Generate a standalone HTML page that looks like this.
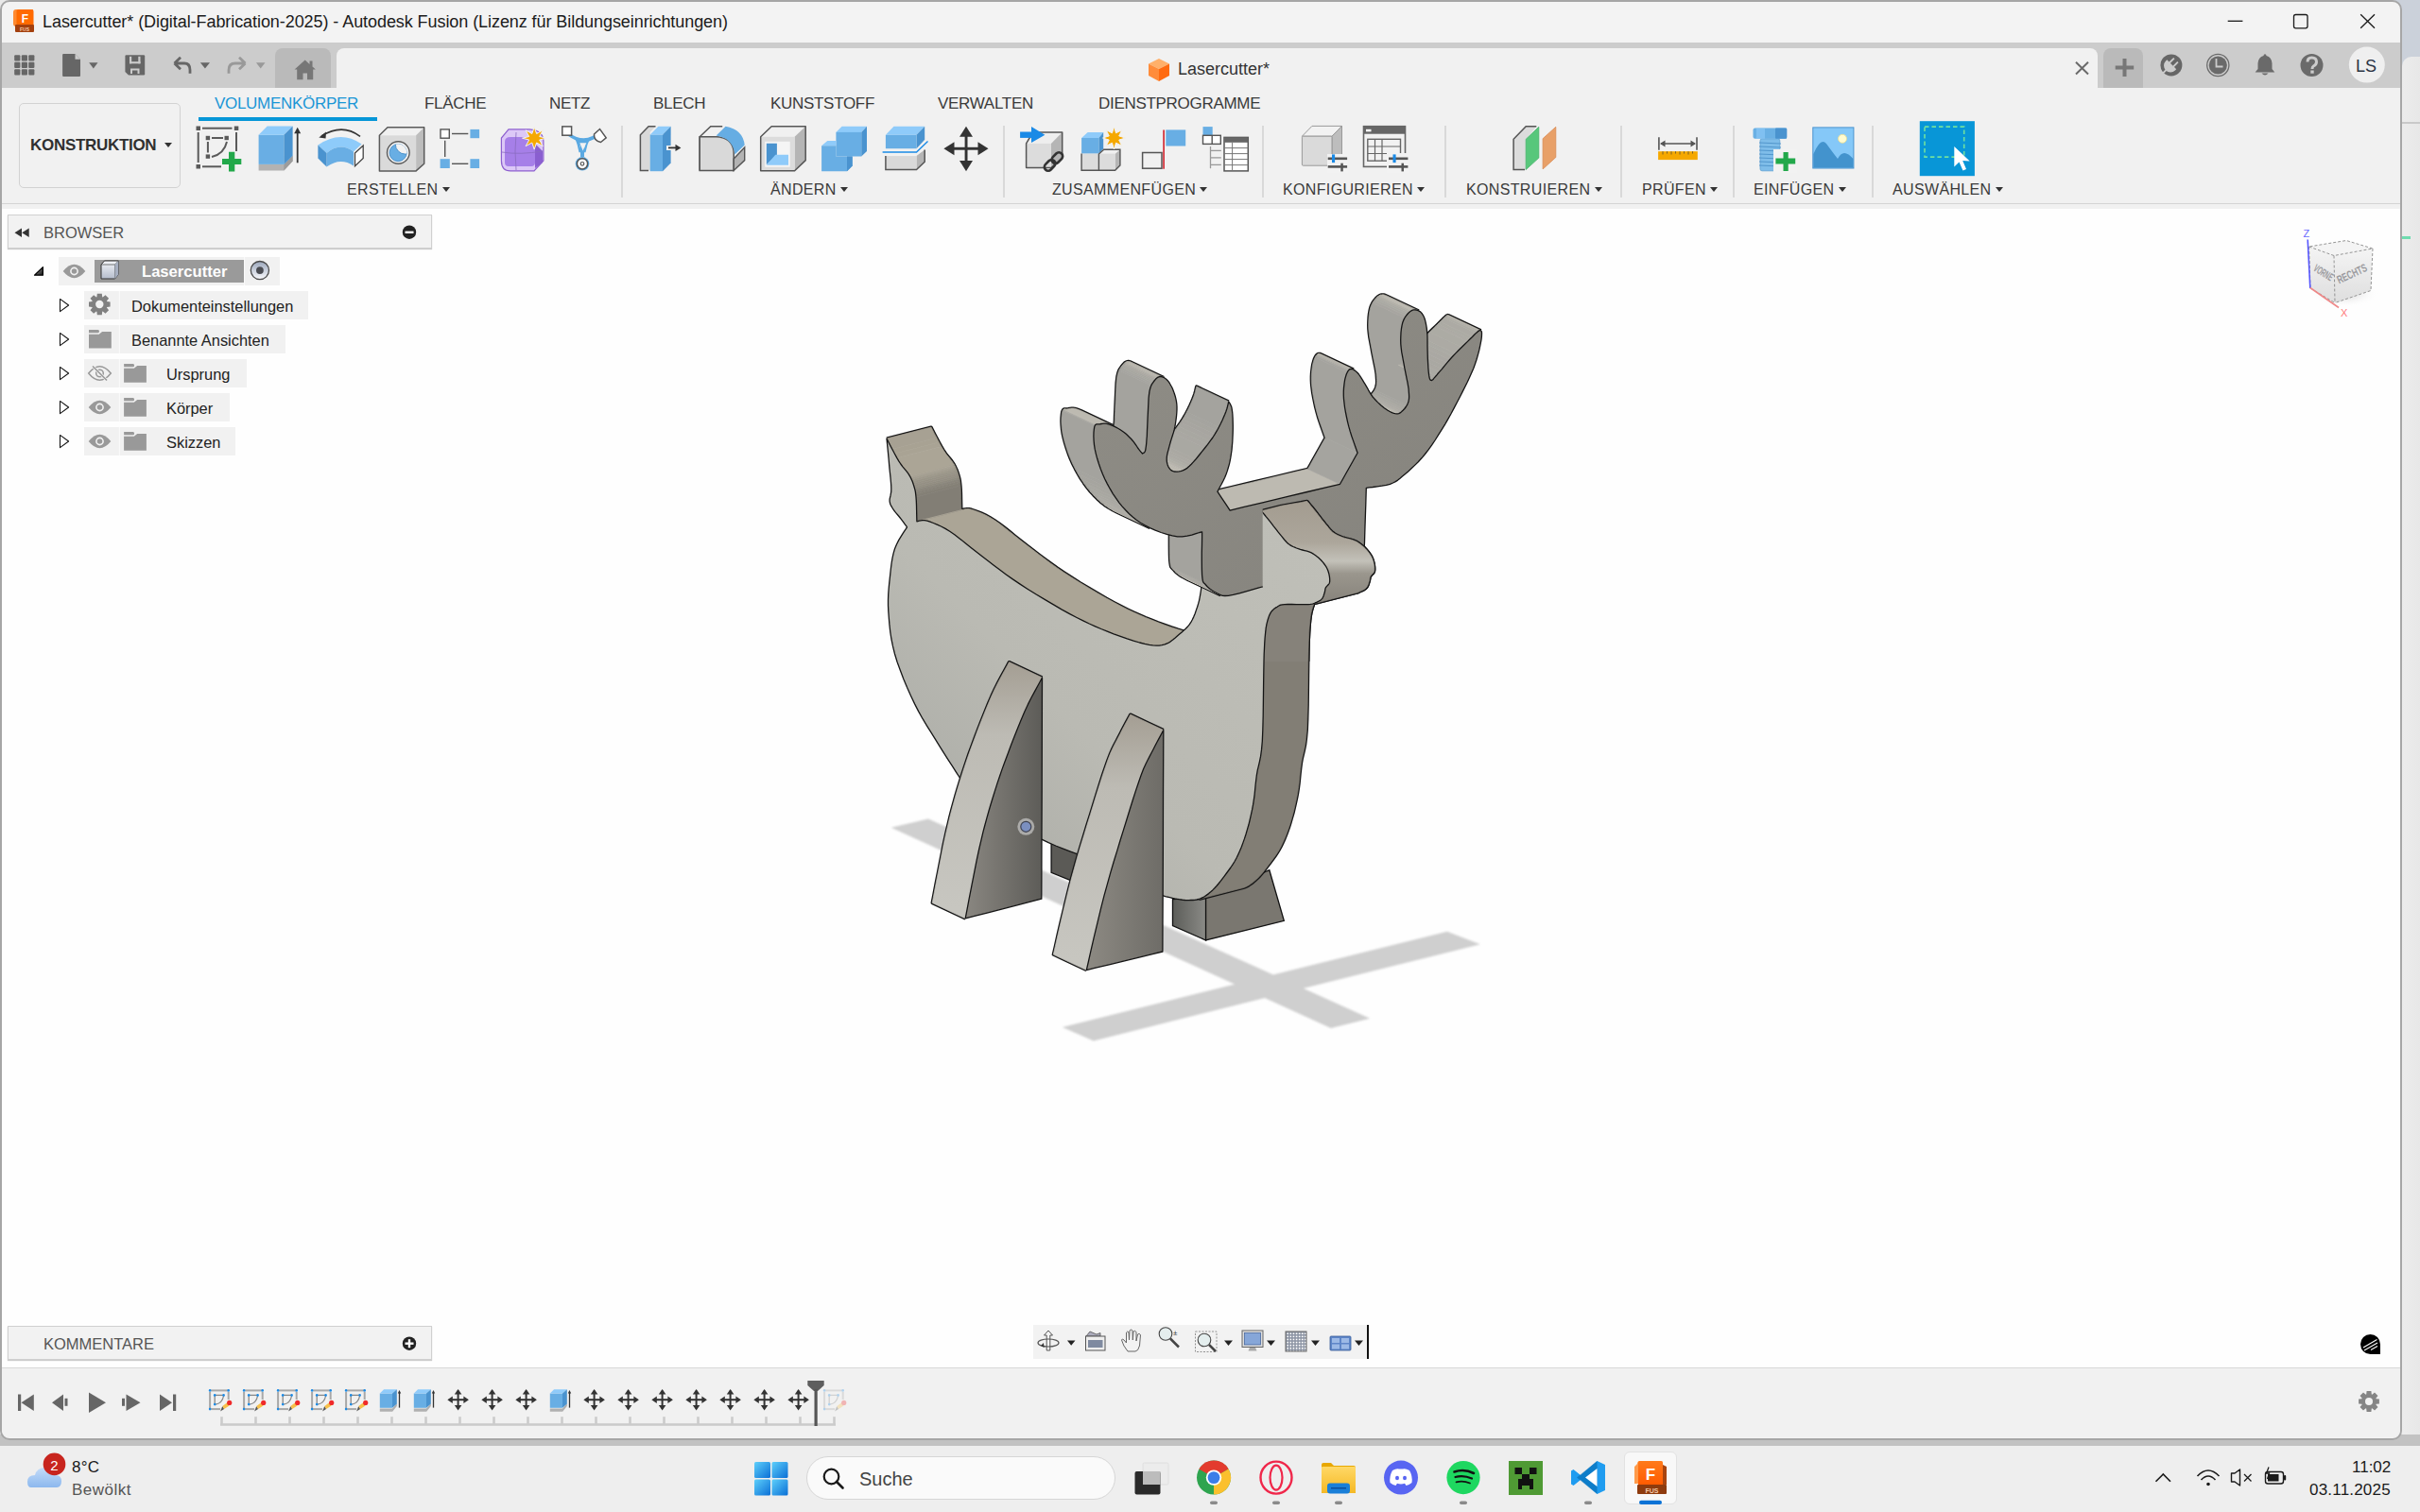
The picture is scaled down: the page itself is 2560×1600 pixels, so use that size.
<!DOCTYPE html>
<html><head><meta charset="utf-8">
<style>
*{margin:0;padding:0;box-sizing:border-box}
html,body{width:2560px;height:1600px;overflow:hidden;background:#e9e9e9;font-family:"Liberation Sans",sans-serif;position:relative}
.a{position:absolute}
svg{position:absolute;overflow:visible}
.t{position:absolute;white-space:nowrap;line-height:1}
.tab{font-size:17px;color:#3a3a3a;top:101px;letter-spacing:-0.3px}
.grp{font-size:16px;color:#3a3a3a;top:193px;letter-spacing:0.35px}
.tri{display:inline-block;width:0;height:0;border-left:4.5px solid transparent;border-right:4.5px solid transparent;border-top:5.7px solid #333;margin-left:4.3px;vertical-align:3.5px}
.sep{position:absolute;top:133px;width:2px;height:76px;background:#d9d9d9}
.row{position:absolute;height:30px;background:#f1f1f1}
.rt{position:absolute;font-size:16.4px;color:#222;line-height:1;white-space:nowrap}
</style></head><body>
<!-- desktop right strip -->
<div class="a" style="left:2530px;top:0;width:30px;height:70px;background:#cbd1da"></div>
<div class="a" style="left:2541px;top:60px;width:40px;height:1470px;background:linear-gradient(90deg,#ececec,#e2e2e2);border-top-left-radius:10px"></div>
<div class="a" style="left:2541px;top:129px;width:19px;height:2px;background:#c9c9c9"></div>
<div class="a" style="left:2541px;top:250px;width:9px;height:3px;background:#6fdcb0"></div>
<div class="a" style="left:0;top:1518px;width:2560px;height:12px;background:#c2c2c2"></div>

<!-- window frame -->
<div class="a" style="left:0;top:0;width:2541px;height:1524px;border:2px solid #a6a6a6;border-radius:10px;background:#f3f3f3"></div>
<!-- tab strip -->
<div class="a" style="left:2px;top:45px;width:2537px;height:48px;background:#cccccc"></div>
<div class="a" style="left:291px;top:51px;width:59px;height:42px;background:#bababa;border-radius:8px 8px 0 0"></div>
<div class="a" style="left:356px;top:51px;width:1863px;height:42px;background:#f1f1f1;border-radius:8px 8px 0 0"></div>
<div class="a" style="left:2px;top:93px;width:2537px;height:128px;background:#f1f1f1"></div>
<div class="a" style="left:2225px;top:51px;width:42px;height:42px;background:#bababa;border-radius:8px 8px 0 0"></div>
<!-- ribbon line -->
<div class="a" style="left:2px;top:215px;width:2537px;height:1px;background:#d4d4d4"></div>
<!-- viewport -->
<div class="a" style="left:2px;top:221px;width:2537px;height:1226px;background:#fefefe"></div>
<div class="a" style="left:2px;top:1448px;width:2537px;height:73px;background:#f1f1f1;border-radius:0 0 8px 8px"></div>
<div class="a" style="left:2px;top:1447px;width:2537px;height:1px;background:#d8d8d8"></div>

<!-- title -->
<div class="t" style="left:45px;top:14px;font-size:18px;color:#1b1b1b;letter-spacing:-0.07px">Lasercutter* (Digital-Fabrication-2025) - Autodesk Fusion (Lizenz für Bildungseinrichtungen)</div>
<div class="t" style="left:1246px;top:64px;font-size:18px;color:#333">Lasercutter*</div>

<!-- ribbon tabs -->
<div class="t tab" style="left:227px;color:#1a96d6">VOLUMENKÖRPER</div>
<div class="a" style="left:210px;top:124px;width:189px;height:4px;background:#0696d7"></div>
<div class="t tab" style="left:449px">FLÄCHE</div>
<div class="t tab" style="left:581px">NETZ</div>
<div class="t tab" style="left:691px">BLECH</div>
<div class="t tab" style="left:815px">KUNSTSTOFF</div>
<div class="t tab" style="left:992px">VERWALTEN</div>
<div class="t tab" style="left:1162px">DIENSTPROGRAMME</div>

<!-- konstruktion -->
<div class="a" style="left:20px;top:109px;width:171px;height:90px;border:1px solid #d2d2d2;border-radius:5px"></div>
<div class="t" style="left:32px;top:145px;font-size:17px;font-weight:bold;color:#303030;letter-spacing:-0.3px">KONSTRUKTION<span class="tri" style="margin-left:9px;border-top-color:#333;border-top-width:5.3px;vertical-align:3px"></span></div>

<!-- group labels -->
<div class="t grp" style="left:367px">ERSTELLEN<span class="tri"></span></div>
<div class="t grp" style="left:815px">ÄNDERN<span class="tri"></span></div>
<div class="t grp" style="left:1113px">ZUSAMMENFÜGEN<span class="tri"></span></div>
<div class="t grp" style="left:1357px">KONFIGURIEREN<span class="tri"></span></div>
<div class="t grp" style="left:1551px">KONSTRUIEREN<span class="tri"></span></div>
<div class="t grp" style="left:1737px">PRÜFEN<span class="tri"></span></div>
<div class="t grp" style="left:1855px">EINFÜGEN<span class="tri"></span></div>
<div class="t grp" style="left:2002px">AUSWÄHLEN<span class="tri"></span></div>
<div class="sep" style="left:657px"></div>
<div class="sep" style="left:1061px"></div>
<div class="sep" style="left:1335px"></div>
<div class="sep" style="left:1528px"></div>
<div class="sep" style="left:1714px"></div>
<div class="sep" style="left:1833px"></div>
<div class="sep" style="left:1980px"></div>

<!-- browser -->
<div class="a" style="left:8px;top:227px;width:449px;height:36px;border:1px solid #d0d0d0;background:#f2f2f2;box-shadow:0 1px 1px #ccc"></div>
<div class="t" style="left:46px;top:238px;font-size:16.5px;color:#555">BROWSER</div>

<!-- tree rows -->
<div class="row" style="left:62px;top:272px;width:234px"></div>
<div class="a" style="left:100px;top:275px;width:158px;height:24px;background:#9a9a9a"></div>
<div class="rt" style="left:150px;top:280px;font-weight:bold;color:#fff;font-size:16.6px">Lasercutter</div>
<div class="row" style="left:89px;top:308px;width:237px"></div>
<div class="rt" style="left:139px;top:316px">Dokumenteinstellungen</div>
<div class="row" style="left:89px;top:344px;width:213px"></div>
<div class="rt" style="left:139px;top:352px">Benannte Ansichten</div>
<div class="row" style="left:89px;top:380px;width:172px"></div>
<div class="rt" style="left:176px;top:388px">Ursprung</div>
<div class="row" style="left:89px;top:416px;width:154px"></div>
<div class="rt" style="left:176px;top:424px">Körper</div>
<div class="row" style="left:89px;top:452px;width:160px"></div>
<div class="rt" style="left:176px;top:460px">Skizzen</div>

<!-- kommentare -->
<div class="a" style="left:8px;top:1403px;width:449px;height:36px;border:1px solid #d0d0d0;background:#f2f2f2;box-shadow:0 1px 1px #ccc"></div>
<div class="t" style="left:46px;top:1414px;font-size:16.5px;color:#555">KOMMENTARE</div>

<svg class="a" style="left:0;top:0" width="2560" height="1600" viewBox="0 0 2560 1600"><path d="M942.7,875.8 L982,866.5 L1449.2,1077.7 L1407.9,1088 Z M1123.8,1087 L1530.8,985.7 L1565.9,999.2 L1156.8,1101.4 Z" fill="#cfcfcf" filter="url(#blur1)"/>
<defs><filter id="blur1"><feGaussianBlur stdDeviation="1.2"/></filter><linearGradient id="gbody" x1="1" y1="0" x2="0" y2="1"><stop offset="0" stop-color="#c0c0b9"/><stop offset="0.6" stop-color="#babab3"/><stop offset="1" stop-color="#a6a7a2"/></linearGradient><linearGradient id="gleg" x1="0" y1="0" x2="1" y2="0"><stop offset="0" stop-color="#8a8781"/><stop offset="1" stop-color="#5d5c58"/></linearGradient><linearGradient id="gleg2" x1="0" y1="0" x2="1" y2="0"><stop offset="0" stop-color="#8d8a83"/><stop offset="1" stop-color="#6e6c67"/></linearGradient><linearGradient id="gant" x1="0" y1="0" x2="1" y2="1"><stop offset="0" stop-color="#8f8d86"/><stop offset="1" stop-color="#85837d"/></linearGradient><linearGradient id="glegs1" gradientUnits="userSpaceOnUse" x1="0" y1="700" x2="0" y2="960"><stop offset="0" stop-color="#a49e93"/><stop offset="0.3" stop-color="#bdbbb4"/><stop offset="1" stop-color="#c7c6c0"/></linearGradient><linearGradient id="glegs2" gradientUnits="userSpaceOnUse" x1="0" y1="755" x2="0" y2="1015"><stop offset="0" stop-color="#a49e93"/><stop offset="0.3" stop-color="#bdbbb4"/><stop offset="1" stop-color="#c7c6c0"/></linearGradient></defs>
<path d="M1112.1,891.3 L1112.1,923.3 L1134.9,932.6 L1142,904.7 Z" fill="#5b5a56" stroke="#111" stroke-width="1.3"/>
<linearGradient id="grl" x1="0" y1="0" x2="1" y2="0"><stop offset="0" stop-color="#5c5d59"/><stop offset="1" stop-color="#8a8a86"/></linearGradient><path d="M1240.5,951.7 L1240.5,979.5 L1275.6,995 L1275.6,949.6 Z" fill="url(#grl)" stroke="#111" stroke-width="1.3"/>
<path d="M1275.6,949.6 L1275.6,995 L1358.3,974.4 L1342.8,920.7 Z" fill="#7a7770" stroke="#111" stroke-width="1.3"/>
<path d="M972.2,551.2 L1019.2,539.2 L1020.9,538.8 L1022.8,538.6 L1025.1,538.6 L1027.8,539.2 L1030.9,540.2 L1034.4,541.5 L1038.3,543.1 L1042.5,545.0 L1047.0,547.4 L1051.7,550.3 L1056.8,553.8 L1062.2,557.9 L1067.9,562.4 L1073.8,567.2 L1079.9,572.1 L1086.0,576.8 L1092.2,581.5 L1098.3,586.2 L1104.7,591.0 L1111.3,595.9 L1118.3,600.9 L1125.7,605.9 L1133.9,611.2 L1142.8,616.8 L1152.2,622.4 L1161.5,627.9 L1170.4,633.1 L1178.6,637.6 L1186.0,641.5 L1192.8,644.9 L1199.3,648.0 L1205.6,650.8 L1211.8,653.5 L1218.3,656.1 L1225.1,658.8 L1232.2,661.4 L1239.3,663.9 L1246.1,666.1 L1252.5,668.0 L1258.0,669.4 L1262.7,670.4 L1266.6,670.9 L1270.1,671.2 L1273.2,671.1 L1276.2,670.6 L1279.2,669.9 L1232.2,681.9" fill="none" stroke="#151515" stroke-width="3.3" stroke-linejoin="round"/>
<path d="M1308.4,547.3 L1355.4,535.3 L1366.5,533.3 L1376.1,531.7 L1382.7,530.3 L1383.6,531.4 L1384.9,533.0 L1386.4,534.9 L1388.1,536.9 L1389.7,538.9 L1391.3,540.9 L1392.8,542.8 L1394.3,544.8 L1395.9,546.8 L1397.5,548.9 L1399.0,550.9 L1400.6,552.8 L1402.1,554.7 L1403.7,556.6 L1405.2,558.5 L1406.7,560.3 L1408.3,562.0 L1409.9,563.4 L1411.5,564.6 L1413.2,565.6 L1414.9,566.5 L1416.6,567.2 L1418.5,568.0 L1420.4,568.7 L1422.5,569.4 L1424.8,570.0 L1427.1,570.6 L1429.5,571.2 L1431.7,571.9 L1433.7,572.7 L1435.5,573.6 L1437.2,574.7 L1438.7,575.8 L1440.2,576.9 L1441.6,578.1 L1442.9,579.3 L1444.2,580.5 L1445.4,581.8 L1446.6,583.2 L1447.6,584.5 L1448.6,585.9 L1449.5,587.2 L1450.3,588.5 L1450.9,589.8 L1451.5,591.1 L1452.0,592.4 L1452.4,593.7 L1452.8,595.1 L1453.1,596.6 L1453.4,598.2 L1453.6,599.9 L1453.7,601.5 L1453.7,603.1 L1453.5,604.4 L1453.1,605.5 L1452.4,606.5 L1451.6,607.3 L1450.8,608.1 L1450.1,608.9 L1449.5,609.7 L1449.1,610.6 L1448.9,611.4 L1448.8,612.3 L1448.6,613.1 L1448.5,614.0 L1448.2,615.0 L1447.9,616.1 L1447.5,617.2 L1447.2,618.4 L1446.7,619.5 L1446.2,620.6 L1445.5,621.6 L1444.7,622.4 L1443.7,623.2 L1442.6,623.9 L1441.4,624.5 L1440.2,625.1 L1439.0,625.6 L1438.0,626.1 L1437.1,626.5 L1436.2,626.9 L1435.0,627.2 L1388.0,639.2" fill="none" stroke="#151515" stroke-width="3.3" stroke-linejoin="round"/>
<path d="M1354.9,640.2 L1401.9,628.2 L1400.8,628.5 L1399.9,629.0 L1399.0,629.5 L1398.0,630.2 L1396.8,630.9 L1395.6,631.7 L1394.4,632.6 L1393.3,633.7 L1392.2,634.8 L1391.3,636.1 L1390.5,637.6 L1389.7,639.2 L1389.1,640.9 L1388.5,642.8 L1387.9,644.7 L1387.4,646.7 L1386.9,648.6 L1386.6,650.4 L1386.2,652.3 L1386.0,654.4 L1385.7,656.9 L1385.4,660.0 L1385.1,663.2 L1384.9,666.1 L1384.7,669.5 L1384.5,673.9 L1384.2,679.9 L1384.0,688.0 L1383.8,699.4 L1383.6,713.8 L1383.4,729.8 L1383.2,745.9 L1382.8,760.7 L1382.3,772.6 L1381.5,781.4 L1380.6,788.2 L1379.5,793.6 L1378.4,798.3 L1377.3,802.9 L1376.4,808.0 L1375.7,813.5 L1375.1,818.8 L1374.6,824.0 L1374.1,829.1 L1373.4,834.2 L1372.6,839.4 L1371.6,844.7 L1370.4,850.1 L1369.2,855.5 L1367.9,860.8 L1366.4,865.9 L1365.0,870.8 L1363.5,875.4 L1361.9,879.9 L1360.3,884.2 L1358.6,888.3 L1356.8,892.2 L1355.0,896.0 L1353.1,899.5 L1351.0,902.9 L1348.9,906.0 L1346.7,909.0 L1344.5,912.0 L1342.4,914.8 L1340.3,917.6 L1338.2,920.3 L1336.1,923.0 L1334.0,925.5 L1331.9,927.8 L1329.8,929.9 L1327.7,931.8 L1325.6,933.6 L1323.5,935.1 L1321.5,936.5 L1319.4,937.7 L1317.3,938.7 L1315.2,939.5 L1268.2,951.5" fill="none" stroke="#151515" stroke-width="3.3" stroke-linejoin="round"/>
<path d="M938.0,464.1 L985.0,452.1 L986.4,454.8 L988.4,458.7 L990.8,463.2 L993.3,468.0 L995.7,472.4 L997.9,476.1 L999.8,479.0 L1001.7,481.6 L1003.6,483.8 L1005.3,485.9 L1006.9,487.9 L1008.3,489.9 L1009.5,491.9 L1010.5,493.8 L1011.3,495.6 L1012.1,497.3 L1012.8,499.2 L1013.4,501.1 L1014.0,503.0 L1014.5,504.8 L1015.0,506.6 L1015.4,508.7 L1015.7,511.1 L1016.0,514.0 L1016.3,517.9 L1016.5,522.6 L1016.6,527.7 L1016.7,532.6 L1016.8,536.8 L1016.9,539.8 L1017.9,539.6 L970.9,551.6" fill="none" stroke="#151515" stroke-width="3.3" stroke-linejoin="round"/>
<path d="M972.2,551.2 L973.9,550.8 L975.8,550.6 L978.1,550.6 L980.8,551.2 L983.9,552.2 L987.4,553.5 L991.3,555.1 L995.5,557.0 L1000.0,559.4 L1004.7,562.3 L1009.8,565.8 L1015.2,569.9 L1020.9,574.4 L1026.8,579.2 L1032.9,584.1 L1039.0,588.8 L1045.2,593.5 L1051.3,598.2 L1057.7,603.0 L1064.3,607.9 L1071.3,612.9 L1078.7,617.9 L1086.9,623.2 L1095.8,628.8 L1105.2,634.4 L1114.5,639.9 L1123.4,645.1 L1131.6,649.6 L1139.0,653.5 L1145.8,656.9 L1152.3,660.0 L1158.6,662.8 L1164.8,665.5 L1171.3,668.1 L1178.1,670.8 L1185.2,673.4 L1192.3,675.9 L1199.1,678.1 L1205.5,680.0 L1211.0,681.4 L1215.7,682.4 L1219.6,682.9 L1223.1,683.2 L1226.2,683.1 L1229.2,682.6 L1232.2,681.9 L1279.2,669.9 L1276.2,670.6 L1273.2,671.1 L1270.1,671.2 L1266.6,670.9 L1262.7,670.4 L1258.0,669.4 L1252.5,668.0 L1246.1,666.1 L1239.3,663.9 L1232.2,661.4 L1225.1,658.8 L1218.3,656.1 L1211.8,653.5 L1205.6,650.8 L1199.3,648.0 L1192.8,644.9 L1186.0,641.5 L1178.6,637.6 L1170.4,633.1 L1161.5,627.9 L1152.2,622.4 L1142.8,616.8 L1133.9,611.2 L1125.7,605.9 L1118.3,600.9 L1111.3,595.9 L1104.7,591.0 L1098.3,586.2 L1092.2,581.5 L1086.0,576.8 L1079.9,572.1 L1073.8,567.2 L1067.9,562.4 L1062.2,557.9 L1056.8,553.8 L1051.7,550.3 L1047.0,547.4 L1042.5,545.0 L1038.3,543.1 L1034.4,541.5 L1030.9,540.2 L1027.8,539.2 L1025.1,538.6 L1022.8,538.6 L1020.9,538.8 L1019.2,539.2Z" fill="#aba596" stroke="#aba596" stroke-width="0.7"/>
<path d="M1308.4,547.3 L1319.5,545.3 L1329.1,543.7 L1335.7,542.3 L1336.6,543.4 L1337.9,545.0 L1339.4,546.9 L1341.1,548.9 L1342.7,550.9 L1344.3,552.9 L1345.8,554.8 L1347.3,556.8 L1348.9,558.8 L1350.5,560.9 L1352.0,562.9 L1353.6,564.8 L1355.1,566.7 L1356.7,568.6 L1358.2,570.5 L1359.7,572.3 L1361.3,574.0 L1362.9,575.4 L1364.5,576.6 L1366.2,577.6 L1367.9,578.5 L1369.6,579.2 L1371.5,580.0 L1373.4,580.7 L1375.5,581.4 L1377.8,582.0 L1380.1,582.6 L1382.5,583.2 L1384.7,583.9 L1386.7,584.7 L1388.5,585.6 L1390.2,586.7 L1391.7,587.8 L1393.2,588.9 L1394.6,590.1 L1395.9,591.3 L1397.2,592.5 L1398.4,593.8 L1399.6,595.2 L1400.6,596.5 L1401.6,597.9 L1402.5,599.2 L1403.3,600.5 L1450.3,588.5 L1449.5,587.2 L1448.6,585.9 L1447.6,584.5 L1446.6,583.2 L1445.4,581.8 L1444.2,580.5 L1442.9,579.3 L1441.6,578.1 L1440.2,576.9 L1438.7,575.8 L1437.2,574.7 L1435.5,573.6 L1433.7,572.7 L1431.7,571.9 L1429.5,571.2 L1427.1,570.6 L1424.8,570.0 L1422.5,569.4 L1420.4,568.7 L1418.5,568.0 L1416.6,567.2 L1414.9,566.5 L1413.2,565.6 L1411.5,564.6 L1409.9,563.4 L1408.3,562.0 L1406.7,560.3 L1405.2,558.5 L1403.7,556.6 L1402.1,554.7 L1400.6,552.8 L1399.0,550.9 L1397.5,548.9 L1395.9,546.8 L1394.3,544.8 L1392.8,542.8 L1391.3,540.9 L1389.7,538.9 L1388.1,536.9 L1386.4,534.9 L1384.9,533.0 L1383.6,531.4 L1382.7,530.3 L1376.1,531.7 L1366.5,533.3 L1355.4,535.3Z" fill="#aba596" stroke="#aba596" stroke-width="0.7"/>
<path d="M1403.3,600.5 L1403.9,601.8 L1450.9,589.8 L1450.3,588.5Z" fill="#a7a193" stroke="#a7a193" stroke-width="0.7"/>
<path d="M1403.9,601.8 L1404.5,603.1 L1451.5,591.1 L1450.9,589.8Z" fill="#a29c8e" stroke="#a29c8e" stroke-width="0.7"/>
<path d="M1404.5,603.1 L1405.0,604.4 L1452.0,592.4 L1451.5,591.1Z" fill="#9c978a" stroke="#9c978a" stroke-width="0.7"/>
<path d="M1405.0,604.4 L1405.4,605.7 L1452.4,593.7 L1452.0,592.4Z" fill="#979286" stroke="#979286" stroke-width="0.7"/>
<path d="M1405.4,605.7 L1405.8,607.1 L1452.8,595.1 L1452.4,593.7Z" fill="#928d82" stroke="#928d82" stroke-width="0.7"/>
<path d="M1405.8,607.1 L1406.1,608.6 L1453.1,596.6 L1452.8,595.1Z" fill="#8d897e" stroke="#8d897e" stroke-width="0.7"/>
<path d="M1406.1,608.6 L1406.4,610.2 L1453.4,598.2 L1453.1,596.6Z" fill="#8a857b" stroke="#8a857b" stroke-width="0.7"/>
<path d="M1406.4,610.2 L1406.6,611.9 L1453.6,599.9 L1453.4,598.2Z" fill="#858178" stroke="#858178" stroke-width="0.7"/>
<path d="M1406.6,611.9 L1406.7,613.5 L1406.7,615.1 L1406.5,616.4 L1406.1,617.5 L1405.4,618.5 L1404.6,619.3 L1403.8,620.1 L1403.1,620.9 L1402.5,621.7 L1402.1,622.6 L1401.9,623.4 L1401.8,624.3 L1401.6,625.1 L1401.5,626.0 L1401.2,627.0 L1400.9,628.1 L1400.5,629.2 L1400.2,630.4 L1399.7,631.5 L1399.2,632.6 L1398.5,633.6 L1397.7,634.4 L1396.7,635.2 L1395.6,635.9 L1394.4,636.5 L1393.2,637.1 L1392.0,637.6 L1391.0,638.1 L1390.1,638.5 L1389.2,638.9 L1388.0,639.2 L1435.0,627.2 L1436.2,626.9 L1437.1,626.5 L1438.0,626.1 L1439.0,625.6 L1440.2,625.1 L1441.4,624.5 L1442.6,623.9 L1443.7,623.2 L1444.7,622.4 L1445.5,621.6 L1446.2,620.6 L1446.7,619.5 L1447.2,618.4 L1447.5,617.2 L1447.9,616.1 L1448.2,615.0 L1448.5,614.0 L1448.6,613.1 L1448.8,612.3 L1448.9,611.4 L1449.1,610.6 L1449.5,609.7 L1450.1,608.9 L1450.8,608.1 L1451.6,607.3 L1452.4,606.5 L1453.1,605.5 L1453.5,604.4 L1453.7,603.1 L1453.7,601.5 L1453.6,599.9Z" fill="#827e75" stroke="#827e75" stroke-width="0.7"/>
<path d="M1354.9,640.2 L1353.8,640.5 L1352.9,641.0 L1352.0,641.5 L1351.0,642.2 L1349.8,642.9 L1348.6,643.7 L1347.4,644.6 L1346.3,645.7 L1345.2,646.8 L1344.3,648.1 L1343.5,649.6 L1342.7,651.2 L1342.1,652.9 L1341.5,654.8 L1340.9,656.7 L1340.4,658.7 L1339.9,660.6 L1339.6,662.4 L1339.2,664.3 L1339.0,666.4 L1338.7,668.9 L1338.4,672.0 L1338.1,675.2 L1337.9,678.1 L1337.7,681.5 L1337.5,685.9 L1337.2,691.9 L1337.0,700.0 L1336.8,711.4 L1336.6,725.8 L1336.4,741.8 L1336.2,757.9 L1335.8,772.7 L1335.3,784.6 L1334.5,793.4 L1333.6,800.2 L1332.5,805.6 L1331.4,810.3 L1330.3,814.9 L1329.4,820.0 L1328.7,825.5 L1328.1,830.8 L1327.6,836.0 L1327.1,841.1 L1326.4,846.2 L1325.6,851.4 L1324.6,856.7 L1323.4,862.1 L1322.2,867.5 L1320.9,872.8 L1319.4,877.9 L1318.0,882.8 L1316.5,887.4 L1314.9,891.9 L1313.3,896.2 L1311.6,900.3 L1309.8,904.2 L1308.0,908.0 L1306.1,911.5 L1304.0,914.9 L1301.9,918.0 L1299.7,921.0 L1297.5,924.0 L1295.4,926.8 L1293.3,929.6 L1291.2,932.3 L1289.1,935.0 L1287.0,937.5 L1284.9,939.8 L1282.8,941.9 L1280.7,943.8 L1278.6,945.6 L1276.5,947.1 L1274.5,948.5 L1272.4,949.7 L1270.3,950.7 L1268.2,951.5 L1315.2,939.5 L1317.3,938.7 L1319.4,937.7 L1321.5,936.5 L1323.5,935.1 L1325.6,933.6 L1327.7,931.8 L1329.8,929.9 L1331.9,927.8 L1334.0,925.5 L1336.1,923.0 L1338.2,920.3 L1340.3,917.6 L1342.4,914.8 L1344.5,912.0 L1346.7,909.0 L1348.9,906.0 L1351.0,902.9 L1353.1,899.5 L1355.0,896.0 L1356.8,892.2 L1358.6,888.3 L1360.3,884.2 L1361.9,879.9 L1363.5,875.4 L1365.0,870.8 L1366.4,865.9 L1367.9,860.8 L1369.2,855.5 L1370.4,850.1 L1371.6,844.7 L1372.6,839.4 L1373.4,834.2 L1374.1,829.1 L1374.6,824.0 L1375.1,818.8 L1375.7,813.5 L1376.4,808.0 L1377.3,802.9 L1378.4,798.3 L1379.5,793.6 L1380.6,788.2 L1381.5,781.4 L1382.3,772.6 L1382.8,760.7 L1383.2,745.9 L1383.4,729.8 L1383.6,713.8 L1383.8,699.4 L1384.0,688.0 L1384.2,679.9 L1384.5,673.9 L1384.7,669.5 L1384.9,666.1 L1385.1,663.2 L1385.4,660.0 L1385.7,656.9 L1386.0,654.4 L1386.2,652.3 L1386.6,650.4 L1386.9,648.6 L1387.4,646.7 L1387.9,644.7 L1388.5,642.8 L1389.1,640.9 L1389.7,639.2 L1390.5,637.6 L1391.3,636.1 L1392.2,634.8 L1393.3,633.7 L1394.4,632.6 L1395.6,631.7 L1396.8,630.9 L1398.0,630.2 L1399.0,629.5 L1399.9,629.0 L1400.8,628.5 L1401.9,628.2Z" fill="#827e75" stroke="#827e75" stroke-width="0.7"/>
<path d="M938.0,464.1 L939.4,466.8 L941.4,470.7 L943.8,475.2 L990.8,463.2 L988.4,458.7 L986.4,454.8 L985.0,452.1Z" fill="#a7a193" stroke="#a7a193" stroke-width="0.7"/>
<path d="M943.8,475.2 L946.3,480.0 L993.3,468.0 L990.8,463.2Z" fill="#a8a293" stroke="#a8a293" stroke-width="0.7"/>
<path d="M946.3,480.0 L948.7,484.4 L995.7,472.4 L993.3,468.0Z" fill="#a9a394" stroke="#a9a394" stroke-width="0.7"/>
<path d="M948.7,484.4 L950.9,488.1 L952.8,491.0 L954.7,493.6 L956.6,495.8 L958.3,497.9 L959.9,499.9 L961.3,501.9 L962.5,503.9 L1009.5,491.9 L1008.3,489.9 L1006.9,487.9 L1005.3,485.9 L1003.6,483.8 L1001.7,481.6 L999.8,479.0 L997.9,476.1 L995.7,472.4Z" fill="#aba596" stroke="#aba596" stroke-width="0.7"/>
<path d="M962.5,503.9 L963.5,505.8 L1010.5,493.8 L1009.5,491.9Z" fill="#a8a294" stroke="#a8a294" stroke-width="0.7"/>
<path d="M963.5,505.8 L964.3,507.6 L1011.3,495.6 L1010.5,493.8Z" fill="#a39e90" stroke="#a39e90" stroke-width="0.7"/>
<path d="M964.3,507.6 L965.1,509.3 L1012.1,497.3 L1011.3,495.6Z" fill="#9f9a8c" stroke="#9f9a8c" stroke-width="0.7"/>
<path d="M965.1,509.3 L965.8,511.2 L1012.8,499.2 L1012.1,497.3Z" fill="#9b9689" stroke="#9b9689" stroke-width="0.7"/>
<path d="M965.8,511.2 L966.4,513.1 L1013.4,501.1 L1012.8,499.2Z" fill="#989387" stroke="#989387" stroke-width="0.7"/>
<path d="M966.4,513.1 L967.0,515.0 L1014.0,503.0 L1013.4,501.1Z" fill="#969185" stroke="#969185" stroke-width="0.7"/>
<path d="M967.0,515.0 L967.5,516.8 L1014.5,504.8 L1014.0,503.0Z" fill="#948f84" stroke="#948f84" stroke-width="0.7"/>
<path d="M967.5,516.8 L968.0,518.6 L1015.0,506.6 L1014.5,504.8Z" fill="#908c80" stroke="#908c80" stroke-width="0.7"/>
<path d="M968.0,518.6 L968.4,520.7 L1015.4,508.7 L1015.0,506.6Z" fill="#8b877d" stroke="#8b877d" stroke-width="0.7"/>
<path d="M968.4,520.7 L968.7,523.1 L1015.7,511.1 L1015.4,508.7Z" fill="#878379" stroke="#878379" stroke-width="0.7"/>
<path d="M968.7,523.1 L969.0,526.0 L1016.0,514.0 L1015.7,511.1Z" fill="#848076" stroke="#848076" stroke-width="0.7"/>
<path d="M969.0,526.0 L969.3,529.9 L969.5,534.6 L969.6,539.7 L969.7,544.6 L969.8,548.8 L969.9,551.8 L1016.9,539.8 L1016.8,536.8 L1016.7,532.6 L1016.6,527.7 L1016.5,522.6 L1016.3,517.9 L1016.0,514.0Z" fill="#827e75" stroke="#827e75" stroke-width="0.7"/>
<path d="M969.9,551.8 L970.9,551.6 L1017.9,539.6 L1016.9,539.8Z" fill="#aba596" stroke="#aba596" stroke-width="0.7"/>
<path d="M938.0,464.1 L939.4,466.8 L941.4,470.7 L943.8,475.2 L946.3,480.0 L948.7,484.4 L950.9,488.1 L952.8,491.0 L954.7,493.6 L956.6,495.8 L958.3,497.9 L959.9,499.9 L961.3,501.9 L962.5,503.9 L963.5,505.8 L964.3,507.6 L965.1,509.3 L965.8,511.2 L966.4,513.1 L967.0,515.0 L967.5,516.8 L968.0,518.6 L968.4,520.7 L968.7,523.1 L969.0,526.0 L969.3,529.9 L969.5,534.6 L969.6,539.7 L969.7,544.6 L969.8,548.8 L969.9,551.8 L970.9,551.6 L972.2,551.2 L973.9,550.8 L975.8,550.6 L978.1,550.6 L980.8,551.2 L983.9,552.2 L987.4,553.5 L991.3,555.1 L995.5,557.0 L1000.0,559.4 L1004.7,562.3 L1009.8,565.8 L1015.2,569.9 L1020.9,574.4 L1026.8,579.2 L1032.9,584.1 L1039.0,588.8 L1045.2,593.5 L1051.3,598.2 L1057.7,603.0 L1064.3,607.9 L1071.3,612.9 L1078.7,617.9 L1086.9,623.2 L1095.8,628.8 L1105.2,634.4 L1114.5,639.9 L1123.4,645.1 L1131.6,649.6 L1139.0,653.5 L1145.8,656.9 L1152.3,660.0 L1158.6,662.8 L1164.8,665.5 L1171.3,668.1 L1178.1,670.8 L1185.2,673.4 L1192.3,675.9 L1199.1,678.1 L1205.5,680.0 L1211.0,681.4 L1215.7,682.4 L1219.6,682.9 L1223.1,683.2 L1226.2,683.1 L1229.2,682.6 L1232.2,681.9 L1235.2,680.7 L1238.0,679.1 L1240.7,677.1 L1243.2,675.0 L1245.7,672.8 L1248.0,670.8 L1250.2,668.9 L1252.3,667.1 L1254.3,665.3 L1256.2,663.3 L1258.0,661.2 L1259.7,658.7 L1261.3,655.8 L1262.8,652.6 L1264.2,649.2 L1265.4,645.6 L1266.6,642.2 L1267.6,638.9 L1268.5,635.6 L1269.2,632.1 L1269.8,628.7 L1270.3,625.6 L1270.7,622.9 L1271.0,621.0 L1271.4,613.9 L1271.6,603.6 L1272.0,591.6 L1273.2,579.4 L1275.7,568.4 L1280.0,560.0 L1287.2,554.3 L1297.2,550.2 L1308.4,547.3 L1319.5,545.3 L1329.1,543.7 L1335.7,542.3 L1336.6,543.4 L1337.9,545.0 L1339.4,546.9 L1341.1,548.9 L1342.7,550.9 L1344.3,552.9 L1345.8,554.8 L1347.3,556.8 L1348.9,558.8 L1350.5,560.9 L1352.0,562.9 L1353.6,564.8 L1355.1,566.7 L1356.7,568.6 L1358.2,570.5 L1359.7,572.3 L1361.3,574.0 L1362.9,575.4 L1364.5,576.6 L1366.2,577.6 L1367.9,578.5 L1369.6,579.2 L1371.5,580.0 L1373.4,580.7 L1375.5,581.4 L1377.8,582.0 L1380.1,582.6 L1382.5,583.2 L1384.7,583.9 L1386.7,584.7 L1388.5,585.6 L1390.2,586.7 L1391.7,587.8 L1393.2,588.9 L1394.6,590.1 L1395.9,591.3 L1397.2,592.5 L1398.4,593.8 L1399.6,595.2 L1400.6,596.5 L1401.6,597.9 L1402.5,599.2 L1403.3,600.5 L1403.9,601.8 L1404.5,603.1 L1405.0,604.4 L1405.4,605.7 L1405.8,607.1 L1406.1,608.6 L1406.4,610.2 L1406.6,611.9 L1406.7,613.5 L1406.7,615.1 L1406.5,616.4 L1406.1,617.5 L1405.4,618.5 L1404.6,619.3 L1403.8,620.1 L1403.1,620.9 L1402.5,621.7 L1402.1,622.6 L1401.9,623.4 L1401.8,624.3 L1401.6,625.1 L1401.5,626.0 L1401.2,627.0 L1400.9,628.1 L1400.5,629.2 L1400.2,630.4 L1399.7,631.5 L1399.2,632.6 L1398.5,633.6 L1397.7,634.4 L1396.7,635.2 L1395.6,635.9 L1394.4,636.5 L1393.2,637.1 L1392.0,637.6 L1391.0,638.1 L1390.1,638.5 L1389.2,638.9 L1388.0,639.2 L1386.3,639.4 L1384.0,639.6 L1380.6,639.7 L1376.3,639.7 L1371.4,639.6 L1366.6,639.5 L1362.3,639.5 L1358.9,639.6 L1356.6,639.8 L1354.9,640.2 L1353.8,640.5 L1352.9,641.0 L1352.0,641.5 L1351.0,642.2 L1349.8,642.9 L1348.6,643.7 L1347.4,644.6 L1346.3,645.7 L1345.2,646.8 L1344.3,648.1 L1343.5,649.6 L1342.7,651.2 L1342.1,652.9 L1341.5,654.8 L1340.9,656.7 L1340.4,658.7 L1339.9,660.6 L1339.6,662.4 L1339.2,664.3 L1339.0,666.4 L1338.7,668.9 L1338.4,672.0 L1338.1,675.2 L1337.9,678.1 L1337.7,681.5 L1337.5,685.9 L1337.2,691.9 L1337.0,700.0 L1336.8,711.4 L1336.6,725.8 L1336.4,741.8 L1336.2,757.9 L1335.8,772.7 L1335.3,784.6 L1334.5,793.4 L1333.6,800.2 L1332.5,805.6 L1331.4,810.3 L1330.3,814.9 L1329.4,820.0 L1328.7,825.5 L1328.1,830.8 L1327.6,836.0 L1327.1,841.1 L1326.4,846.2 L1325.6,851.4 L1324.6,856.7 L1323.4,862.1 L1322.2,867.5 L1320.9,872.8 L1319.4,877.9 L1318.0,882.8 L1316.5,887.4 L1314.9,891.9 L1313.3,896.2 L1311.6,900.3 L1309.8,904.2 L1308.0,908.0 L1306.1,911.5 L1304.0,914.9 L1301.9,918.0 L1299.7,921.0 L1297.5,924.0 L1295.4,926.8 L1293.3,929.6 L1291.2,932.3 L1289.1,935.0 L1287.0,937.5 L1284.9,939.8 L1282.8,941.9 L1280.7,943.8 L1278.6,945.6 L1276.5,947.1 L1274.5,948.5 L1272.4,949.7 L1270.3,950.7 L1268.2,951.5 L1266.1,952.0 L1264.0,952.3 L1261.9,952.5 L1259.8,952.5 L1257.7,952.6 L1255.6,952.6 L1253.5,952.5 L1251.5,952.3 L1249.4,952.0 L1247.3,951.7 L1245.1,951.3 L1242.7,950.9 L1240.1,950.3 L1237.4,949.7 L1234.9,949.1 L1232.8,948.6 L1231.3,948.2 L1220.6,943.0 L1204.9,935.3 L1186.7,926.5 L1168.5,917.6 L1152.8,909.9 L1142.1,904.7 L1137.7,903.0 L1131.7,900.8 L1124.6,898.1 L1116.8,895.0 L1109.1,891.7 L1101.8,888.2 L1094.9,884.5 L1088.0,880.5 L1081.0,876.3 L1074.0,871.8 L1067.0,867.0 L1060.0,862.0 L1052.5,856.3 L1044.4,849.7 L1036.3,842.8 L1028.8,836.3 L1022.5,830.8 L1017.9,826.9 L1015.3,823.0 L1011.8,817.6 L1007.7,811.2 L1003.1,804.1 L998.5,796.9 L994.1,789.8 L989.8,782.9 L985.3,775.7 L980.7,768.3 L976.1,760.7 L971.7,752.9 L967.6,744.9 L963.6,736.5 L959.6,727.6 L955.8,718.5 L952.3,709.3 L949.1,700.5 L946.5,692.0 L944.5,683.9 L942.9,676.0 L941.7,668.3 L940.9,660.9 L940.3,653.8 L939.8,647.0 L939.5,640.6 L939.5,634.7 L939.7,629.0 L940.1,623.5 L940.6,618.1 L941.2,612.6 L941.8,607.0 L942.4,601.5 L943.1,596.0 L944.0,590.7 L945.1,585.6 L946.5,580.8 L948.4,576.2 L950.7,571.6 L953.3,567.3 L955.8,563.4 L958.0,560.2 L959.5,557.8 L958.7,556.7 L957.5,555.1 L956.1,553.2 L954.6,551.2 L953.1,549.2 L951.8,547.5 L950.6,546.0 L949.3,544.5 L948.1,543.1 L946.9,541.7 L945.9,540.3 L944.9,538.9 L944.0,537.5 L943.2,536.2 L942.5,534.9 L941.8,533.5 L941.4,532.0 L941.1,530.3 L941.1,528.5 L941.4,526.8 L941.9,524.9 L942.3,522.8 L942.7,520.3 L942.8,517.4 L942.7,513.9 L942.4,509.8 L942.0,505.4 L941.5,500.8 L941.0,496.1 L940.6,491.6 L940.2,486.8 L939.7,481.5 L939.2,476.2 L938.7,471.3 L938.3,467.1Z" fill="url(#gbody)" stroke="#151515" stroke-width="1.3" stroke-linejoin="round"/>
<path d="M1208.5,480.0 L1174.5,464.0 L1174.9,463.8 L1175.4,463.5 L1176.0,463.2 L1176.6,462.7 L1177.2,461.8 L1177.7,460.6 L1178.0,458.6 L1178.4,456.0 L1178.7,453.1 L1178.9,450.2 L1179.1,447.7 L1179.3,446.0 L1179.4,443.4 L1179.5,439.8 L1179.7,435.6 L1179.9,431.0 L1180.1,426.4 L1180.3,422.2 L1180.5,418.1 L1180.7,413.8 L1180.9,409.5 L1181.1,405.3 L1181.5,401.6 L1181.9,398.4 L1182.5,395.8 L1183.1,393.7 L1183.8,391.9 L1184.6,390.4 L1185.5,389.1 L1186.4,387.8 L1187.4,386.5 L1188.4,385.3 L1189.5,384.2 L1190.6,383.4 L1191.8,382.8 L1193.0,382.5 L1194.3,382.5 L1195.6,382.8 L1197.0,383.4 L1231.0,399.4" fill="none" stroke="#151515" stroke-width="3.3" stroke-linejoin="round"/>
<path d="M1239.8,498.1 L1205.8,482.1 L1207.1,482.6 L1208.5,483.0 L1210.0,483.1 L1211.5,483.1 L1213.1,482.9 L1214.8,482.6 L1216.5,482.1 L1218.3,481.4 L1220.2,480.4 L1222.1,479.1 L1224.1,477.3 L1226.2,475.3 L1228.4,472.9 L1230.7,470.3 L1233.0,467.5 L1235.4,464.5 L1237.9,461.4 L1240.6,458.0 L1243.5,454.4 L1246.2,450.7 L1248.9,447.0 L1251.2,443.4 L1253.4,439.7 L1255.4,436.0 L1257.3,432.3 L1259.0,428.7 L1260.5,425.3 L1261.8,422.2 L1262.9,419.4 L1263.8,416.7 L1264.5,414.2 L1265.0,412.1 L1265.4,410.3 L1265.8,409.0 L1299.8,425.0" fill="none" stroke="#151515" stroke-width="3.3" stroke-linejoin="round"/>
<path d="M1301.1,540.1 L1267.1,524.1 L1281.1,520.7 L1301.6,515.8 L1325.3,510.2 L1349.0,504.5 L1369.5,499.6 L1383.5,496.3 L1385.8,492.3 L1389.0,486.5 L1392.8,479.7 L1396.6,473.0 L1399.8,467.2 L1402.1,463.2 L1401.0,460.2 L1399.5,456.0 L1397.8,451.1 L1395.9,445.8 L1394.2,440.4 L1392.8,435.4 L1391.6,430.6 L1390.5,425.5 L1389.5,420.5 L1388.6,415.5 L1388.0,410.7 L1387.5,406.3 L1387.3,402.2 L1387.3,398.3 L1387.5,394.6 L1387.9,391.1 L1388.3,388.0 L1388.8,385.1 L1389.5,382.6 L1390.2,380.3 L1391.1,378.3 L1392.0,376.6 L1393.0,375.4 L1394.1,374.6 L1395.3,374.3 L1396.6,374.5 L1397.9,375.1 L1431.9,391.1" fill="none" stroke="#151515" stroke-width="3.3" stroke-linejoin="round"/>
<path d="M1471.5,436.2 L1437.5,420.2 L1439.1,420.9 L1440.6,421.4 L1441.9,421.7 L1443.2,421.9 L1444.5,421.9 L1445.7,421.6 L1447.1,420.9 L1448.5,419.8 L1450.1,418.3 L1451.8,416.5 L1453.3,414.5 L1454.6,412.4 L1455.5,410.3 L1456.1,408.2 L1456.5,406.0 L1456.6,403.7 L1456.5,401.3 L1456.3,398.7 L1456.1,395.7 L1455.6,392.5 L1455.0,388.9 L1454.2,385.1 L1453.4,381.2 L1452.6,377.2 L1451.8,373.2 L1451.1,369.2 L1450.3,365.0 L1449.5,360.7 L1448.7,356.4 L1448.2,352.2 L1447.8,348.1 L1447.7,344.1 L1447.8,340.0 L1448.0,336.0 L1448.4,332.2 L1449.0,328.7 L1449.7,325.6 L1450.7,322.9 L1451.9,320.5 L1453.3,318.3 L1454.8,316.5 L1456.2,314.9 L1457.6,313.7 L1459.0,312.8 L1460.3,312.2 L1461.7,311.9 L1463.0,311.8 L1464.3,312.0 L1465.6,312.4 L1466.8,312.9 L1500.8,328.9" fill="none" stroke="#151515" stroke-width="3.3" stroke-linejoin="round"/>
<path d="M1513.4,402.3 L1479.4,386.3 L1480.1,386.5 L1480.9,386.3 L1481.7,385.7 L1482.6,384.7 L1483.7,383.4 L1485.1,381.8 L1486.7,379.8 L1488.8,377.4 L1491.3,374.6 L1493.9,371.3 L1496.8,367.9 L1499.7,364.5 L1502.6,361.3 L1505.6,358.1 L1508.9,354.8 L1512.2,351.5 L1515.5,348.3 L1518.5,345.4 L1521.1,342.8 L1523.5,340.5 L1525.6,338.3 L1527.5,336.4 L1529.2,334.9 L1530.6,333.9 L1531.7,333.5 L1532.6,333.8 L1566.6,349.8" fill="none" stroke="#151515" stroke-width="3.3" stroke-linejoin="round"/>
<path d="M1291.2,629.7 L1257.2,613.7 L1255.5,612.9 L1253.9,612.0 L1252.1,611.0 L1250.1,610.0 L1248.2,608.8 L1246.3,607.5 L1244.5,606.0 L1242.9,604.5 L1241.6,603.0 L1240.5,601.8 L1239.6,601.0 L1238.9,600.1 L1238.4,598.7 L1238.0,596.3 L1237.6,592.5 L1237.4,586.4 L1237.3,578.2 L1237.3,569.0 L1237.5,560.0 L1237.6,552.2 L1237.6,546.8 L1271.6,562.8" fill="none" stroke="#151515" stroke-width="3.3" stroke-linejoin="round"/>
<path d="M1216.4,558.6 L1182.4,542.6 L1177.1,539.9 L1172.5,537.2 L1168.2,534.3 L1164.2,531.1 L1160.5,527.7 L1156.9,524.0 L1153.3,520.1 L1149.8,515.8 L1146.5,511.2 L1143.2,506.3 L1140.2,501.2 L1137.4,496.1 L1134.8,491.0 L1132.5,485.8 L1130.3,480.3 L1128.4,474.7 L1126.7,469.3 L1125.3,464.1 L1124.2,459.2 L1123.5,454.6 L1123.1,450.1 L1122.9,445.8 L1123.0,441.9 L1123.3,438.6 L1123.7,435.9 L1124.3,434.2 L1125.0,433.3 L1126.0,432.9 L1127.1,432.9 L1128.3,432.9 L1129.5,432.8 L1130.8,432.5 L1132.1,432.3 L1133.6,432.1 L1135.2,432.1 L1136.9,432.3 L1138.8,432.8 L1140.9,433.6 L1143.4,434.6 L1177.4,450.6" fill="none" stroke="#151515" stroke-width="3.3" stroke-linejoin="round"/>
<path d="M1208.5,480.0 L1208.9,479.8 L1174.9,463.8 L1174.5,464.0Z" fill="#b2b0a9" stroke="#b2b0a9" stroke-width="0.7"/>
<path d="M1208.9,479.8 L1209.4,479.5 L1175.4,463.5 L1174.9,463.8Z" fill="#b8b6ad" stroke="#b8b6ad" stroke-width="0.7"/>
<path d="M1209.4,479.5 L1210.0,479.2 L1176.0,463.2 L1175.4,463.5Z" fill="#b6b3ab" stroke="#b6b3ab" stroke-width="0.7"/>
<path d="M1210.0,479.2 L1210.6,478.7 L1176.6,462.7 L1176.0,463.2Z" fill="#afada6" stroke="#afada6" stroke-width="0.7"/>
<path d="M1210.6,478.7 L1211.2,477.8 L1177.2,461.8 L1176.6,462.7Z" fill="#a7a6a0" stroke="#a7a6a0" stroke-width="0.7"/>
<path d="M1211.2,477.8 L1211.7,476.6 L1212.0,474.6 L1212.4,472.0 L1212.7,469.1 L1212.9,466.2 L1213.1,463.7 L1213.3,462.0 L1213.4,459.4 L1213.5,455.8 L1213.7,451.6 L1213.9,447.0 L1214.1,442.4 L1214.3,438.2 L1214.5,434.1 L1214.7,429.8 L1214.9,425.5 L1215.1,421.3 L1215.5,417.6 L1215.9,414.4 L1216.5,411.8 L1217.1,409.7 L1217.8,407.9 L1183.8,391.9 L1183.1,393.7 L1182.5,395.8 L1181.9,398.4 L1181.5,401.6 L1181.1,405.3 L1180.9,409.5 L1180.7,413.8 L1180.5,418.1 L1180.3,422.2 L1180.1,426.4 L1179.9,431.0 L1179.7,435.6 L1179.5,439.8 L1179.4,443.4 L1179.3,446.0 L1179.1,447.7 L1178.9,450.2 L1178.7,453.1 L1178.4,456.0 L1178.0,458.6 L1177.7,460.6 L1177.2,461.8Z" fill="#a4a39e" stroke="#a4a39e" stroke-width="0.7"/>
<path d="M1217.8,407.9 L1218.6,406.4 L1184.6,390.4 L1183.8,391.9Z" fill="#a5a49f" stroke="#a5a49f" stroke-width="0.7"/>
<path d="M1218.6,406.4 L1219.5,405.1 L1185.5,389.1 L1184.6,390.4Z" fill="#a6a5a0" stroke="#a6a5a0" stroke-width="0.7"/>
<path d="M1219.5,405.1 L1220.4,403.8 L1186.4,387.8 L1185.5,389.1Z" fill="#a7a6a0" stroke="#a7a6a0" stroke-width="0.7"/>
<path d="M1220.4,403.8 L1221.4,402.5 L1187.4,386.5 L1186.4,387.8Z" fill="#a8a7a1" stroke="#a8a7a1" stroke-width="0.7"/>
<path d="M1221.4,402.5 L1222.4,401.3 L1188.4,385.3 L1187.4,386.5Z" fill="#aaa8a2" stroke="#aaa8a2" stroke-width="0.7"/>
<path d="M1222.4,401.3 L1223.5,400.2 L1189.5,384.2 L1188.4,385.3Z" fill="#adaba4" stroke="#adaba4" stroke-width="0.7"/>
<path d="M1223.5,400.2 L1224.6,399.4 L1190.6,383.4 L1189.5,384.2Z" fill="#b1afa8" stroke="#b1afa8" stroke-width="0.7"/>
<path d="M1224.6,399.4 L1225.8,398.8 L1191.8,382.8 L1190.6,383.4Z" fill="#b7b4ac" stroke="#b7b4ac" stroke-width="0.7"/>
<path d="M1225.8,398.8 L1227.0,398.5 L1228.3,398.5 L1229.6,398.8 L1231.0,399.4 L1197.0,383.4 L1195.6,382.8 L1194.3,382.5 L1193.0,382.5 L1191.8,382.8Z" fill="#bdbab1" stroke="#bdbab1" stroke-width="0.7"/>
<path d="M1239.8,498.1 L1241.1,498.6 L1242.5,499.0 L1244.0,499.1 L1245.5,499.1 L1247.1,498.9 L1248.8,498.6 L1250.5,498.1 L1216.5,482.1 L1214.8,482.6 L1213.1,482.9 L1211.5,483.1 L1210.0,483.1 L1208.5,483.0 L1207.1,482.6 L1205.8,482.1Z" fill="#bdbab1" stroke="#bdbab1" stroke-width="0.7"/>
<path d="M1250.5,498.1 L1252.3,497.4 L1218.3,481.4 L1216.5,482.1Z" fill="#bab7af" stroke="#bab7af" stroke-width="0.7"/>
<path d="M1252.3,497.4 L1254.2,496.4 L1220.2,480.4 L1218.3,481.4Z" fill="#b6b3ac" stroke="#b6b3ac" stroke-width="0.7"/>
<path d="M1254.2,496.4 L1256.1,495.1 L1222.1,479.1 L1220.2,480.4Z" fill="#b2b0a8" stroke="#b2b0a8" stroke-width="0.7"/>
<path d="M1256.1,495.1 L1258.1,493.3 L1224.1,477.3 L1222.1,479.1Z" fill="#aeada6" stroke="#aeada6" stroke-width="0.7"/>
<path d="M1258.1,493.3 L1260.2,491.3 L1226.2,475.3 L1224.1,477.3Z" fill="#acaaa4" stroke="#acaaa4" stroke-width="0.7"/>
<path d="M1260.2,491.3 L1262.4,488.9 L1228.4,472.9 L1226.2,475.3Z" fill="#aba9a3" stroke="#aba9a3" stroke-width="0.7"/>
<path d="M1262.4,488.9 L1264.7,486.3 L1230.7,470.3 L1228.4,472.9Z" fill="#aaa8a2" stroke="#aaa8a2" stroke-width="0.7"/>
<path d="M1264.7,486.3 L1267.0,483.5 L1269.4,480.5 L1271.9,477.4 L1274.6,474.0 L1240.6,458.0 L1237.9,461.4 L1235.4,464.5 L1233.0,467.5 L1230.7,470.3Z" fill="#a9a8a2" stroke="#a9a8a2" stroke-width="0.7"/>
<path d="M1274.6,474.0 L1277.5,470.4 L1243.5,454.4 L1240.6,458.0Z" fill="#a9a7a2" stroke="#a9a7a2" stroke-width="0.7"/>
<path d="M1277.5,470.4 L1280.2,466.7 L1246.2,450.7 L1243.5,454.4Z" fill="#a8a7a1" stroke="#a8a7a1" stroke-width="0.7"/>
<path d="M1280.2,466.7 L1282.9,463.0 L1248.9,447.0 L1246.2,450.7Z" fill="#a8a6a1" stroke="#a8a6a1" stroke-width="0.7"/>
<path d="M1282.9,463.0 L1285.2,459.4 L1251.2,443.4 L1248.9,447.0Z" fill="#a7a5a0" stroke="#a7a5a0" stroke-width="0.7"/>
<path d="M1285.2,459.4 L1287.4,455.7 L1253.4,439.7 L1251.2,443.4Z" fill="#a6a59f" stroke="#a6a59f" stroke-width="0.7"/>
<path d="M1287.4,455.7 L1289.4,452.0 L1255.4,436.0 L1253.4,439.7Z" fill="#a5a49f" stroke="#a5a49f" stroke-width="0.7"/>
<path d="M1289.4,452.0 L1291.3,448.3 L1293.0,444.7 L1294.5,441.3 L1295.8,438.2 L1296.9,435.4 L1297.8,432.7 L1298.5,430.2 L1299.0,428.1 L1299.4,426.3 L1299.8,425.0 L1265.8,409.0 L1265.4,410.3 L1265.0,412.1 L1264.5,414.2 L1263.8,416.7 L1262.9,419.4 L1261.8,422.2 L1260.5,425.3 L1259.0,428.7 L1257.3,432.3 L1255.4,436.0Z" fill="#a4a39e" stroke="#a4a39e" stroke-width="0.7"/>
<path d="M1301.1,540.1 L1315.1,536.7 L1335.6,531.8 L1359.3,526.2 L1383.0,520.5 L1403.5,515.6 L1417.5,512.3 L1383.5,496.3 L1369.5,499.6 L1349.0,504.5 L1325.3,510.2 L1301.6,515.8 L1281.1,520.7 L1267.1,524.1Z" fill="#bdbab1" stroke="#bdbab1" stroke-width="0.7"/>
<path d="M1417.5,512.3 L1419.8,508.3 L1423.0,502.5 L1426.8,495.7 L1430.6,489.0 L1433.8,483.2 L1436.1,479.2 L1402.1,463.2 L1399.8,467.2 L1396.6,473.0 L1392.8,479.7 L1389.0,486.5 L1385.8,492.3 L1383.5,496.3Z" fill="#a5a49f" stroke="#a5a49f" stroke-width="0.7"/>
<path d="M1436.1,479.2 L1435.0,476.2 L1433.5,472.0 L1431.8,467.1 L1429.9,461.8 L1428.2,456.4 L1426.8,451.4 L1425.6,446.6 L1424.5,441.5 L1423.5,436.5 L1422.6,431.5 L1422.0,426.7 L1421.5,422.3 L1421.3,418.2 L1421.3,414.3 L1421.5,410.6 L1421.9,407.1 L1422.3,404.0 L1422.8,401.1 L1423.5,398.6 L1424.2,396.3 L1425.1,394.3 L1391.1,378.3 L1390.2,380.3 L1389.5,382.6 L1388.8,385.1 L1388.3,388.0 L1387.9,391.1 L1387.5,394.6 L1387.3,398.3 L1387.3,402.2 L1387.5,406.3 L1388.0,410.7 L1388.6,415.5 L1389.5,420.5 L1390.5,425.5 L1391.6,430.6 L1392.8,435.4 L1394.2,440.4 L1395.9,445.8 L1397.8,451.1 L1399.5,456.0 L1401.0,460.2 L1402.1,463.2Z" fill="#a4a39e" stroke="#a4a39e" stroke-width="0.7"/>
<path d="M1425.1,394.3 L1426.0,392.6 L1392.0,376.6 L1391.1,378.3Z" fill="#a5a49f" stroke="#a5a49f" stroke-width="0.7"/>
<path d="M1426.0,392.6 L1427.0,391.4 L1393.0,375.4 L1392.0,376.6Z" fill="#a9a8a2" stroke="#a9a8a2" stroke-width="0.7"/>
<path d="M1427.0,391.4 L1428.1,390.6 L1394.1,374.6 L1393.0,375.4Z" fill="#b1afa8" stroke="#b1afa8" stroke-width="0.7"/>
<path d="M1428.1,390.6 L1429.3,390.3 L1430.6,390.5 L1431.9,391.1 L1397.9,375.1 L1396.6,374.5 L1395.3,374.3 L1394.1,374.6Z" fill="#bdbab1" stroke="#bdbab1" stroke-width="0.7"/>
<path d="M1471.5,436.2 L1473.1,436.9 L1474.6,437.4 L1475.9,437.7 L1477.2,437.9 L1478.5,437.9 L1479.7,437.6 L1445.7,421.6 L1444.5,421.9 L1443.2,421.9 L1441.9,421.7 L1440.6,421.4 L1439.1,420.9 L1437.5,420.2Z" fill="#bdbab1" stroke="#bdbab1" stroke-width="0.7"/>
<path d="M1479.7,437.6 L1481.1,436.9 L1447.1,420.9 L1445.7,421.6Z" fill="#b6b4ac" stroke="#b6b4ac" stroke-width="0.7"/>
<path d="M1481.1,436.9 L1482.5,435.8 L1448.5,419.8 L1447.1,420.9Z" fill="#b0aea7" stroke="#b0aea7" stroke-width="0.7"/>
<path d="M1482.5,435.8 L1484.1,434.3 L1450.1,418.3 L1448.5,419.8Z" fill="#adaba5" stroke="#adaba5" stroke-width="0.7"/>
<path d="M1484.1,434.3 L1485.8,432.5 L1451.8,416.5 L1450.1,418.3Z" fill="#aba9a3" stroke="#aba9a3" stroke-width="0.7"/>
<path d="M1485.8,432.5 L1487.3,430.5 L1453.3,414.5 L1451.8,416.5Z" fill="#a8a7a1" stroke="#a8a7a1" stroke-width="0.7"/>
<path d="M1487.3,430.5 L1488.6,428.4 L1454.6,412.4 L1453.3,414.5Z" fill="#a6a5a0" stroke="#a6a5a0" stroke-width="0.7"/>
<path d="M1488.6,428.4 L1489.5,426.3 L1490.1,424.2 L1490.5,422.0 L1490.6,419.7 L1490.5,417.3 L1490.3,414.7 L1490.1,411.7 L1489.6,408.5 L1489.0,404.9 L1488.2,401.1 L1487.4,397.2 L1486.6,393.2 L1485.8,389.2 L1485.1,385.2 L1484.3,381.0 L1483.5,376.7 L1482.7,372.4 L1482.2,368.2 L1481.8,364.1 L1481.7,360.1 L1481.8,356.0 L1482.0,352.0 L1482.4,348.2 L1483.0,344.7 L1483.7,341.6 L1484.7,338.9 L1485.9,336.5 L1451.9,320.5 L1450.7,322.9 L1449.7,325.6 L1449.0,328.7 L1448.4,332.2 L1448.0,336.0 L1447.8,340.0 L1447.7,344.1 L1447.8,348.1 L1448.2,352.2 L1448.7,356.4 L1449.5,360.7 L1450.3,365.0 L1451.1,369.2 L1451.8,373.2 L1452.6,377.2 L1453.4,381.2 L1454.2,385.1 L1455.0,388.9 L1455.6,392.5 L1456.1,395.7 L1456.3,398.7 L1456.5,401.3 L1456.6,403.7 L1456.5,406.0 L1456.1,408.2 L1455.5,410.3 L1454.6,412.4Z" fill="#a4a39e" stroke="#a4a39e" stroke-width="0.7"/>
<path d="M1485.9,336.5 L1487.3,334.3 L1453.3,318.3 L1451.9,320.5Z" fill="#a7a5a0" stroke="#a7a5a0" stroke-width="0.7"/>
<path d="M1487.3,334.3 L1488.8,332.5 L1454.8,316.5 L1453.3,318.3Z" fill="#a9a8a2" stroke="#a9a8a2" stroke-width="0.7"/>
<path d="M1488.8,332.5 L1490.2,330.9 L1456.2,314.9 L1454.8,316.5Z" fill="#abaaa4" stroke="#abaaa4" stroke-width="0.7"/>
<path d="M1490.2,330.9 L1491.6,329.7 L1457.6,313.7 L1456.2,314.9Z" fill="#aeaca5" stroke="#aeaca5" stroke-width="0.7"/>
<path d="M1491.6,329.7 L1493.0,328.8 L1459.0,312.8 L1457.6,313.7Z" fill="#b2b0a8" stroke="#b2b0a8" stroke-width="0.7"/>
<path d="M1493.0,328.8 L1494.3,328.2 L1460.3,312.2 L1459.0,312.8Z" fill="#b9b6ae" stroke="#b9b6ae" stroke-width="0.7"/>
<path d="M1494.3,328.2 L1495.7,327.9 L1497.0,327.8 L1498.3,328.0 L1499.6,328.4 L1500.8,328.9 L1466.8,312.9 L1465.6,312.4 L1464.3,312.0 L1463.0,311.8 L1461.7,311.9 L1460.3,312.2Z" fill="#bdbab1" stroke="#bdbab1" stroke-width="0.7"/>
<path d="M1513.4,402.3 L1514.1,402.5 L1514.9,402.3 L1480.9,386.3 L1480.1,386.5 L1479.4,386.3Z" fill="#bdbab1" stroke="#bdbab1" stroke-width="0.7"/>
<path d="M1514.9,402.3 L1515.7,401.7 L1481.7,385.7 L1480.9,386.3Z" fill="#b1afa8" stroke="#b1afa8" stroke-width="0.7"/>
<path d="M1515.7,401.7 L1516.6,400.7 L1482.6,384.7 L1481.7,385.7Z" fill="#abaaa4" stroke="#abaaa4" stroke-width="0.7"/>
<path d="M1516.6,400.7 L1517.7,399.4 L1483.7,383.4 L1482.6,384.7Z" fill="#aaa8a2" stroke="#aaa8a2" stroke-width="0.7"/>
<path d="M1517.7,399.4 L1519.1,397.8 L1485.1,381.8 L1483.7,383.4Z" fill="#a9a8a2" stroke="#a9a8a2" stroke-width="0.7"/>
<path d="M1519.1,397.8 L1520.7,395.8 L1522.8,393.4 L1488.8,377.4 L1486.7,379.8 L1485.1,381.8Z" fill="#aaa9a3" stroke="#aaa9a3" stroke-width="0.7"/>
<path d="M1522.8,393.4 L1525.3,390.6 L1491.3,374.6 L1488.8,377.4Z" fill="#aaa8a2" stroke="#aaa8a2" stroke-width="0.7"/>
<path d="M1525.3,390.6 L1527.9,387.3 L1493.9,371.3 L1491.3,374.6Z" fill="#a9a8a2" stroke="#a9a8a2" stroke-width="0.7"/>
<path d="M1527.9,387.3 L1530.8,383.9 L1496.8,367.9 L1493.9,371.3Z" fill="#aaa8a2" stroke="#aaa8a2" stroke-width="0.7"/>
<path d="M1530.8,383.9 L1533.7,380.5 L1499.7,364.5 L1496.8,367.9Z" fill="#aaa8a3" stroke="#aaa8a3" stroke-width="0.7"/>
<path d="M1533.7,380.5 L1536.6,377.3 L1502.6,361.3 L1499.7,364.5Z" fill="#aba9a3" stroke="#aba9a3" stroke-width="0.7"/>
<path d="M1536.6,377.3 L1539.6,374.1 L1505.6,358.1 L1502.6,361.3Z" fill="#abaaa4" stroke="#abaaa4" stroke-width="0.7"/>
<path d="M1539.6,374.1 L1542.9,370.8 L1546.2,367.5 L1512.2,351.5 L1508.9,354.8 L1505.6,358.1Z" fill="#acaaa4" stroke="#acaaa4" stroke-width="0.7"/>
<path d="M1546.2,367.5 L1549.5,364.3 L1552.5,361.4 L1518.5,345.4 L1515.5,348.3 L1512.2,351.5Z" fill="#acaba4" stroke="#acaba4" stroke-width="0.7"/>
<path d="M1552.5,361.4 L1555.1,358.8 L1521.1,342.8 L1518.5,345.4Z" fill="#adaba5" stroke="#adaba5" stroke-width="0.7"/>
<path d="M1555.1,358.8 L1557.5,356.5 L1523.5,340.5 L1521.1,342.8Z" fill="#acaba4" stroke="#acaba4" stroke-width="0.7"/>
<path d="M1557.5,356.5 L1559.6,354.3 L1561.5,352.4 L1527.5,336.4 L1525.6,338.3 L1523.5,340.5Z" fill="#acaaa4" stroke="#acaaa4" stroke-width="0.7"/>
<path d="M1561.5,352.4 L1563.2,350.9 L1529.2,334.9 L1527.5,336.4Z" fill="#adaca5" stroke="#adaca5" stroke-width="0.7"/>
<path d="M1563.2,350.9 L1564.6,349.9 L1530.6,333.9 L1529.2,334.9Z" fill="#b1afa8" stroke="#b1afa8" stroke-width="0.7"/>
<path d="M1564.6,349.9 L1565.7,349.5 L1566.6,349.8 L1532.6,333.8 L1531.7,333.5 L1530.6,333.9Z" fill="#bdbab1" stroke="#bdbab1" stroke-width="0.7"/>
<path d="M1291.2,629.7 L1289.5,628.9 L1255.5,612.9 L1257.2,613.7Z" fill="#b7b5ad" stroke="#b7b5ad" stroke-width="0.7"/>
<path d="M1289.5,628.9 L1287.9,628.0 L1253.9,612.0 L1255.5,612.9Z" fill="#b4b2aa" stroke="#b4b2aa" stroke-width="0.7"/>
<path d="M1287.9,628.0 L1286.1,627.0 L1252.1,611.0 L1253.9,612.0Z" fill="#b6b3ab" stroke="#b6b3ab" stroke-width="0.7"/>
<path d="M1286.1,627.0 L1284.1,626.0 L1250.1,610.0 L1252.1,611.0Z" fill="#b6b4ac" stroke="#b6b4ac" stroke-width="0.7"/>
<path d="M1284.1,626.0 L1282.2,624.8 L1248.2,608.8 L1250.1,610.0Z" fill="#b4b2aa" stroke="#b4b2aa" stroke-width="0.7"/>
<path d="M1282.2,624.8 L1280.3,623.5 L1246.3,607.5 L1248.2,608.8Z" fill="#b2afa8" stroke="#b2afa8" stroke-width="0.7"/>
<path d="M1280.3,623.5 L1278.5,622.0 L1244.5,606.0 L1246.3,607.5Z" fill="#afada7" stroke="#afada7" stroke-width="0.7"/>
<path d="M1278.5,622.0 L1276.9,620.5 L1242.9,604.5 L1244.5,606.0Z" fill="#adaba5" stroke="#adaba5" stroke-width="0.7"/>
<path d="M1276.9,620.5 L1275.6,619.0 L1241.6,603.0 L1242.9,604.5Z" fill="#aaa9a3" stroke="#aaa9a3" stroke-width="0.7"/>
<path d="M1275.6,619.0 L1274.5,617.8 L1240.5,601.8 L1241.6,603.0Z" fill="#aba9a3" stroke="#aba9a3" stroke-width="0.7"/>
<path d="M1274.5,617.8 L1273.6,617.0 L1239.6,601.0 L1240.5,601.8Z" fill="#adaba5" stroke="#adaba5" stroke-width="0.7"/>
<path d="M1273.6,617.0 L1272.9,616.1 L1238.9,600.1 L1239.6,601.0Z" fill="#a9a7a2" stroke="#a9a7a2" stroke-width="0.7"/>
<path d="M1272.9,616.1 L1272.4,614.7 L1272.0,612.3 L1271.6,608.5 L1271.4,602.4 L1271.3,594.2 L1271.3,585.0 L1271.5,576.0 L1271.6,568.2 L1271.6,562.8 L1237.6,546.8 L1237.6,552.2 L1237.5,560.0 L1237.3,569.0 L1237.3,578.2 L1237.4,586.4 L1237.6,592.5 L1238.0,596.3 L1238.4,598.7 L1238.9,600.1Z" fill="#a4a39e" stroke="#a4a39e" stroke-width="0.7"/>
<path d="M1216.4,558.6 L1211.1,555.9 L1177.1,539.9 L1182.4,542.6Z" fill="#b7b4ac" stroke="#b7b4ac" stroke-width="0.7"/>
<path d="M1211.1,555.9 L1206.5,553.2 L1172.5,537.2 L1177.1,539.9Z" fill="#b4b2aa" stroke="#b4b2aa" stroke-width="0.7"/>
<path d="M1206.5,553.2 L1202.2,550.3 L1168.2,534.3 L1172.5,537.2Z" fill="#b2b0a9" stroke="#b2b0a9" stroke-width="0.7"/>
<path d="M1202.2,550.3 L1198.2,547.1 L1164.2,531.1 L1168.2,534.3Z" fill="#b0aea7" stroke="#b0aea7" stroke-width="0.7"/>
<path d="M1198.2,547.1 L1194.5,543.7 L1160.5,527.7 L1164.2,531.1Z" fill="#aeaca5" stroke="#aeaca5" stroke-width="0.7"/>
<path d="M1194.5,543.7 L1190.9,540.0 L1156.9,524.0 L1160.5,527.7Z" fill="#acaaa4" stroke="#acaaa4" stroke-width="0.7"/>
<path d="M1190.9,540.0 L1187.3,536.1 L1153.3,520.1 L1156.9,524.0Z" fill="#aba9a3" stroke="#aba9a3" stroke-width="0.7"/>
<path d="M1187.3,536.1 L1183.8,531.8 L1149.8,515.8 L1153.3,520.1Z" fill="#a9a8a2" stroke="#a9a8a2" stroke-width="0.7"/>
<path d="M1183.8,531.8 L1180.5,527.2 L1146.5,511.2 L1149.8,515.8Z" fill="#a8a7a1" stroke="#a8a7a1" stroke-width="0.7"/>
<path d="M1180.5,527.2 L1177.2,522.3 L1143.2,506.3 L1146.5,511.2Z" fill="#a7a6a0" stroke="#a7a6a0" stroke-width="0.7"/>
<path d="M1177.2,522.3 L1174.2,517.2 L1140.2,501.2 L1143.2,506.3Z" fill="#a6a59f" stroke="#a6a59f" stroke-width="0.7"/>
<path d="M1174.2,517.2 L1171.4,512.1 L1137.4,496.1 L1140.2,501.2Z" fill="#a5a49f" stroke="#a5a49f" stroke-width="0.7"/>
<path d="M1171.4,512.1 L1168.8,507.0 L1166.5,501.8 L1164.3,496.3 L1162.4,490.7 L1160.7,485.3 L1159.3,480.1 L1158.2,475.2 L1157.5,470.6 L1157.1,466.1 L1156.9,461.8 L1157.0,457.9 L1157.3,454.6 L1157.7,451.9 L1158.3,450.2 L1124.3,434.2 L1123.7,435.9 L1123.3,438.6 L1123.0,441.9 L1122.9,445.8 L1123.1,450.1 L1123.5,454.6 L1124.2,459.2 L1125.3,464.1 L1126.7,469.3 L1128.4,474.7 L1130.3,480.3 L1132.5,485.8 L1134.8,491.0 L1137.4,496.1Z" fill="#a4a39e" stroke="#a4a39e" stroke-width="0.7"/>
<path d="M1158.3,450.2 L1159.0,449.3 L1125.0,433.3 L1124.3,434.2Z" fill="#a9a8a2" stroke="#a9a8a2" stroke-width="0.7"/>
<path d="M1159.0,449.3 L1160.0,448.9 L1126.0,432.9 L1125.0,433.3Z" fill="#bab7af" stroke="#bab7af" stroke-width="0.7"/>
<path d="M1160.0,448.9 L1161.1,448.9 L1162.3,448.9 L1163.5,448.8 L1164.8,448.5 L1166.1,448.3 L1167.6,448.1 L1169.2,448.1 L1170.9,448.3 L1172.8,448.8 L1174.9,449.6 L1177.4,450.6 L1143.4,434.6 L1140.9,433.6 L1138.8,432.8 L1136.9,432.3 L1135.2,432.1 L1133.6,432.1 L1132.1,432.3 L1130.8,432.5 L1129.5,432.8 L1128.3,432.9 L1127.1,432.9 L1126.0,432.9Z" fill="#bdbab1" stroke="#bdbab1" stroke-width="0.7"/>
<path d="M1157.7,451.9 L1158.3,450.2 L1159.0,449.3 L1160.0,448.9 L1161.1,448.9 L1162.3,448.9 L1163.5,448.8 L1164.8,448.5 L1166.1,448.3 L1167.6,448.1 L1169.2,448.1 L1170.9,448.3 L1172.8,448.8 L1174.9,449.6 L1177.4,450.6 L1180.0,451.9 L1182.6,453.3 L1185.1,454.7 L1187.3,456.2 L1189.4,457.7 L1191.3,459.3 L1193.1,461.0 L1194.8,462.7 L1196.4,464.3 L1197.9,466.0 L1199.3,467.6 L1200.5,469.3 L1201.6,470.9 L1202.7,472.5 L1203.6,474.0 L1204.5,475.2 L1205.4,476.3 L1206.2,477.3 L1206.9,478.2 L1207.6,478.9 L1208.1,479.5 L1208.5,480.0 L1208.9,479.8 L1209.4,479.5 L1210.0,479.2 L1210.6,478.7 L1211.2,477.8 L1211.7,476.6 L1212.0,474.6 L1212.4,472.0 L1212.7,469.1 L1212.9,466.2 L1213.1,463.7 L1213.3,462.0 L1213.4,459.4 L1213.5,455.8 L1213.7,451.6 L1213.9,447.0 L1214.1,442.4 L1214.3,438.2 L1214.5,434.1 L1214.7,429.8 L1214.9,425.5 L1215.1,421.3 L1215.5,417.6 L1215.9,414.4 L1216.5,411.8 L1217.1,409.7 L1217.8,407.9 L1218.6,406.4 L1219.5,405.1 L1220.4,403.8 L1221.4,402.5 L1222.4,401.3 L1223.5,400.2 L1224.6,399.4 L1225.8,398.8 L1227.0,398.5 L1228.3,398.5 L1229.6,398.8 L1231.0,399.4 L1232.4,400.2 L1233.7,401.2 L1235.0,402.5 L1236.2,403.9 L1237.4,405.7 L1238.5,407.7 L1239.7,409.8 L1240.7,412.1 L1241.6,414.4 L1242.4,416.7 L1243.2,419.2 L1243.8,421.7 L1244.4,424.4 L1244.8,427.3 L1245.0,430.2 L1245.0,433.5 L1244.8,437.0 L1244.5,440.7 L1244.0,444.4 L1243.5,448.0 L1242.9,451.4 L1242.2,454.7 L1241.3,457.9 L1240.3,461.0 L1239.3,464.1 L1238.4,467.0 L1237.6,469.9 L1236.8,472.8 L1236.1,475.6 L1235.3,478.4 L1234.7,481.0 L1234.3,483.5 L1234.2,485.8 L1234.3,488.0 L1234.6,490.0 L1235.2,491.9 L1235.9,493.7 L1236.7,495.2 L1237.6,496.4 L1238.6,497.4 L1239.8,498.1 L1241.1,498.6 L1242.5,499.0 L1244.0,499.1 L1245.5,499.1 L1247.1,498.9 L1248.8,498.6 L1250.5,498.1 L1252.3,497.4 L1254.2,496.4 L1256.1,495.1 L1258.1,493.3 L1260.2,491.3 L1262.4,488.9 L1264.7,486.3 L1267.0,483.5 L1269.4,480.5 L1271.9,477.4 L1274.6,474.0 L1277.5,470.4 L1280.2,466.7 L1282.9,463.0 L1285.2,459.4 L1287.4,455.7 L1289.4,452.0 L1291.3,448.3 L1293.0,444.7 L1294.5,441.3 L1295.8,438.2 L1296.9,435.4 L1297.8,432.7 L1298.5,430.2 L1299.0,428.1 L1299.4,426.3 L1299.8,425.0 L1300.2,425.7 L1300.8,426.5 L1301.4,427.6 L1302.1,429.0 L1302.8,430.7 L1303.2,432.9 L1303.6,435.6 L1303.9,438.8 L1304.1,442.3 L1304.2,446.1 L1304.3,450.1 L1304.3,454.1 L1304.2,458.2 L1304.0,462.7 L1303.8,467.3 L1303.4,471.9 L1303.0,476.4 L1302.4,480.5 L1301.8,484.4 L1301.1,488.1 L1300.3,491.6 L1299.3,495.0 L1298.3,498.4 L1297.1,501.7 L1295.7,505.2 L1294.0,508.8 L1292.2,512.3 L1290.4,515.5 L1288.9,518.2 L1287.9,520.2 L1289.5,522.6 L1291.8,526.1 L1294.5,530.1 L1297.2,534.2 L1299.5,537.7 L1301.1,540.1 L1315.1,536.7 L1335.6,531.8 L1359.3,526.2 L1383.0,520.5 L1403.5,515.6 L1417.5,512.3 L1419.8,508.3 L1423.0,502.5 L1426.8,495.7 L1430.6,489.0 L1433.8,483.2 L1436.1,479.2 L1435.0,476.2 L1433.5,472.0 L1431.8,467.1 L1429.9,461.8 L1428.2,456.4 L1426.8,451.4 L1425.6,446.6 L1424.5,441.5 L1423.5,436.5 L1422.6,431.5 L1422.0,426.7 L1421.5,422.3 L1421.3,418.2 L1421.3,414.3 L1421.5,410.6 L1421.9,407.1 L1422.3,404.0 L1422.8,401.1 L1423.5,398.6 L1424.2,396.3 L1425.1,394.3 L1426.0,392.6 L1427.0,391.4 L1428.1,390.6 L1429.3,390.3 L1430.6,390.5 L1431.9,391.1 L1433.3,392.1 L1434.7,393.2 L1436.1,394.5 L1437.4,396.0 L1438.7,397.9 L1440.0,399.9 L1441.4,402.1 L1442.7,404.3 L1444.0,406.4 L1445.3,408.6 L1446.6,410.8 L1447.8,413.1 L1449.1,415.4 L1450.5,417.6 L1451.9,419.7 L1453.6,421.6 L1455.3,423.5 L1457.1,425.4 L1458.9,427.1 L1460.7,428.7 L1462.5,430.2 L1464.3,431.7 L1466.2,433.0 L1468.0,434.2 L1469.8,435.3 L1471.5,436.2 L1473.1,436.9 L1474.6,437.4 L1475.9,437.7 L1477.2,437.9 L1478.5,437.9 L1479.7,437.6 L1481.1,436.9 L1482.5,435.8 L1484.1,434.3 L1485.8,432.5 L1487.3,430.5 L1488.6,428.4 L1489.5,426.3 L1490.1,424.2 L1490.5,422.0 L1490.6,419.7 L1490.5,417.3 L1490.3,414.7 L1490.1,411.7 L1489.6,408.5 L1489.0,404.9 L1488.2,401.1 L1487.4,397.2 L1486.6,393.2 L1485.8,389.2 L1485.1,385.2 L1484.3,381.0 L1483.5,376.7 L1482.7,372.4 L1482.2,368.2 L1481.8,364.1 L1481.7,360.1 L1481.8,356.0 L1482.0,352.0 L1482.4,348.2 L1483.0,344.7 L1483.7,341.6 L1484.7,338.9 L1485.9,336.5 L1487.3,334.3 L1488.8,332.5 L1490.2,330.9 L1491.6,329.7 L1493.0,328.8 L1494.3,328.2 L1495.7,327.9 L1497.0,327.8 L1498.3,328.0 L1499.6,328.4 L1500.8,328.9 L1502.0,329.6 L1503.2,330.6 L1504.3,331.8 L1505.3,333.3 L1506.2,335.0 L1507.0,337.0 L1507.7,339.3 L1508.3,341.8 L1508.8,344.6 L1509.3,347.6 L1509.6,350.9 L1509.9,354.4 L1510.0,358.3 L1510.0,362.4 L1510.0,366.6 L1510.1,370.8 L1510.2,374.7 L1510.3,378.5 L1510.5,382.5 L1510.7,386.3 L1510.9,390.0 L1511.2,393.2 L1511.5,395.8 L1511.8,397.9 L1512.1,399.6 L1512.5,400.9 L1512.9,401.8 L1513.4,402.3 L1514.1,402.5 L1514.9,402.3 L1515.7,401.7 L1516.6,400.7 L1517.7,399.4 L1519.1,397.8 L1520.7,395.8 L1522.8,393.4 L1525.3,390.6 L1527.9,387.3 L1530.8,383.9 L1533.7,380.5 L1536.6,377.3 L1539.6,374.1 L1542.9,370.8 L1546.2,367.5 L1549.5,364.3 L1552.5,361.4 L1555.1,358.8 L1557.5,356.5 L1559.6,354.3 L1561.5,352.4 L1563.2,350.9 L1564.6,349.9 L1565.7,349.5 L1566.6,349.8 L1567.2,350.6 L1567.5,351.9 L1567.5,353.8 L1567.4,356.0 L1567.1,358.8 L1566.5,362.2 L1565.7,366.2 L1564.7,370.8 L1563.4,375.6 L1562.0,380.5 L1560.4,385.3 L1558.7,389.9 L1556.7,394.6 L1554.6,399.3 L1552.3,404.2 L1549.8,409.2 L1547.2,414.4 L1544.5,419.8 L1541.5,425.5 L1538.4,431.4 L1535.3,437.3 L1532.0,443.1 L1528.7,448.8 L1525.3,454.3 L1521.8,459.9 L1518.3,465.5 L1514.7,470.8 L1511.1,475.9 L1507.5,480.5 L1503.9,484.8 L1500.3,488.8 L1496.6,492.4 L1493.0,495.8 L1489.6,498.9 L1486.3,501.7 L1483.5,504.1 L1481.0,506.3 L1478.7,508.1 L1476.3,509.6 L1473.6,511.0 L1470.5,512.3 L1466.5,513.4 L1461.8,514.2 L1456.9,514.9 L1452.2,515.5 L1448.2,515.9 L1445.3,516.3 L1445.1,523.2 L1444.8,533.4 L1444.4,545.1 L1444.0,556.9 L1443.7,567.0 L1443.5,574.0 L1443.1,580.1 L1442.5,589.1 L1441.8,599.5 L1441.0,609.9 L1440.4,618.9 L1440.0,625.0 L1427.4,624.5 L1408.9,623.8 L1387.5,623.0 L1366.2,622.2 L1347.7,621.5 L1335.1,621.0 L1331.0,622.2 L1325.0,623.9 L1318.1,625.9 L1311.0,627.8 L1304.5,629.4 L1299.4,630.3 L1295.9,630.5 L1293.2,630.3 L1291.2,629.7 L1289.5,628.9 L1287.9,628.0 L1286.1,627.0 L1284.1,626.0 L1282.2,624.8 L1280.3,623.5 L1278.5,622.0 L1276.9,620.5 L1275.6,619.0 L1274.5,617.8 L1273.6,617.0 L1272.9,616.1 L1272.4,614.7 L1272.0,612.3 L1271.6,608.5 L1271.4,602.4 L1271.3,594.2 L1271.3,585.0 L1271.5,576.0 L1271.6,568.2 L1271.6,562.8 L1268.9,563.5 L1265.2,564.7 L1260.7,566.1 L1255.8,567.2 L1250.7,567.9 L1245.5,567.9 L1240.2,566.9 L1234.3,565.4 L1228.2,563.5 L1222.1,561.1 L1216.4,558.6 L1211.1,555.9 L1206.5,553.2 L1202.2,550.3 L1198.2,547.1 L1194.5,543.7 L1190.9,540.0 L1187.3,536.1 L1183.8,531.8 L1180.5,527.2 L1177.2,522.3 L1174.2,517.2 L1171.4,512.1 L1168.8,507.0 L1166.5,501.8 L1164.3,496.3 L1162.4,490.7 L1160.7,485.3 L1159.3,480.1 L1158.2,475.2 L1157.5,470.6 L1157.1,466.1 L1156.9,461.8 L1157.0,457.9 L1157.3,454.6Z" fill="url(#gant)" stroke="#151515" stroke-width="1.3" stroke-linejoin="round"/>
<clipPath id="headclip"><path d="M1335.7,400 L1600,400 L1600,700 L1335.7,700 Z"/></clipPath>
<linearGradient id="ghead" gradientUnits="userSpaceOnUse" x1="0" y1="530" x2="0" y2="640"><stop offset="0" stop-color="#a39c90"/><stop offset="0.4" stop-color="#aca69b"/><stop offset="0.58" stop-color="#c3c1b9"/><stop offset="0.7" stop-color="#9a968d"/><stop offset="1" stop-color="#86827a"/></linearGradient>
<g clip-path="url(#headclip)"><path d="M972.2,551.2 L1019.2,539.2 L1020.9,538.8 L1022.8,538.6 L1025.1,538.6 L1027.8,539.2 L1030.9,540.2 L1034.4,541.5 L1038.3,543.1 L1042.5,545.0 L1047.0,547.4 L1051.7,550.3 L1056.8,553.8 L1062.2,557.9 L1067.9,562.4 L1073.8,567.2 L1079.9,572.1 L1086.0,576.8 L1092.2,581.5 L1098.3,586.2 L1104.7,591.0 L1111.3,595.9 L1118.3,600.9 L1125.7,605.9 L1133.9,611.2 L1142.8,616.8 L1152.2,622.4 L1161.5,627.9 L1170.4,633.1 L1178.6,637.6 L1186.0,641.5 L1192.8,644.9 L1199.3,648.0 L1205.6,650.8 L1211.8,653.5 L1218.3,656.1 L1225.1,658.8 L1232.2,661.4 L1239.3,663.9 L1246.1,666.1 L1252.5,668.0 L1258.0,669.4 L1262.7,670.4 L1266.6,670.9 L1270.1,671.2 L1273.2,671.1 L1276.2,670.6 L1279.2,669.9 L1232.2,681.9" fill="none" stroke="#151515" stroke-width="3.3" stroke-linejoin="round"/>
<path d="M1308.4,547.3 L1355.4,535.3 L1366.5,533.3 L1376.1,531.7 L1382.7,530.3 L1383.6,531.4 L1384.9,533.0 L1386.4,534.9 L1388.1,536.9 L1389.7,538.9 L1391.3,540.9 L1392.8,542.8 L1394.3,544.8 L1395.9,546.8 L1397.5,548.9 L1399.0,550.9 L1400.6,552.8 L1402.1,554.7 L1403.7,556.6 L1405.2,558.5 L1406.7,560.3 L1408.3,562.0 L1409.9,563.4 L1411.5,564.6 L1413.2,565.6 L1414.9,566.5 L1416.6,567.2 L1418.5,568.0 L1420.4,568.7 L1422.5,569.4 L1424.8,570.0 L1427.1,570.6 L1429.5,571.2 L1431.7,571.9 L1433.7,572.7 L1435.5,573.6 L1437.2,574.7 L1438.7,575.8 L1440.2,576.9 L1441.6,578.1 L1442.9,579.3 L1444.2,580.5 L1445.4,581.8 L1446.6,583.2 L1447.6,584.5 L1448.6,585.9 L1449.5,587.2 L1450.3,588.5 L1450.9,589.8 L1451.5,591.1 L1452.0,592.4 L1452.4,593.7 L1452.8,595.1 L1453.1,596.6 L1453.4,598.2 L1453.6,599.9 L1453.7,601.5 L1453.7,603.1 L1453.5,604.4 L1453.1,605.5 L1452.4,606.5 L1451.6,607.3 L1450.8,608.1 L1450.1,608.9 L1449.5,609.7 L1449.1,610.6 L1448.9,611.4 L1448.8,612.3 L1448.6,613.1 L1448.5,614.0 L1448.2,615.0 L1447.9,616.1 L1447.5,617.2 L1447.2,618.4 L1446.7,619.5 L1446.2,620.6 L1445.5,621.6 L1444.7,622.4 L1443.7,623.2 L1442.6,623.9 L1441.4,624.5 L1440.2,625.1 L1439.0,625.6 L1438.0,626.1 L1437.1,626.5 L1436.2,626.9 L1435.0,627.2 L1388.0,639.2" fill="none" stroke="#151515" stroke-width="3.3" stroke-linejoin="round"/>
<path d="M1354.9,640.2 L1401.9,628.2 L1400.8,628.5 L1399.9,629.0 L1399.0,629.5 L1398.0,630.2 L1396.8,630.9 L1395.6,631.7 L1394.4,632.6 L1393.3,633.7 L1392.2,634.8 L1391.3,636.1 L1390.5,637.6 L1389.7,639.2 L1389.1,640.9 L1388.5,642.8 L1387.9,644.7 L1387.4,646.7 L1386.9,648.6 L1386.6,650.4 L1386.2,652.3 L1386.0,654.4 L1385.7,656.9 L1385.4,660.0 L1385.1,663.2 L1384.9,666.1 L1384.7,669.5 L1384.5,673.9 L1384.2,679.9 L1384.0,688.0 L1383.8,699.4 L1383.6,713.8 L1383.4,729.8 L1383.2,745.9 L1382.8,760.7 L1382.3,772.6 L1381.5,781.4 L1380.6,788.2 L1379.5,793.6 L1378.4,798.3 L1377.3,802.9 L1376.4,808.0 L1375.7,813.5 L1375.1,818.8 L1374.6,824.0 L1374.1,829.1 L1373.4,834.2 L1372.6,839.4 L1371.6,844.7 L1370.4,850.1 L1369.2,855.5 L1367.9,860.8 L1366.4,865.9 L1365.0,870.8 L1363.5,875.4 L1361.9,879.9 L1360.3,884.2 L1358.6,888.3 L1356.8,892.2 L1355.0,896.0 L1353.1,899.5 L1351.0,902.9 L1348.9,906.0 L1346.7,909.0 L1344.5,912.0 L1342.4,914.8 L1340.3,917.6 L1338.2,920.3 L1336.1,923.0 L1334.0,925.5 L1331.9,927.8 L1329.8,929.9 L1327.7,931.8 L1325.6,933.6 L1323.5,935.1 L1321.5,936.5 L1319.4,937.7 L1317.3,938.7 L1315.2,939.5 L1268.2,951.5" fill="none" stroke="#151515" stroke-width="3.3" stroke-linejoin="round"/>
<path d="M938.0,464.1 L985.0,452.1 L986.4,454.8 L988.4,458.7 L990.8,463.2 L993.3,468.0 L995.7,472.4 L997.9,476.1 L999.8,479.0 L1001.7,481.6 L1003.6,483.8 L1005.3,485.9 L1006.9,487.9 L1008.3,489.9 L1009.5,491.9 L1010.5,493.8 L1011.3,495.6 L1012.1,497.3 L1012.8,499.2 L1013.4,501.1 L1014.0,503.0 L1014.5,504.8 L1015.0,506.6 L1015.4,508.7 L1015.7,511.1 L1016.0,514.0 L1016.3,517.9 L1016.5,522.6 L1016.6,527.7 L1016.7,532.6 L1016.8,536.8 L1016.9,539.8 L1017.9,539.6 L970.9,551.6" fill="none" stroke="#151515" stroke-width="3.3" stroke-linejoin="round"/>
<path d="M972.2,551.2 L973.9,550.8 L975.8,550.6 L978.1,550.6 L980.8,551.2 L983.9,552.2 L987.4,553.5 L991.3,555.1 L995.5,557.0 L1000.0,559.4 L1004.7,562.3 L1009.8,565.8 L1015.2,569.9 L1020.9,574.4 L1026.8,579.2 L1032.9,584.1 L1039.0,588.8 L1045.2,593.5 L1051.3,598.2 L1057.7,603.0 L1064.3,607.9 L1071.3,612.9 L1078.7,617.9 L1086.9,623.2 L1095.8,628.8 L1105.2,634.4 L1114.5,639.9 L1123.4,645.1 L1131.6,649.6 L1139.0,653.5 L1145.8,656.9 L1152.3,660.0 L1158.6,662.8 L1164.8,665.5 L1171.3,668.1 L1178.1,670.8 L1185.2,673.4 L1192.3,675.9 L1199.1,678.1 L1205.5,680.0 L1211.0,681.4 L1215.7,682.4 L1219.6,682.9 L1223.1,683.2 L1226.2,683.1 L1229.2,682.6 L1232.2,681.9 L1279.2,669.9 L1276.2,670.6 L1273.2,671.1 L1270.1,671.2 L1266.6,670.9 L1262.7,670.4 L1258.0,669.4 L1252.5,668.0 L1246.1,666.1 L1239.3,663.9 L1232.2,661.4 L1225.1,658.8 L1218.3,656.1 L1211.8,653.5 L1205.6,650.8 L1199.3,648.0 L1192.8,644.9 L1186.0,641.5 L1178.6,637.6 L1170.4,633.1 L1161.5,627.9 L1152.2,622.4 L1142.8,616.8 L1133.9,611.2 L1125.7,605.9 L1118.3,600.9 L1111.3,595.9 L1104.7,591.0 L1098.3,586.2 L1092.2,581.5 L1086.0,576.8 L1079.9,572.1 L1073.8,567.2 L1067.9,562.4 L1062.2,557.9 L1056.8,553.8 L1051.7,550.3 L1047.0,547.4 L1042.5,545.0 L1038.3,543.1 L1034.4,541.5 L1030.9,540.2 L1027.8,539.2 L1025.1,538.6 L1022.8,538.6 L1020.9,538.8 L1019.2,539.2Z" fill="url(#ghead)" stroke="url(#ghead)" stroke-width="0.7"/>
<path d="M1308.4,547.3 L1319.5,545.3 L1329.1,543.7 L1335.7,542.3 L1336.6,543.4 L1337.9,545.0 L1339.4,546.9 L1341.1,548.9 L1342.7,550.9 L1344.3,552.9 L1345.8,554.8 L1347.3,556.8 L1348.9,558.8 L1350.5,560.9 L1352.0,562.9 L1353.6,564.8 L1355.1,566.7 L1356.7,568.6 L1358.2,570.5 L1359.7,572.3 L1361.3,574.0 L1362.9,575.4 L1364.5,576.6 L1366.2,577.6 L1367.9,578.5 L1369.6,579.2 L1371.5,580.0 L1373.4,580.7 L1375.5,581.4 L1377.8,582.0 L1380.1,582.6 L1382.5,583.2 L1384.7,583.9 L1386.7,584.7 L1388.5,585.6 L1390.2,586.7 L1391.7,587.8 L1393.2,588.9 L1394.6,590.1 L1395.9,591.3 L1397.2,592.5 L1398.4,593.8 L1399.6,595.2 L1400.6,596.5 L1401.6,597.9 L1402.5,599.2 L1403.3,600.5 L1403.9,601.8 L1404.5,603.1 L1405.0,604.4 L1405.4,605.7 L1405.8,607.1 L1406.1,608.6 L1406.4,610.2 L1406.6,611.9 L1406.7,613.5 L1406.7,615.1 L1406.5,616.4 L1406.1,617.5 L1405.4,618.5 L1404.6,619.3 L1403.8,620.1 L1403.1,620.9 L1402.5,621.7 L1402.1,622.6 L1401.9,623.4 L1401.8,624.3 L1401.6,625.1 L1401.5,626.0 L1401.2,627.0 L1400.9,628.1 L1400.5,629.2 L1400.2,630.4 L1399.7,631.5 L1399.2,632.6 L1398.5,633.6 L1397.7,634.4 L1396.7,635.2 L1395.6,635.9 L1394.4,636.5 L1393.2,637.1 L1392.0,637.6 L1391.0,638.1 L1390.1,638.5 L1389.2,638.9 L1388.0,639.2 L1435.0,627.2 L1436.2,626.9 L1437.1,626.5 L1438.0,626.1 L1439.0,625.6 L1440.2,625.1 L1441.4,624.5 L1442.6,623.9 L1443.7,623.2 L1444.7,622.4 L1445.5,621.6 L1446.2,620.6 L1446.7,619.5 L1447.2,618.4 L1447.5,617.2 L1447.9,616.1 L1448.2,615.0 L1448.5,614.0 L1448.6,613.1 L1448.8,612.3 L1448.9,611.4 L1449.1,610.6 L1449.5,609.7 L1450.1,608.9 L1450.8,608.1 L1451.6,607.3 L1452.4,606.5 L1453.1,605.5 L1453.5,604.4 L1453.7,603.1 L1453.7,601.5 L1453.6,599.9 L1453.4,598.2 L1453.1,596.6 L1452.8,595.1 L1452.4,593.7 L1452.0,592.4 L1451.5,591.1 L1450.9,589.8 L1450.3,588.5 L1449.5,587.2 L1448.6,585.9 L1447.6,584.5 L1446.6,583.2 L1445.4,581.8 L1444.2,580.5 L1442.9,579.3 L1441.6,578.1 L1440.2,576.9 L1438.7,575.8 L1437.2,574.7 L1435.5,573.6 L1433.7,572.7 L1431.7,571.9 L1429.5,571.2 L1427.1,570.6 L1424.8,570.0 L1422.5,569.4 L1420.4,568.7 L1418.5,568.0 L1416.6,567.2 L1414.9,566.5 L1413.2,565.6 L1411.5,564.6 L1409.9,563.4 L1408.3,562.0 L1406.7,560.3 L1405.2,558.5 L1403.7,556.6 L1402.1,554.7 L1400.6,552.8 L1399.0,550.9 L1397.5,548.9 L1395.9,546.8 L1394.3,544.8 L1392.8,542.8 L1391.3,540.9 L1389.7,538.9 L1388.1,536.9 L1386.4,534.9 L1384.9,533.0 L1383.6,531.4 L1382.7,530.3 L1376.1,531.7 L1366.5,533.3 L1355.4,535.3Z" fill="url(#ghead)" stroke="url(#ghead)" stroke-width="0.7"/>
<path d="M1354.9,640.2 L1353.8,640.5 L1352.9,641.0 L1352.0,641.5 L1351.0,642.2 L1349.8,642.9 L1348.6,643.7 L1347.4,644.6 L1346.3,645.7 L1345.2,646.8 L1344.3,648.1 L1343.5,649.6 L1342.7,651.2 L1342.1,652.9 L1341.5,654.8 L1340.9,656.7 L1340.4,658.7 L1339.9,660.6 L1339.6,662.4 L1339.2,664.3 L1339.0,666.4 L1338.7,668.9 L1338.4,672.0 L1338.1,675.2 L1337.9,678.1 L1337.7,681.5 L1337.5,685.9 L1337.2,691.9 L1337.0,700.0 L1336.8,711.4 L1336.6,725.8 L1336.4,741.8 L1336.2,757.9 L1335.8,772.7 L1335.3,784.6 L1334.5,793.4 L1333.6,800.2 L1332.5,805.6 L1331.4,810.3 L1330.3,814.9 L1329.4,820.0 L1328.7,825.5 L1328.1,830.8 L1327.6,836.0 L1327.1,841.1 L1326.4,846.2 L1325.6,851.4 L1324.6,856.7 L1323.4,862.1 L1322.2,867.5 L1320.9,872.8 L1319.4,877.9 L1318.0,882.8 L1316.5,887.4 L1314.9,891.9 L1313.3,896.2 L1311.6,900.3 L1309.8,904.2 L1308.0,908.0 L1306.1,911.5 L1304.0,914.9 L1301.9,918.0 L1299.7,921.0 L1297.5,924.0 L1295.4,926.8 L1293.3,929.6 L1291.2,932.3 L1289.1,935.0 L1287.0,937.5 L1284.9,939.8 L1282.8,941.9 L1280.7,943.8 L1278.6,945.6 L1276.5,947.1 L1274.5,948.5 L1272.4,949.7 L1270.3,950.7 L1268.2,951.5 L1315.2,939.5 L1317.3,938.7 L1319.4,937.7 L1321.5,936.5 L1323.5,935.1 L1325.6,933.6 L1327.7,931.8 L1329.8,929.9 L1331.9,927.8 L1334.0,925.5 L1336.1,923.0 L1338.2,920.3 L1340.3,917.6 L1342.4,914.8 L1344.5,912.0 L1346.7,909.0 L1348.9,906.0 L1351.0,902.9 L1353.1,899.5 L1355.0,896.0 L1356.8,892.2 L1358.6,888.3 L1360.3,884.2 L1361.9,879.9 L1363.5,875.4 L1365.0,870.8 L1366.4,865.9 L1367.9,860.8 L1369.2,855.5 L1370.4,850.1 L1371.6,844.7 L1372.6,839.4 L1373.4,834.2 L1374.1,829.1 L1374.6,824.0 L1375.1,818.8 L1375.7,813.5 L1376.4,808.0 L1377.3,802.9 L1378.4,798.3 L1379.5,793.6 L1380.6,788.2 L1381.5,781.4 L1382.3,772.6 L1382.8,760.7 L1383.2,745.9 L1383.4,729.8 L1383.6,713.8 L1383.8,699.4 L1384.0,688.0 L1384.2,679.9 L1384.5,673.9 L1384.7,669.5 L1384.9,666.1 L1385.1,663.2 L1385.4,660.0 L1385.7,656.9 L1386.0,654.4 L1386.2,652.3 L1386.6,650.4 L1386.9,648.6 L1387.4,646.7 L1387.9,644.7 L1388.5,642.8 L1389.1,640.9 L1389.7,639.2 L1390.5,637.6 L1391.3,636.1 L1392.2,634.8 L1393.3,633.7 L1394.4,632.6 L1395.6,631.7 L1396.8,630.9 L1398.0,630.2 L1399.0,629.5 L1399.9,629.0 L1400.8,628.5 L1401.9,628.2Z" fill="url(#ghead)" stroke="url(#ghead)" stroke-width="0.7"/>
<path d="M938.0,464.1 L939.4,466.8 L941.4,470.7 L943.8,475.2 L946.3,480.0 L948.7,484.4 L950.9,488.1 L952.8,491.0 L954.7,493.6 L956.6,495.8 L958.3,497.9 L959.9,499.9 L961.3,501.9 L962.5,503.9 L963.5,505.8 L964.3,507.6 L965.1,509.3 L965.8,511.2 L966.4,513.1 L967.0,515.0 L967.5,516.8 L968.0,518.6 L968.4,520.7 L968.7,523.1 L969.0,526.0 L969.3,529.9 L969.5,534.6 L969.6,539.7 L969.7,544.6 L969.8,548.8 L969.9,551.8 L970.9,551.6 L1017.9,539.6 L1016.9,539.8 L1016.8,536.8 L1016.7,532.6 L1016.6,527.7 L1016.5,522.6 L1016.3,517.9 L1016.0,514.0 L1015.7,511.1 L1015.4,508.7 L1015.0,506.6 L1014.5,504.8 L1014.0,503.0 L1013.4,501.1 L1012.8,499.2 L1012.1,497.3 L1011.3,495.6 L1010.5,493.8 L1009.5,491.9 L1008.3,489.9 L1006.9,487.9 L1005.3,485.9 L1003.6,483.8 L1001.7,481.6 L999.8,479.0 L997.9,476.1 L995.7,472.4 L993.3,468.0 L990.8,463.2 L988.4,458.7 L986.4,454.8 L985.0,452.1Z" fill="url(#ghead)" stroke="url(#ghead)" stroke-width="0.7"/>
<path d="M938.0,464.1 L939.4,466.8 L941.4,470.7 L943.8,475.2 L946.3,480.0 L948.7,484.4 L950.9,488.1 L952.8,491.0 L954.7,493.6 L956.6,495.8 L958.3,497.9 L959.9,499.9 L961.3,501.9 L962.5,503.9 L963.5,505.8 L964.3,507.6 L965.1,509.3 L965.8,511.2 L966.4,513.1 L967.0,515.0 L967.5,516.8 L968.0,518.6 L968.4,520.7 L968.7,523.1 L969.0,526.0 L969.3,529.9 L969.5,534.6 L969.6,539.7 L969.7,544.6 L969.8,548.8 L969.9,551.8 L970.9,551.6 L972.2,551.2 L973.9,550.8 L975.8,550.6 L978.1,550.6 L980.8,551.2 L983.9,552.2 L987.4,553.5 L991.3,555.1 L995.5,557.0 L1000.0,559.4 L1004.7,562.3 L1009.8,565.8 L1015.2,569.9 L1020.9,574.4 L1026.8,579.2 L1032.9,584.1 L1039.0,588.8 L1045.2,593.5 L1051.3,598.2 L1057.7,603.0 L1064.3,607.9 L1071.3,612.9 L1078.7,617.9 L1086.9,623.2 L1095.8,628.8 L1105.2,634.4 L1114.5,639.9 L1123.4,645.1 L1131.6,649.6 L1139.0,653.5 L1145.8,656.9 L1152.3,660.0 L1158.6,662.8 L1164.8,665.5 L1171.3,668.1 L1178.1,670.8 L1185.2,673.4 L1192.3,675.9 L1199.1,678.1 L1205.5,680.0 L1211.0,681.4 L1215.7,682.4 L1219.6,682.9 L1223.1,683.2 L1226.2,683.1 L1229.2,682.6 L1232.2,681.9 L1235.2,680.7 L1238.0,679.1 L1240.7,677.1 L1243.2,675.0 L1245.7,672.8 L1248.0,670.8 L1250.2,668.9 L1252.3,667.1 L1254.3,665.3 L1256.2,663.3 L1258.0,661.2 L1259.7,658.7 L1261.3,655.8 L1262.8,652.6 L1264.2,649.2 L1265.4,645.6 L1266.6,642.2 L1267.6,638.9 L1268.5,635.6 L1269.2,632.1 L1269.8,628.7 L1270.3,625.6 L1270.7,622.9 L1271.0,621.0 L1271.4,613.9 L1271.6,603.6 L1272.0,591.6 L1273.2,579.4 L1275.7,568.4 L1280.0,560.0 L1287.2,554.3 L1297.2,550.2 L1308.4,547.3 L1319.5,545.3 L1329.1,543.7 L1335.7,542.3 L1336.6,543.4 L1337.9,545.0 L1339.4,546.9 L1341.1,548.9 L1342.7,550.9 L1344.3,552.9 L1345.8,554.8 L1347.3,556.8 L1348.9,558.8 L1350.5,560.9 L1352.0,562.9 L1353.6,564.8 L1355.1,566.7 L1356.7,568.6 L1358.2,570.5 L1359.7,572.3 L1361.3,574.0 L1362.9,575.4 L1364.5,576.6 L1366.2,577.6 L1367.9,578.5 L1369.6,579.2 L1371.5,580.0 L1373.4,580.7 L1375.5,581.4 L1377.8,582.0 L1380.1,582.6 L1382.5,583.2 L1384.7,583.9 L1386.7,584.7 L1388.5,585.6 L1390.2,586.7 L1391.7,587.8 L1393.2,588.9 L1394.6,590.1 L1395.9,591.3 L1397.2,592.5 L1398.4,593.8 L1399.6,595.2 L1400.6,596.5 L1401.6,597.9 L1402.5,599.2 L1403.3,600.5 L1403.9,601.8 L1404.5,603.1 L1405.0,604.4 L1405.4,605.7 L1405.8,607.1 L1406.1,608.6 L1406.4,610.2 L1406.6,611.9 L1406.7,613.5 L1406.7,615.1 L1406.5,616.4 L1406.1,617.5 L1405.4,618.5 L1404.6,619.3 L1403.8,620.1 L1403.1,620.9 L1402.5,621.7 L1402.1,622.6 L1401.9,623.4 L1401.8,624.3 L1401.6,625.1 L1401.5,626.0 L1401.2,627.0 L1400.9,628.1 L1400.5,629.2 L1400.2,630.4 L1399.7,631.5 L1399.2,632.6 L1398.5,633.6 L1397.7,634.4 L1396.7,635.2 L1395.6,635.9 L1394.4,636.5 L1393.2,637.1 L1392.0,637.6 L1391.0,638.1 L1390.1,638.5 L1389.2,638.9 L1388.0,639.2 L1386.3,639.4 L1384.0,639.6 L1380.6,639.7 L1376.3,639.7 L1371.4,639.6 L1366.6,639.5 L1362.3,639.5 L1358.9,639.6 L1356.6,639.8 L1354.9,640.2 L1353.8,640.5 L1352.9,641.0 L1352.0,641.5 L1351.0,642.2 L1349.8,642.9 L1348.6,643.7 L1347.4,644.6 L1346.3,645.7 L1345.2,646.8 L1344.3,648.1 L1343.5,649.6 L1342.7,651.2 L1342.1,652.9 L1341.5,654.8 L1340.9,656.7 L1340.4,658.7 L1339.9,660.6 L1339.6,662.4 L1339.2,664.3 L1339.0,666.4 L1338.7,668.9 L1338.4,672.0 L1338.1,675.2 L1337.9,678.1 L1337.7,681.5 L1337.5,685.9 L1337.2,691.9 L1337.0,700.0 L1336.8,711.4 L1336.6,725.8 L1336.4,741.8 L1336.2,757.9 L1335.8,772.7 L1335.3,784.6 L1334.5,793.4 L1333.6,800.2 L1332.5,805.6 L1331.4,810.3 L1330.3,814.9 L1329.4,820.0 L1328.7,825.5 L1328.1,830.8 L1327.6,836.0 L1327.1,841.1 L1326.4,846.2 L1325.6,851.4 L1324.6,856.7 L1323.4,862.1 L1322.2,867.5 L1320.9,872.8 L1319.4,877.9 L1318.0,882.8 L1316.5,887.4 L1314.9,891.9 L1313.3,896.2 L1311.6,900.3 L1309.8,904.2 L1308.0,908.0 L1306.1,911.5 L1304.0,914.9 L1301.9,918.0 L1299.7,921.0 L1297.5,924.0 L1295.4,926.8 L1293.3,929.6 L1291.2,932.3 L1289.1,935.0 L1287.0,937.5 L1284.9,939.8 L1282.8,941.9 L1280.7,943.8 L1278.6,945.6 L1276.5,947.1 L1274.5,948.5 L1272.4,949.7 L1270.3,950.7 L1268.2,951.5 L1266.1,952.0 L1264.0,952.3 L1261.9,952.5 L1259.8,952.5 L1257.7,952.6 L1255.6,952.6 L1253.5,952.5 L1251.5,952.3 L1249.4,952.0 L1247.3,951.7 L1245.1,951.3 L1242.7,950.9 L1240.1,950.3 L1237.4,949.7 L1234.9,949.1 L1232.8,948.6 L1231.3,948.2 L1220.6,943.0 L1204.9,935.3 L1186.7,926.5 L1168.5,917.6 L1152.8,909.9 L1142.1,904.7 L1137.7,903.0 L1131.7,900.8 L1124.6,898.1 L1116.8,895.0 L1109.1,891.7 L1101.8,888.2 L1094.9,884.5 L1088.0,880.5 L1081.0,876.3 L1074.0,871.8 L1067.0,867.0 L1060.0,862.0 L1052.5,856.3 L1044.4,849.7 L1036.3,842.8 L1028.8,836.3 L1022.5,830.8 L1017.9,826.9 L1015.3,823.0 L1011.8,817.6 L1007.7,811.2 L1003.1,804.1 L998.5,796.9 L994.1,789.8 L989.8,782.9 L985.3,775.7 L980.7,768.3 L976.1,760.7 L971.7,752.9 L967.6,744.9 L963.6,736.5 L959.6,727.6 L955.8,718.5 L952.3,709.3 L949.1,700.5 L946.5,692.0 L944.5,683.9 L942.9,676.0 L941.7,668.3 L940.9,660.9 L940.3,653.8 L939.8,647.0 L939.5,640.6 L939.5,634.7 L939.7,629.0 L940.1,623.5 L940.6,618.1 L941.2,612.6 L941.8,607.0 L942.4,601.5 L943.1,596.0 L944.0,590.7 L945.1,585.6 L946.5,580.8 L948.4,576.2 L950.7,571.6 L953.3,567.3 L955.8,563.4 L958.0,560.2 L959.5,557.8 L958.7,556.7 L957.5,555.1 L956.1,553.2 L954.6,551.2 L953.1,549.2 L951.8,547.5 L950.6,546.0 L949.3,544.5 L948.1,543.1 L946.9,541.7 L945.9,540.3 L944.9,538.9 L944.0,537.5 L943.2,536.2 L942.5,534.9 L941.8,533.5 L941.4,532.0 L941.1,530.3 L941.1,528.5 L941.4,526.8 L941.9,524.9 L942.3,522.8 L942.7,520.3 L942.8,517.4 L942.7,513.9 L942.4,509.8 L942.0,505.4 L941.5,500.8 L941.0,496.1 L940.6,491.6 L940.2,486.8 L939.7,481.5 L939.2,476.2 L938.7,471.3 L938.3,467.1Z" fill="url(#gbody)" stroke="#151515" stroke-width="1.3" stroke-linejoin="round"/></g>
<path d="M1021.2,971.9 L986.2,955.4 L987.8,947.1 L990.0,935.4 L992.7,921.7 L995.5,907.3 L998.2,893.6 L1000.7,882.0 L1002.9,872.6 L1004.9,864.2 L1006.9,856.5 L1008.9,849.2 L1010.9,842.0 L1013.1,834.5 L1015.4,827.0 L1017.7,819.6 L1020.0,812.4 L1022.5,805.0 L1025.1,797.4 L1028.0,789.5 L1031.2,780.9 L1034.6,771.7 L1038.3,762.3 L1042.0,753.0 L1045.6,744.2 L1049.0,736.3 L1052.4,728.9 L1056.0,721.8 L1059.6,715.1 L1062.8,709.2 L1065.5,704.3 L1067.5,700.6 L1102.5,717.1" fill="none" stroke="#151515" stroke-width="3.3" stroke-linejoin="round"/>
<path d="M1021.2,971.9 L1022.8,963.6 L1025.0,951.9 L1027.7,938.2 L1030.5,923.8 L1033.2,910.1 L1035.7,898.5 L1037.9,889.1 L1039.9,880.7 L1041.9,873.0 L1043.9,865.7 L1045.9,858.5 L1048.1,851.0 L1050.4,843.5 L1052.7,836.1 L1055.0,828.9 L1057.5,821.5 L1060.1,813.9 L1063.0,806.0 L1066.2,797.4 L1069.6,788.2 L1073.3,778.8 L1077.0,769.5 L1080.6,760.7 L1084.0,752.8 L1087.4,745.4 L1091.0,738.3 L1094.6,731.6 L1097.8,725.7 L1100.5,720.8 L1102.5,717.1 L1067.5,700.6 L1065.5,704.3 L1062.8,709.2 L1059.6,715.1 L1056.0,721.8 L1052.4,728.9 L1049.0,736.3 L1045.6,744.2 L1042.0,753.0 L1038.3,762.3 L1034.6,771.7 L1031.2,780.9 L1028.0,789.5 L1025.1,797.4 L1022.5,805.0 L1020.0,812.4 L1017.7,819.6 L1015.4,827.0 L1013.1,834.5 L1010.9,842.0 L1008.9,849.2 L1006.9,856.5 L1004.9,864.2 L1002.9,872.6 L1000.7,882.0 L998.2,893.6 L995.5,907.3 L992.7,921.7 L990.0,935.4 L987.8,947.1 L986.2,955.4Z" fill="url(#glegs1)" stroke="url(#glegs1)" stroke-width="0.7"/>
<path d="M1102.5,717.1 L1102.4,745.3 L1102.3,786.5 L1102.2,834.1 L1102.0,881.8 L1101.9,923.0 L1101.8,951.2 L1092.1,953.7 L1077.9,957.3 L1061.5,961.6 L1045.1,965.8 L1030.9,969.4 L1021.2,971.9 L1022.8,963.6 L1025.0,951.9 L1027.7,938.2 L1030.5,923.8 L1033.2,910.1 L1035.7,898.5 L1037.9,889.1 L1039.9,880.7 L1041.9,873.0 L1043.9,865.7 L1045.9,858.5 L1048.1,851.0 L1050.4,843.5 L1052.7,836.1 L1055.0,828.9 L1057.5,821.5 L1060.1,813.9 L1063.0,806.0 L1066.2,797.4 L1069.6,788.2 L1073.3,778.8 L1077.0,769.5 L1080.6,760.7 L1084.0,752.8 L1087.4,745.4 L1091.0,738.3 L1094.6,731.6 L1097.8,725.7 L1100.5,720.8Z" fill="url(#gleg)" stroke="#151515" stroke-width="1.3" stroke-linejoin="round"/>
<path d="M1149.3,1026.6 L1114.3,1010.1 L1116.3,1001.5 L1119.0,989.4 L1122.3,975.2 L1125.9,960.1 L1129.5,945.1 L1132.9,931.6 L1136.3,919.3 L1139.7,907.1 L1143.2,895.2 L1146.8,883.6 L1150.2,872.3 L1153.6,861.4 L1156.9,850.7 L1160.2,840.0 L1163.4,829.8 L1166.5,820.1 L1169.5,811.2 L1172.2,803.5 L1174.7,797.1 L1177.0,792.0 L1179.1,787.7 L1181.1,783.9 L1183.0,780.3 L1185.0,776.5 L1187.0,772.5 L1189.1,768.5 L1191.2,764.6 L1193.1,761.1 L1194.6,758.2 L1195.8,756.1 L1230.8,772.6" fill="none" stroke="#151515" stroke-width="3.3" stroke-linejoin="round"/>
<path d="M1149.3,1026.6 L1151.3,1018.0 L1154.0,1005.9 L1157.3,991.7 L1160.9,976.6 L1164.5,961.6 L1167.9,948.1 L1171.3,935.8 L1174.7,923.6 L1178.2,911.7 L1181.8,900.1 L1185.2,888.8 L1188.6,877.9 L1191.9,867.2 L1195.2,856.5 L1198.4,846.2 L1201.5,836.6 L1204.5,827.7 L1207.2,820.0 L1209.7,813.6 L1212.0,808.5 L1214.1,804.2 L1216.1,800.4 L1218.0,796.8 L1220.0,793.0 L1222.0,789.0 L1224.1,785.0 L1226.2,781.1 L1228.1,777.6 L1229.6,774.7 L1230.8,772.6 L1195.8,756.1 L1194.6,758.2 L1193.1,761.1 L1191.2,764.6 L1189.1,768.5 L1187.0,772.5 L1185.0,776.5 L1183.0,780.3 L1181.1,783.9 L1179.1,787.7 L1177.0,792.0 L1174.7,797.1 L1172.2,803.5 L1169.5,811.2 L1166.5,820.1 L1163.4,829.8 L1160.2,840.0 L1156.9,850.7 L1153.6,861.4 L1150.2,872.3 L1146.8,883.6 L1143.2,895.2 L1139.7,907.1 L1136.3,919.3 L1132.9,931.6 L1129.5,945.1 L1125.9,960.1 L1122.3,975.2 L1119.0,989.4 L1116.3,1001.5 L1114.3,1010.1Z" fill="url(#glegs2)" stroke="url(#glegs2)" stroke-width="0.7"/>
<path d="M1230.8,772.6 L1230.7,800.8 L1230.5,842.1 L1230.4,889.8 L1230.2,937.5 L1230.0,978.8 L1229.9,1007.0 L1220.2,1009.4 L1206.0,1012.8 L1189.6,1016.8 L1173.2,1020.8 L1159.0,1024.2 L1149.3,1026.6 L1151.3,1018.0 L1154.0,1005.9 L1157.3,991.7 L1160.9,976.6 L1164.5,961.6 L1167.9,948.1 L1171.3,935.8 L1174.7,923.6 L1178.2,911.7 L1181.8,900.1 L1185.2,888.8 L1188.6,877.9 L1191.9,867.2 L1195.2,856.5 L1198.4,846.2 L1201.5,836.6 L1204.5,827.7 L1207.2,820.0 L1209.7,813.6 L1212.0,808.5 L1214.1,804.2 L1216.1,800.4 L1218.0,796.8 L1220.0,793.0 L1222.0,789.0 L1224.1,785.0 L1226.2,781.1 L1228.1,777.6 L1229.6,774.7Z" fill="url(#gleg2)" stroke="#151515" stroke-width="1.3" stroke-linejoin="round"/>
<circle cx="1085.3" cy="874.8" r="9" fill="#d8d8d8" opacity="0.6"/><circle cx="1085.3" cy="874.8" r="5.5" fill="#7b8fbf" stroke="#3d4150" stroke-width="1.2"/></svg>
<!-- nav toolbar -->
<div class="a" style="left:1093px;top:1402px;width:355px;height:36px;background:#f2f2f2;border-right:2px solid #111"></div>

<!-- taskbar -->
<div class="a" style="left:0;top:1530px;width:2560px;height:70px;background:#eeeeee"></div>
<div class="t" style="left:76px;top:1544px;font-size:17px;color:#1a1a1a;letter-spacing:0.2px">8°C</div>
<div class="t" style="left:76px;top:1568px;font-size:17px;color:#555;letter-spacing:0.5px">Bewölkt</div>
<div class="a" style="left:853px;top:1541px;width:327px;height:46px;border:1px solid #d6d6d6;border-radius:23px;background:#fafafa"></div>
<div class="t" style="left:909px;top:1555px;font-size:20px;color:#444">Suche</div>
<div class="a" style="left:1718px;top:1536px;width:56px;height:56px;border-radius:6px;background:#f8f8f8;border:1px solid #e2e2e2"></div>
<div class="t" style="left:2488px;top:1544px;font-size:17px;color:#1a1a1a">11:02</div>
<div class="t" style="left:2443px;top:1568px;font-size:17px;color:#1a1a1a;letter-spacing:0.2px">03.11.2025</div>
<svg class="a" style="left:0;top:0" width="2560" height="1600" viewBox="0 0 2560 1600"><g id="ribbon-create">
<!-- sketch -->
<g stroke="#5a5a5a" stroke-width="2" fill="none">
<line x1="214" y1="135.7" x2="245.5" y2="135.7"/><line x1="209.7" y1="140" x2="209.7" y2="172"/><line x1="250" y1="140" x2="250" y2="160"/><line x1="214" y1="176.3" x2="234" y2="176.3"/>
<line x1="224" y1="146" x2="236" y2="146"/><line x1="219.9" y1="150" x2="219.9" y2="161.5"/>
<path d="M240,150 Q237,163 224,166"/>
</g>
<g fill="#5a5a5a"><rect x="207.5" y="133.5" width="4.5" height="4.5"/><rect x="247.8" y="133.5" width="4.5" height="4.5"/><rect x="207.5" y="174" width="4.5" height="4.5"/>
<rect x="217.7" y="143.8" width="4.4" height="4.4"/><rect x="237.5" y="143.8" width="4.4" height="4.4"/><rect x="217.7" y="163.4" width="4.4" height="4.4"/></g>
<path d="M242,160.7 h6.3 v7.3 h7 v6 h-7 v7.4 h-6.3 v-7.4 h-7 v-6 h7z" fill="#22a84a"/>
<!-- extrude -->
<path d="M273.6,173.9 L300.4,173.9 L309.6,164.7 L309.6,170.5 L300.4,180.6 L273.6,180.6Z" fill="#b2b2b2"/>
<path d="M300.4,173.9 L309.6,164.7 L309.6,170.5 L300.4,180.6Z" fill="#9c9c9c"/>
<rect x="273.6" y="142.7" width="26.8" height="31.2" fill="#69aee4"/>
<path d="M273.6,142.7 L282.7,133.6 L309.6,133.6 L300.4,142.7Z" fill="#8fcbfa"/>
<path d="M300.4,142.7 L309.6,133.6 L309.6,164.7 L300.4,173.9Z" fill="#4a93cf"/>
<line x1="314.7" y1="172.3" x2="314.7" y2="140" stroke="#333" stroke-width="1.8"/>
<path d="M311.2,141.3 L318.2,141.3 L314.7,134.7Z" fill="#333"/>
<!-- revolve -->
<path d="M381,144.3 Q362,130 340,144" stroke="#333" stroke-width="1.6" fill="none"/>
<path d="M337.3,145.6 L345,139.5 L344.5,146.5Z" fill="#333"/>
<path d="M336.4,153.5 Q360,137 382.6,152.4 L374,160.5 Q360,150 345.5,162Z" fill="#8ecbfa"/>
<path d="M345.5,162 Q360,150 374,160.5 L374,175.5 Q360,166 345.5,176.6Z" fill="#69aee4"/>
<path d="M336.4,153.5 L345.5,162 L345.5,176.6 L336.4,167.5Z" fill="#4a93cf"/>
<path d="M375.5,162 L384.2,154 L384.2,167.5 L375.5,175.7Z" fill="#fff" stroke="#444" stroke-width="1.3"/>
<!-- hole -->
<path d="M401.4,143.3 L410,134.7 L448.7,134.7 L440.1,143.3Z" fill="#f0f0f0"/>
<path d="M440.1,143.3 L448.7,134.7 L448.7,173.3 L440.1,180.9Z" fill="#bdbdbd"/>
<rect x="401.4" y="143.3" width="38.7" height="37.6" fill="#dadada"/>
<path d="M401.4,180.9 L401.4,143.3 L410,134.7 L448.7,134.7 L448.7,173.3 L440.1,180.9Z" fill="none" stroke="#5a5a5a" stroke-width="1.5" stroke-linejoin="round"/>
<circle cx="421.3" cy="161.5" r="11.8" fill="#f2f2f2" stroke="#5a5a5a" stroke-width="1.4"/>
<clipPath id="holeclip"><circle cx="421.1" cy="161.6" r="9.3"/></clipPath><circle cx="421.1" cy="161.6" r="9.1" fill="#68aee4" stroke="#4a8fc8" stroke-width="0.9"/><circle cx="428.8" cy="152.6" r="10.5" fill="#f2f2f2" stroke="#4a8fc8" stroke-width="0.9" clip-path="url(#holeclip)"/>
<!-- pattern -->
<rect x="466" y="136.9" width="9.3" height="9.3" fill="#fff" stroke="#555" stroke-width="1.4"/>
<rect x="497.4" y="136.9" width="9.7" height="9.3" fill="#68aee4"/>
<rect x="465.6" y="168.2" width="10.2" height="9.8" fill="#68aee4"/>
<rect x="497.4" y="168.2" width="9.7" height="9.8" fill="#68aee4"/>
<g stroke="#555" stroke-width="1.4"><line x1="478" y1="141.5" x2="495.3" y2="141.5"/><line x1="478" y1="173.3" x2="495.3" y2="173.3"/><line x1="470.7" y1="148.7" x2="470.7" y2="166.1"/></g>
<!-- form -->
<path d="M538,136.9 L560,136.9 Q575,138 574.9,150 L574.9,170 L565,180.9 L540,180.9 Q530.4,180.9 530.4,170 L530.4,146 Z" fill="#dcc8f7" stroke="#8d5fcf" stroke-width="1.2"/>
<path d="M534,150 Q534,145 540,145 L562,145 Q566,145 566,150 L566,172 Q566,176 562,176 L538,176 Q534,176 534,172Z" fill="#a67fe8"/>
<path d="M566,152 L574,160 L574,172 L566,178Z" fill="#8a5fd0"/>
<g stroke="#8a6cc0" stroke-width="0.8" fill="none"><path d="M546,140 Q544,160 546,180"/><path d="M531,161 Q550,164 574,160"/></g>
<path d="M565.2,134.3 L567.6,141.5 L574.3,137.8 L570.7,144.5 L577.9,146.2 L570.7,148 L574.3,154.7 L567.6,151 L565.2,158.1 L562.8,151 L556.1,154.7 L559.7,148 L552.5,146.2 L559.7,144.5 L556.1,137.8 L562.8,141.5Z" fill="#f5a800" stroke="#f2f2f2" stroke-width="1"/>
<!-- pipe / y-shape -->
<path d="M597,141.5 Q604,146 609,148.5 Q613,151 614,156 L614,166 L618,166 L618,156 Q619,151 623,149.5 Q628,147.5 633,145.5 L630.5,141.5 Q626,145 622,145.8 Q616,147 610,145 Q605,143 601,139Z" fill="#5aa9e2"/>
<path d="M609.5,146 Q612,152 613.5,160 L618.5,160 Q620,152 623,146.5" fill="none" stroke="#5aa9e2" stroke-width="2.5"/>
<path d="M613.3,151.3 L620.3,151.3 L616.6,159.6Z" fill="#f2f2f2"/>
<circle cx="616" cy="173.3" r="7.3" fill="#5aa9e2"/>
<circle cx="616" cy="173.3" r="5.6" fill="#fff" stroke="#555" stroke-width="1.5"/>
<circle cx="616" cy="173.3" r="1.8" fill="none" stroke="#555" stroke-width="1.2"/>
<rect x="594.8" y="133.9" width="9.8" height="9.3" fill="#fff" stroke="#555" stroke-width="1.5"/>
<path d="M628.5,142 L634.5,136.5 L641.2,145.8 L635.5,150.5 Q628,149 628.5,142Z" fill="#fff" stroke="#555" stroke-width="1.5"/>
</g>

<g id="ribbon-modify">
<!-- press pull -->
<path d="M677.4,180.4 L677.4,142.8 L686.1,133.7 L693.5,133.7 L687.7,140 L687.7,180.4Z" fill="#d9d9d9"/>
<path d="M686,180.4 L677.4,180.4 L677.4,142.8 L686.1,133.7 L693.5,133.7" fill="none" stroke="#555" stroke-width="1.5"/>
<rect x="687.7" y="142.4" width="13.3" height="38.8" fill="#68aee4"/>
<path d="M687.7,142.4 L696.4,133.7 L709.6,133.7 L701,142.4Z" fill="#8fcbfa"/>
<path d="M701,142.4 L709.6,133.7 L709.6,172.5 L701,181.2Z" fill="#4a93cf"/>
<rect x="705" y="154" width="5" height="5" fill="#f2f2f2"/>
<line x1="707" y1="156.4" x2="716" y2="156.4" stroke="#333" stroke-width="1.8"/>
<path d="M714.5,152.8 L720.4,156.4 L714.5,160Z" fill="#333"/>
<!-- fillet -->
<path d="M740.2,180.4 L740.2,144.8 L751.8,133.7 L764.2,133.7" fill="none" stroke="#555" stroke-width="1.5"/>
<path d="M740.2,144.8 L758,144.8 Q776.2,146 776.2,163 L776.2,180.4 L740.2,180.4Z" fill="#d9d9d9" stroke="#555" stroke-width="1.5"/>
<path d="M776.2,168 L787.7,156 L787.7,169.6 L776.2,180.4Z" fill="#b3b3b3" stroke="#555" stroke-width="1.4"/>
<path d="M757.6,143.6 L767.5,133.7 Q786,137 787.7,153.5 L777.4,163.4 Q775,146 757.6,143.6Z" fill="#66ade3"/>
<!-- shell -->
<path d="M804.7,144.8 L816.2,133.7 L852.2,133.7 L840.6,144.8Z" fill="#f0f0f0"/>
<path d="M840.6,144.8 L852.2,133.7 L852.2,169.6 L840.6,180.8Z" fill="#b5b5b5"/>
<rect x="804.7" y="144.8" width="35.9" height="36" fill="#dcdcdc"/>
<path d="M804.7,180.8 L804.7,144.8 L816.2,133.7 L852.2,133.7 L852.2,169.6 L840.6,180.8Z" fill="none" stroke="#555" stroke-width="1.5" stroke-linejoin="round"/>
<rect x="809.2" y="149.8" width="26.5" height="26.9" fill="#f5f5f5"/>
<path d="M810.8,151.8 L821.9,151.8 L821.9,163.8 L810.8,174.2Z" fill="#4a93cf"/>
<path d="M810.8,174.7 L820.3,163.8 L834,163.8 L834,174.7Z" fill="#8fcbfa"/>
<!-- combine -->
<path d="M884.4,139.9 L890.6,133.7 L917,133.7 L911.2,139.9Z" fill="#8fcbfa"/>
<path d="M911.2,139.9 L917,133.7 L917,160.1 L911.2,165.5Z" fill="#4a93cf"/>
<rect x="884.4" y="139.9" width="26.8" height="25.6" fill="#68aee4"/>
<path d="M869.1,154.3 L875.3,149 L884.4,149 L884.4,154.3Z" fill="#8fcbfa"/>
<path d="M869.1,154.3 L884.4,154.3 L884.4,165.5 L901.7,165.5 L901.7,175.4 L896,181.2 L869.1,181.2Z" fill="#68aee4"/>
<path d="M896,165.5 L901.7,165.5 L901.7,175.4 L896,181.2Z" fill="#4a93cf"/>
<!-- split -->
<path d="M936.9,142.8 L945.5,133.7 L978.2,133.7 L969.5,142.8Z" fill="#8fcbfa"/>
<path d="M969.5,142.8 L978.2,133.7 L978.2,147.7 L969.5,157.2Z" fill="#4a93cf"/>
<rect x="936.9" y="142.8" width="32.6" height="14.4" fill="#68aee4"/>
<path d="M933.6,161 L969.5,161 L981.5,149.4" fill="none" stroke="#f2f2f2" stroke-width="4"/>
<path d="M933.6,161 L969.5,161 L981.5,149.4" fill="none" stroke="#1a8ae6" stroke-width="1.4"/>
<path d="M969.5,165.1 L978.2,158.5 L978.2,171.3 L969.5,179.5Z" fill="#b5b5b5"/>
<rect x="936.9" y="165.1" width="32.6" height="14.4" fill="#d9d9d9"/>
<path d="M936.9,165 L936.9,179.5 L969.5,179.5 L978.2,171.3 L978.2,158.5" fill="none" stroke="#555" stroke-width="1.5"/>
<!-- move -->
<g fill="#333"><rect x="1020.6" y="142" width="2.9" height="30"/><rect x="1006" y="155.8" width="32" height="2.9"/>
<path d="M1022,133.7 L1029,144.8 L1015,144.8Z"/><path d="M1022,181.2 L1029,170 L1015,170Z"/><path d="M998.4,157.2 L1009.5,150.2 L1009.5,164.2Z"/><path d="M1045.5,157.2 L1034.5,150.2 L1034.5,164.2Z"/></g>
</g>

<g id="ribbon-assemble">
<!-- derive -->
<path d="M1085.6,151.9 L1092.6,140 L1123.7,140 L1111.9,151.9Z" fill="#eeeeee"/>
<path d="M1111.9,151.9 L1123.7,140 L1123.7,168 L1111.9,177.6Z" fill="#b5b5b5"/>
<rect x="1085.6" y="151.9" width="26.3" height="25.7" fill="#dcdcdc"/>
<path d="M1085.6,177.6 L1085.6,151.9 L1092.6,140 L1123.7,140 L1123.7,168 L1111.9,177.6Z" fill="none" stroke="#555" stroke-width="1.5" stroke-linejoin="round"/>
<rect x="1079.1" y="139.5" width="13" height="6.4" fill="#1a8ae6"/><path d="M1091,134.1 L1105.4,142.7 L1091,151Z" fill="#1a8ae6"/>
<g transform="translate(1114.5,171) rotate(-45)" fill="none" stroke="#333" stroke-width="2.6"><rect x="-12" y="-4" width="13" height="8" rx="4"/><rect x="-1" y="-4" width="13" height="8" rx="4"/></g>
<!-- new component -->
<path d="M1144.1,146 L1150.6,140 L1167.2,140 L1162.4,146Z" fill="#8fcbfa"/>
<path d="M1162.4,146 L1167.2,140 L1167.2,157.2 L1162.4,162.6Z" fill="#4a93cf"/>
<rect x="1144.1" y="146" width="18.3" height="16.6" fill="#68aee4"/>
<path d="M1162.4,162.6 L1167.7,158.3 L1184.9,158.3 L1179.6,163Z" fill="#f0f0f0"/>
<path d="M1179.6,163 L1184.9,158.3 L1184.9,175 L1179.6,180.3Z" fill="#b5b5b5"/>
<rect x="1144.1" y="162.6" width="35.5" height="17.7" fill="#dcdcdc"/>
<path d="M1144.1,162.6 L1144.1,180.3 L1179.6,180.3 L1184.9,175 L1184.9,158.3 L1167.7,158.3 L1162.4,163 L1162.4,180.3" fill="none" stroke="#555" stroke-width="1.4"/>
<path d="M1178.5,134 L1180.5,140.8 L1186.7,137.8 L1183.7,143.9 L1190.5,146 L1183.7,148.1 L1186.7,154.2 L1180.5,151.2 L1178.5,158 L1176.5,151.2 L1170.3,154.2 L1173.3,148.1 L1166.5,146 L1173.3,143.9 L1170.3,137.8 L1176.5,140.8Z" fill="#f5a800" stroke="#f2f2f2" stroke-width="1"/>
<!-- joint -->
<rect x="1208.6" y="161.5" width="20.4" height="16.7" fill="none" stroke="#555" stroke-width="1.5"/>
<line x1="1231.1" y1="137.4" x2="1231.1" y2="178.7" stroke="#d0202a" stroke-width="1.6"/>
<rect x="1233.3" y="137.4" width="20.9" height="17.1" fill="#68aee4"/>
<!-- tables -->
<rect x="1272.5" y="134.1" width="10.2" height="9.2" fill="#68aee4"/>
<rect x="1272.5" y="143.3" width="18.8" height="9.1" fill="#fff" stroke="#555" stroke-width="1.4"/>
<line x1="1282.2" y1="143.3" x2="1282.2" y2="152.4" stroke="#555" stroke-width="1.4"/>
<g stroke="#999" stroke-width="1.3"><line x1="1280.5" y1="155" x2="1280.5" y2="178.2"/><line x1="1280.5" y1="159.4" x2="1291.8" y2="159.4"/><line x1="1280.5" y1="166.9" x2="1291.8" y2="166.9"/><line x1="1280.5" y1="174.4" x2="1291.8" y2="174.4"/></g>
<rect x="1295" y="145.4" width="25.3" height="35.5" fill="#fff" stroke="#555" stroke-width="1.5"/>
<rect x="1295" y="145.4" width="25.3" height="5.4" fill="#666"/>
<g stroke="#777" stroke-width="1"><line x1="1303.6" y1="150.8" x2="1303.6" y2="180.9"/><line x1="1295" y1="156.6" x2="1320.3" y2="156.6"/><line x1="1295" y1="162.6" x2="1320.3" y2="162.6"/><line x1="1295" y1="168.6" x2="1320.3" y2="168.6"/><line x1="1295" y1="174.6" x2="1320.3" y2="174.6"/></g>
</g>

<g id="ribbon-config">
<path d="M1377.4,144.2 L1387.9,133.4 L1419.5,133.4 L1409,144.2Z" fill="#f2f2f2" stroke="#9a9a9a" stroke-width="1"/>
<path d="M1409,144.2 L1419.5,133.4 L1419.5,164.7 L1409,175.2Z" fill="#bdbdbd" stroke="#9a9a9a" stroke-width="1"/>
<rect x="1377.4" y="144.2" width="31.6" height="31" fill="#dadada" stroke="#9a9a9a" stroke-width="1" rx="1"/>
<rect x="1404" y="163" width="22" height="20" fill="#f2f2f2"/>
<g fill="#555"><rect x="1404.7" y="166.5" width="20.4" height="2.6"/><rect x="1404.7" y="175.1" width="20.4" height="2.6"/><rect x="1418.3" y="172.7" width="2.5" height="8.7"/></g>
<rect x="1409" y="163.4" width="3.1" height="8.7" fill="#1a8ae6"/>
<rect x="1442.5" y="133.7" width="44" height="42.7" fill="#f2f2f2" stroke="#666" stroke-width="1.6"/>
<rect x="1442.5" y="133.7" width="44" height="8" fill="#666"/>
<rect x="1445" y="136.8" width="5.5" height="2.5" fill="#fff"/>
<rect x="1446.8" y="147.3" width="34.7" height="22.9" fill="none" stroke="#666" stroke-width="1.4"/>
<g stroke="#666" stroke-width="1.2"><line x1="1454.5" y1="147.3" x2="1454.5" y2="170.2"/><line x1="1462" y1="147.3" x2="1462" y2="170.2"/><line x1="1446.8" y1="155" x2="1481.5" y2="155"/><line x1="1446.8" y1="162.5" x2="1481.5" y2="162.5"/></g>
<rect x="1467" y="162" width="24" height="21" fill="#f2f2f2"/>
<g fill="#555"><rect x="1469" y="166.5" width="20.4" height="2.6"/><rect x="1469" y="175.1" width="20.4" height="2.6"/><rect x="1482.5" y="172.7" width="2.5" height="8.7"/></g>
<rect x="1473.5" y="163.4" width="3.1" height="8.7" fill="#1a8ae6"/>
</g>

<g id="ribbon-construct">
<path d="M1601.1,179.5 L1601.1,147.3 L1614.2,133.7 L1625.3,133.7 L1614.2,147.3 L1614.2,179.5Z" fill="#dcdcdc"/>
<path d="M1613,179.5 L1601.1,179.5 L1601.1,147.3 L1614.2,133.7 L1625.3,133.7" fill="none" stroke="#555" stroke-width="1.5"/>
<path d="M1614.2,147.3 L1627.8,134.3 L1627.8,167.1 L1614.2,179.5Z" fill="#57c77b" stroke="#46b46a" stroke-width="0.8"/>
<path d="M1632.1,146.7 L1645.8,134.3 L1645.8,166.5 L1632.1,178.9Z" fill="#e8a068" stroke="#d98c55" stroke-width="0.8"/>
</g>

<g id="ribbon-inspect">
<g stroke="#555" stroke-width="1.6"><line x1="1754.9" y1="145.3" x2="1754.9" y2="158.7"/><line x1="1795" y1="145.3" x2="1795" y2="158.7"/><line x1="1757" y1="152" x2="1793" y2="152"/></g>
<path d="M1756,152 L1761.5,148.5 L1761.5,155.5Z M1794,152 L1788.5,148.5 L1788.5,155.5Z" fill="#555"/>
<rect x="1754.1" y="160.2" width="41.7" height="8.9" fill="#f5a800"/>
<g stroke="#6b5a30" stroke-width="0.9"><line x1="1759" y1="160.2" x2="1759" y2="163.5"/><line x1="1763.5" y1="160.2" x2="1763.5" y2="162.5"/><line x1="1768" y1="160.2" x2="1768" y2="163.5"/><line x1="1772.5" y1="160.2" x2="1772.5" y2="162.5"/><line x1="1777" y1="160.2" x2="1777" y2="163.5"/><line x1="1781.5" y1="160.2" x2="1781.5" y2="162.5"/><line x1="1786" y1="160.2" x2="1786" y2="163.5"/><line x1="1790.5" y1="160.2" x2="1790.5" y2="162.5"/></g>
</g>

<g id="ribbon-insert">
<rect x="1862" y="146.8" width="20.8" height="34" rx="2" fill="#7fbde9" stroke="#5a9fd3" stroke-width="0.8"/>
<g stroke="#4d92c8" stroke-width="0.9"><line x1="1861" y1="151" x2="1884" y2="152"/><line x1="1861" y1="155" x2="1884" y2="156"/><line x1="1861" y1="159" x2="1884" y2="160"/><line x1="1861" y1="163" x2="1884" y2="164"/><line x1="1861" y1="167" x2="1884" y2="168"/><line x1="1861" y1="171" x2="1884" y2="172"/><line x1="1861" y1="175" x2="1884" y2="176"/></g>
<rect x="1854.5" y="135.6" width="35.7" height="11.2" rx="2" fill="#6ab0e4"/>
<rect x="1878" y="135.6" width="12.2" height="11.2" rx="1" fill="#4a93cf"/>
<rect x="1858" y="135.6" width="9" height="11.2" fill="#8fcbfa" opacity="0.6"/>
<rect x="1876" y="158" width="25" height="25" fill="#f2f2f2"/>
<path d="M1886.5,160.9 h5.2 v6.7 h7.5 v6 h-7.5 v7.4 h-5.2 v-7.4 h-8.1 v-6 h8.1z" fill="#22a84a"/>
<rect x="1917.8" y="134.9" width="43.1" height="43.1" fill="#85c8f8" stroke="#4a93cf" stroke-width="1"/>
<path d="M1918.3,163 Q1926,145 1932,152 Q1940,163 1944,168 Q1950,156 1960.4,168 L1960.4,177.5 L1918.3,177.5Z" fill="#4393cd"/>
<circle cx="1949" cy="146.8" r="4.5" fill="#fffbd0" stroke="#e8dc90" stroke-width="0.8"/>
</g>

<g id="ribbon-select">
<rect x="2030.8" y="128.2" width="58.1" height="58" fill="#0896d7"/>
<rect x="2036" y="134.1" width="41.7" height="32" fill="none" stroke="#6fe0a0" stroke-width="1.6" stroke-dasharray="4.5,3"/>
<path d="M2067.3,155 L2067.3,176.5 L2072.5,171.5 L2076.5,180.5 L2080,179 L2076.2,170 L2083.7,170.6Z" fill="#fff"/>
</g>
<g id="tabstrip">
<g fill="#666"><rect x="15.2" y="58.3" width="6.2" height="6.2" rx="1"/><rect x="22.8" y="58.3" width="6.2" height="6.2" rx="1"/><rect x="30.2" y="58.3" width="6.2" height="6.2" rx="1"/>
<rect x="15.2" y="65.8" width="6.2" height="6.2" rx="1"/><rect x="22.8" y="65.8" width="6.2" height="6.2" rx="1"/><rect x="30.2" y="65.8" width="6.2" height="6.2" rx="1"/>
<rect x="15.2" y="73.3" width="6.2" height="6.2" rx="1"/><rect x="22.8" y="73.3" width="6.2" height="6.2" rx="1"/><rect x="30.2" y="73.3" width="6.2" height="6.2" rx="1"/></g>
<path d="M66.1,58 Q66.1,56.9 67.2,56.9 L79.5,56.9 L85,62.8 L85,80 Q85,81 84,81 L67.2,81 Q66.1,81 66.1,80Z" fill="#666"/>
<path d="M79.5,56.9 L79.5,62.8 L85,62.8Z" fill="#cccccc"/>
<path d="M94.2,66.2 L103.5,66.2 L98.85,72.6Z" fill="#666"/>
<path d="M132.4,59.5 Q132.4,58.3 133.6,58.3 L152,58.3 Q153.2,58.3 153.2,59.5 L153.2,78.3 Q153.2,79.5 152,79.5 L136,79.5 L132.4,76Z" fill="#666"/>
<rect x="137" y="59.8" width="2.2" height="7.5" fill="#ccc"/><rect x="146.3" y="59.8" width="2.2" height="7.5" fill="#ccc"/><rect x="137" y="65.2" width="11.5" height="2.1" fill="#ccc"/>
<path d="M138,78 L138,72.5 L147.5,72.5 L147.5,78 L145.5,78 L145.5,74.5 L140,74.5 L140,78Z" fill="#ccc"/>
<path d="M184.5,67 L191,60.8 M184.5,67 L191,73.2 M185.5,67 L195,67 Q201,67 201,74 L201,77.8" fill="none" stroke="#666" stroke-width="2.8" stroke-linecap="butt"/>
<path d="M211.9,66.2 L222,66.2 L216.95,72.6Z" fill="#666"/>
<path d="M259.5,67 L253,60.8 M259.5,67 L253,73.2 M258.5,67 L249,67 Q242,67 242,74 L242,77.8" fill="none" stroke="#999" stroke-width="2.8"/>
<path d="M270.9,66.2 L280.5,66.2 L275.7,72.6Z" fill="#999"/>
<path d="M311.6,73.5 L322.7,63.6 L327.5,67.9 L327.5,64.5 L330.5,64.5 L330.5,70.6 L333.9,73.5 L331.2,73.5 L331.2,84.3 L325,84.3 L325,77.5 L320.5,77.5 L320.5,84.3 L314.2,84.3 L314.2,73.5Z" fill="#777"/>
<!-- right side -->
<path d="M2196,65.8 L2209,78.5 M2209,65.8 L2196,78.5" stroke="#6a6a6a" stroke-width="2"/>
<rect x="2245.5" y="62" width="4" height="19" fill="#777"/><rect x="2237.7" y="69.5" width="19.5" height="4" fill="#777"/>
<circle cx="2296.9" cy="68.9" r="11.5" fill="#666"/>
<g transform="translate(2297.3,68.2) rotate(45)" fill="#ccc"><path d="M-7,0 L7,0 L7,1.8 A7,7 0 0 1 -7,1.8Z"/><rect x="-3.8" y="-6.5" width="1.9" height="7"/><rect x="1.9" y="-6.5" width="1.9" height="7"/><rect x="-1" y="7" width="2" height="7"/></g>
<circle cx="2346.3" cy="69" r="11.6" fill="none" stroke="#6a6a6a" stroke-width="1.3"/>
<circle cx="2346.3" cy="69" r="9.6" fill="#6a6a6a"/>
<path d="M2344.5,62 L2344.5,70.5 L2351.5,70.5" fill="none" stroke="#ccc" stroke-width="1.8"/>
<path d="M2396,57.2 Q2397.5,57.2 2397.5,59 Q2403,60.5 2403.5,67 L2403.5,73 L2406.3,76.5 L2385.6,76.5 L2388.5,73 L2388.5,67 Q2389,60.5 2394.5,59 Q2394.5,57.2 2396,57.2Z" fill="#6a6a6a"/>
<path d="M2392.5,77.5 Q2396,81.5 2399.5,77.5Z" fill="#6a6a6a"/>
<circle cx="2445.5" cy="69" r="12" fill="#6a6a6a"/>
<path d="M2441,65.5 Q2441,61 2445.5,61 Q2450.5,61 2450.5,65.5 Q2450.5,68.5 2447.3,70 Q2446,70.8 2446,73" fill="none" stroke="#ccc" stroke-width="3"/>
<rect x="2444.3" y="74.5" width="3.4" height="3.2" fill="#ccc"/>
<circle cx="2503.8" cy="68.6" r="19" fill="#efefef"/><text x="2503" y="75.5" font-family="Liberation Sans" font-size="18" fill="#2b3444" text-anchor="middle">LS</text>
</g>
<g id="wincontrols" stroke="#1a1a1a" stroke-width="1.3" fill="none">
<line x1="2356.7" y1="22.3" x2="2372.4" y2="22.3"/>
<rect x="2426.5" y="15.5" width="14.5" height="14.3" rx="2"/>
<path d="M2497.2,15.2 L2512,29.8 M2512,15.2 L2497.2,29.8"/>
</g>
<!-- F logo title -->
<g id="flogo">
<path d="M14,13 Q14,10 17,10 L35,10 L35,28 L17,28 Q14,28 14,25Z" fill="#ff8a30"/>
<rect x="17.5" y="10" width="18" height="19" rx="2" fill="#ff6a00"/>
<rect x="16" y="26" width="20" height="8" rx="1" fill="#a3400e"/>
<text x="26.5" y="24" font-family="Liberation Sans" font-weight="bold" font-size="12" fill="#fff" text-anchor="middle">F</text>
<text x="26" y="32.8" font-family="Liberation Sans" font-weight="bold" font-size="5" fill="#f6c7a6" text-anchor="middle">FUS</text>
</g>
<!-- doc cube icon -->
<g id="doccube">
<path d="M1226,62 L1237,67.5 L1226,73 L1215,67.5Z" fill="#ffb06a"/>
<path d="M1215,67.5 L1226,73 L1226,86 L1215,80Z" fill="#ff8c3a"/>
<path d="M1226,73 L1237,67.5 L1237,80 L1226,86Z" fill="#ff6a10"/>
</g>
<path d="M15.5,246.3 L23,241.6 L23,251.1Z M23.2,246.3 L30.7,241.6 L30.7,251.1Z" fill="#333"/>
<circle cx="433" cy="245.7" r="7.2" fill="#222"/><rect x="428.5" y="244.6" width="9" height="2.4" fill="#fff"/>
<defs><linearGradient id="gtri" x1="0" y1="0" x2="1" y2="1"><stop offset="0" stop-color="#aaa"/><stop offset="1" stop-color="#111"/></linearGradient><linearGradient id="gcube" x1="0" y1="0" x2="0" y2="1"><stop offset="0" stop-color="#f4f6fa"/><stop offset="1" stop-color="#b4bccb"/></linearGradient><linearGradient id="gradio" x1="0" y1="0" x2="0" y2="1"><stop offset="0" stop-color="#9aa6bb"/><stop offset="1" stop-color="#fbfbfd"/></linearGradient></defs>
<path d="M36.5,291.2 L45.4,282.6 L45.4,291.2Z" fill="url(#gtri)" stroke="#000" stroke-width="1.2" stroke-linejoin="round"/>
<path d="M66.7,287.0 Q78.5,272.5 90.3,287.0 Q78.5,301.5 66.7,287.0Z" fill="#999"/><circle cx="78.5" cy="287.0" r="3.6" fill="none" stroke="#f1f1f1" stroke-width="1.6"/>
<path d="M107,280 L110.5,276 L125.3,276 L125.3,290.5 L121.5,295 L107,295Z" fill="url(#gcube)" stroke="#333" stroke-width="1"/>
<path d="M107,280 L121.5,280 L125.3,276 M121.5,280 L121.5,295" fill="none" stroke="#555" stroke-width="0.8"/>
<path d="M121.5,280 L125.3,276 L125.3,290.5 L121.5,295Z" fill="#a6afc0"/>
<circle cx="274.9" cy="286.1" r="9.6" fill="url(#gradio)" stroke="#4a4a4a" stroke-width="1.3"/><circle cx="274.9" cy="286.1" r="3.9" fill="#4a4c52"/>
<path d="M63.5,316.4 L72.6,323.0 L63.5,329.6Z" fill="#fff" stroke="#111" stroke-width="1.05" stroke-linejoin="round"/>
<path d="M63.5,352.4 L72.6,359.0 L63.5,365.6Z" fill="#fff" stroke="#111" stroke-width="1.05" stroke-linejoin="round"/>
<path d="M63.5,388.4 L72.6,395.0 L63.5,401.6Z" fill="#fff" stroke="#111" stroke-width="1.05" stroke-linejoin="round"/>
<path d="M63.5,424.4 L72.6,431.0 L63.5,437.6Z" fill="#fff" stroke="#111" stroke-width="1.05" stroke-linejoin="round"/>
<path d="M63.5,460.4 L72.6,467.0 L63.5,473.6Z" fill="#fff" stroke="#111" stroke-width="1.05" stroke-linejoin="round"/>
<path d="M116.6,319.5 L116.6,324.5 L113.1,324.9 L112.9,325.4 L115.1,328.2 L111.5,331.8 L108.7,329.6 L108.2,329.8 L107.8,333.3 L102.8,333.3 L102.4,329.8 L101.9,329.6 L99.1,331.8 L95.5,328.2 L97.7,325.4 L97.5,324.9 L94.0,324.5 L94.0,319.5 L97.5,319.1 L97.7,318.6 L95.5,315.8 L99.1,312.2 L101.9,314.4 L102.4,314.2 L102.8,310.7 L107.8,310.7 L108.2,314.2 L108.7,314.4 L111.5,312.2 L115.1,315.8 L112.9,318.6 L113.1,319.1Z" fill="#808080"/><circle cx="105.3" cy="322.0" r="4.2" fill="#f1f1f1"/>
<path d="M94.0,349.0 h9.7 q1.3,0 1.3,1.6 q0,1.6 -1.3,1.6 h-9.7z" fill="#999"/><path d="M94.0,353.7 L104.7,353.7 L108.1,351.0 L117.8,351.0 L117.8,368.6 L94.0,368.6Z" fill="#999"/>
<g transform="translate(105.5,395)"><path d="M-11.8,0 Q0,-14.5 11.8,0 Q0,14.5 -11.8,0Z" fill="none" stroke="#999" stroke-width="1.5"/><circle r="3.8" fill="none" stroke="#999" stroke-width="1.5"/><line x1="-7.5" y1="-7.5" x2="7.5" y2="7.5" stroke="#f1f1f1" stroke-width="3"/><line x1="-7.5" y1="-7.5" x2="7.5" y2="7.5" stroke="#999" stroke-width="1.6"/></g>
<path d="M131.1,385.1 h9.7 q1.3,0 1.3,1.6 q0,1.6 -1.3,1.6 h-9.7z" fill="#999"/><path d="M131.1,389.8 L141.8,389.8 L145.2,387.1 L154.9,387.1 L154.9,404.7 L131.1,404.7Z" fill="#999"/>
<path d="M93.7,431.0 Q105.5,416.5 117.3,431.0 Q105.5,445.5 93.7,431.0Z" fill="#999"/><circle cx="105.5" cy="431.0" r="3.6" fill="none" stroke="#f1f1f1" stroke-width="1.6"/>
<path d="M131.1,421.1 h9.7 q1.3,0 1.3,1.6 q0,1.6 -1.3,1.6 h-9.7z" fill="#999"/><path d="M131.1,425.8 L141.8,425.8 L145.2,423.1 L154.9,423.1 L154.9,440.7 L131.1,440.7Z" fill="#999"/>
<path d="M93.7,467.0 Q105.5,452.5 117.3,467.0 Q105.5,481.5 93.7,467.0Z" fill="#999"/><circle cx="105.5" cy="467.0" r="3.6" fill="none" stroke="#f1f1f1" stroke-width="1.6"/>
<path d="M131.1,457.1 h9.7 q1.3,0 1.3,1.6 q0,1.6 -1.3,1.6 h-9.7z" fill="#999"/><path d="M131.1,461.8 L141.8,461.8 L145.2,459.1 L154.9,459.1 L154.9,476.7 L131.1,476.7Z" fill="#999"/>
<line x1="126.4" y1="308" x2="126.4" y2="338" stroke="#fafafa" stroke-width="1"/>
<line x1="126.4" y1="344" x2="126.4" y2="374" stroke="#fafafa" stroke-width="1"/>
<line x1="126.4" y1="380" x2="126.4" y2="410" stroke="#fafafa" stroke-width="1"/>
<line x1="126.4" y1="416" x2="126.4" y2="446" stroke="#fafafa" stroke-width="1"/>
<line x1="126.4" y1="452" x2="126.4" y2="482" stroke="#fafafa" stroke-width="1"/>
<line x1="258.5" y1="272" x2="258.5" y2="302" stroke="#fafafa" stroke-width="1"/>
<circle cx="433" cy="1421.7" r="7.2" fill="#222"/><rect x="428.5" y="1420.5" width="9" height="2.4" fill="#fff"/><rect x="431.8" y="1417.2" width="2.4" height="9" fill="#fff"/>
<g><path d="M1109,1408 L1104.5,1413 L1107.2,1413 L1107.2,1429 L1110.8,1429 L1110.8,1413 L1113.5,1413Z" fill="#f4f4f4" stroke="#555" stroke-width="1"/><ellipse cx="1109" cy="1421" rx="11" ry="4" fill="none" stroke="#555" stroke-width="1.2"/><path d="M1101,1424 L1104,1421 L1104.5,1426Z" fill="#333"/></g>
<path d="M1129,1418.6 L1137.5,1418.6 L1133.2,1423.8Z" fill="#222"/>
<path d="M1149,1414 L1153,1409 L1160,1412 L1164,1410.5 L1164,1414Z" fill="#aab" stroke="#555" stroke-width="0.8"/><rect x="1148.5" y="1414" width="20.5" height="15" fill="#eee" stroke="#555" stroke-width="1"/><rect x="1151" y="1418" width="15.5" height="8" fill="#7f8aa0"/>
<path d="M1193,1430 Q1188,1424 1186.5,1418 Q1187,1416 1189,1418 L1191.5,1421 L1191.5,1410 Q1192.5,1408 1194,1410 L1194.5,1418 L1195,1408 Q1196.5,1406 1198,1408 L1198.3,1418 L1199,1409 Q1200.5,1407.5 1202,1409.5 L1202,1419 L1203.5,1412 Q1205,1410.5 1206.5,1412.5 L1205.5,1424 Q1204,1430 1201,1430Z" fill="#f3f3f3" stroke="#666" stroke-width="1"/>
<circle cx="1233" cy="1411.5" r="6.8" fill="#e4eeee" stroke="#444" stroke-width="1.1"/><line x1="1238" y1="1416.5" x2="1247" y2="1425.5" stroke="#444" stroke-width="2.5"/><text x="1241" y="1413" font-size="8" fill="#333" font-family="Liberation Sans">±</text>
<rect x="1264.5" y="1409" width="22.5" height="21.5" fill="none" stroke="#888" stroke-width="0.9" stroke-dasharray="2,1.5"/><circle cx="1274" cy="1418" r="6.8" fill="#e4eeee" stroke="#444" stroke-width="1.1"/><line x1="1279" y1="1423" x2="1286" y2="1430" stroke="#444" stroke-width="2.5"/>
<path d="M1295,1418.6 L1304,1418.6 L1299.5,1424Z" fill="#222"/>
<rect x="1314" y="1408" width="22" height="17.5" fill="#ddd" stroke="#666" stroke-width="1"/><rect x="1316.5" y="1410.5" width="17" height="12.5" fill="#86a6d8" stroke="#4a6aa0" stroke-width="0.8"/><path d="M1322,1426 L1328,1426 L1329.5,1429.5 L1320.5,1429.5Z" fill="#aaa"/>
<path d="M1340,1418.6 L1349,1418.6 L1344.5,1424Z" fill="#222"/>
<defs><pattern id="pgrid" width="3.1" height="3.1" patternUnits="userSpaceOnUse" x="1360" y="1409"><rect width="3.1" height="3.1" fill="#fff"/><rect width="1.4" height="3.1" fill="#8b93a3"/><rect width="3.1" height="1.4" fill="#8b93a3"/></pattern></defs>
<rect x="1360" y="1409" width="22" height="21" fill="url(#pgrid)" stroke="#666" stroke-width="1"/>
<path d="M1387,1418.6 L1396,1418.6 L1391.5,1424Z" fill="#222"/>
<rect x="1407" y="1414" width="22" height="15" rx="1" fill="#5e86c8" stroke="#3a5e9a" stroke-width="0.8"/><g fill="#9cb9e6"><rect x="1409" y="1416" width="8" height="5"/><rect x="1419" y="1416" width="8" height="5"/><rect x="1409" y="1422.5" width="8" height="5"/><rect x="1419" y="1422.5" width="8" height="5"/></g>
<path d="M1433,1418.6 L1442,1418.6 L1437.5,1424Z" fill="#222"/>
<g fill="#666"><rect x="19" y="1475.5" width="3.2" height="17.5"/><path d="M22.5,1484.2 L35.8,1475.5 L35.8,1493Z"/><path d="M55,1484.2 L67,1475.5 L67,1493Z"/><rect x="68.5" y="1479.8" width="3" height="8"/><path d="M94,1473.5 L112,1484.2 L94,1495Z"/><rect x="129" y="1479.8" width="3" height="8"/><path d="M133.5,1475.5 L148.5,1484.2 L133.5,1493Z"/><path d="M169,1475.5 L182,1484.2 L169,1493Z"/><rect x="183" y="1475.5" width="3.2" height="17.5"/></g>
<g><g stroke="#a8a8a8" stroke-width="2" fill="none"><line x1="223.1" y1="1471.4" x2="241.1" y2="1471.4"/><line x1="222.1" y1="1473" x2="222.1" y2="1490"/><line x1="241.7" y1="1473" x2="241.7" y2="1481"/><line x1="223.1" y1="1491.1" x2="233.1" y2="1491.1"/></g><g stroke="#888" stroke-width="1.3" fill="none"><line x1="227.1" y1="1476.4" x2="236.1" y2="1476.4"/><line x1="227.2" y1="1477" x2="227.2" y2="1485"/><path d="M236.6,1477 Q235.1,1485 228.1,1486.1"/></g><g fill="#1a8ae6"><circle cx="222.1" cy="1471.4" r="1.3"/><circle cx="241.7" cy="1471.4" r="1.3"/><circle cx="222.1" cy="1491.1" r="1.3"/><circle cx="227.2" cy="1476.4" r="1.3"/><circle cx="236.6" cy="1476.4" r="1.3"/><circle cx="227.2" cy="1486.1" r="1.3"/></g><path d="M233.1,1493.6 L235.3,1488 L237.1,1491Z" fill="#555"/><path d="M235.3,1488 L240.6,1484 L242.6,1487.5 L237.1,1491Z" fill="#f7c04a"/><circle cx="242.7" cy="1484.4" r="2.6" fill="#ef2a2a"/></g>
<g><g stroke="#a8a8a8" stroke-width="2" fill="none"><line x1="259.1" y1="1471.4" x2="277.1" y2="1471.4"/><line x1="258.1" y1="1473" x2="258.1" y2="1490"/><line x1="277.7" y1="1473" x2="277.7" y2="1481"/><line x1="259.1" y1="1491.1" x2="269.1" y2="1491.1"/></g><g stroke="#888" stroke-width="1.3" fill="none"><line x1="263.1" y1="1476.4" x2="272.1" y2="1476.4"/><line x1="263.2" y1="1477" x2="263.2" y2="1485"/><path d="M272.6,1477 Q271.1,1485 264.1,1486.1"/></g><g fill="#1a8ae6"><circle cx="258.1" cy="1471.4" r="1.3"/><circle cx="277.7" cy="1471.4" r="1.3"/><circle cx="258.1" cy="1491.1" r="1.3"/><circle cx="263.2" cy="1476.4" r="1.3"/><circle cx="272.6" cy="1476.4" r="1.3"/><circle cx="263.2" cy="1486.1" r="1.3"/></g><path d="M269.1,1493.6 L271.3,1488 L273.1,1491Z" fill="#555"/><path d="M271.3,1488 L276.6,1484 L278.6,1487.5 L273.1,1491Z" fill="#f7c04a"/><circle cx="278.7" cy="1484.4" r="2.6" fill="#ef2a2a"/></g>
<g><g stroke="#a8a8a8" stroke-width="2" fill="none"><line x1="295.1" y1="1471.4" x2="313.1" y2="1471.4"/><line x1="294.1" y1="1473" x2="294.1" y2="1490"/><line x1="313.7" y1="1473" x2="313.7" y2="1481"/><line x1="295.1" y1="1491.1" x2="305.1" y2="1491.1"/></g><g stroke="#888" stroke-width="1.3" fill="none"><line x1="299.1" y1="1476.4" x2="308.1" y2="1476.4"/><line x1="299.2" y1="1477" x2="299.2" y2="1485"/><path d="M308.6,1477 Q307.1,1485 300.1,1486.1"/></g><g fill="#1a8ae6"><circle cx="294.1" cy="1471.4" r="1.3"/><circle cx="313.7" cy="1471.4" r="1.3"/><circle cx="294.1" cy="1491.1" r="1.3"/><circle cx="299.2" cy="1476.4" r="1.3"/><circle cx="308.6" cy="1476.4" r="1.3"/><circle cx="299.2" cy="1486.1" r="1.3"/></g><path d="M305.1,1493.6 L307.3,1488 L309.1,1491Z" fill="#555"/><path d="M307.3,1488 L312.6,1484 L314.6,1487.5 L309.1,1491Z" fill="#f7c04a"/><circle cx="314.7" cy="1484.4" r="2.6" fill="#ef2a2a"/></g>
<g><g stroke="#a8a8a8" stroke-width="2" fill="none"><line x1="331.1" y1="1471.4" x2="349.1" y2="1471.4"/><line x1="330.1" y1="1473" x2="330.1" y2="1490"/><line x1="349.7" y1="1473" x2="349.7" y2="1481"/><line x1="331.1" y1="1491.1" x2="341.1" y2="1491.1"/></g><g stroke="#888" stroke-width="1.3" fill="none"><line x1="335.1" y1="1476.4" x2="344.1" y2="1476.4"/><line x1="335.2" y1="1477" x2="335.2" y2="1485"/><path d="M344.6,1477 Q343.1,1485 336.1,1486.1"/></g><g fill="#1a8ae6"><circle cx="330.1" cy="1471.4" r="1.3"/><circle cx="349.7" cy="1471.4" r="1.3"/><circle cx="330.1" cy="1491.1" r="1.3"/><circle cx="335.2" cy="1476.4" r="1.3"/><circle cx="344.6" cy="1476.4" r="1.3"/><circle cx="335.2" cy="1486.1" r="1.3"/></g><path d="M341.1,1493.6 L343.3,1488 L345.1,1491Z" fill="#555"/><path d="M343.3,1488 L348.6,1484 L350.6,1487.5 L345.1,1491Z" fill="#f7c04a"/><circle cx="350.7" cy="1484.4" r="2.6" fill="#ef2a2a"/></g>
<g><g stroke="#a8a8a8" stroke-width="2" fill="none"><line x1="367.1" y1="1471.4" x2="385.1" y2="1471.4"/><line x1="366.1" y1="1473" x2="366.1" y2="1490"/><line x1="385.7" y1="1473" x2="385.7" y2="1481"/><line x1="367.1" y1="1491.1" x2="377.1" y2="1491.1"/></g><g stroke="#888" stroke-width="1.3" fill="none"><line x1="371.1" y1="1476.4" x2="380.1" y2="1476.4"/><line x1="371.2" y1="1477" x2="371.2" y2="1485"/><path d="M380.6,1477 Q379.1,1485 372.1,1486.1"/></g><g fill="#1a8ae6"><circle cx="366.1" cy="1471.4" r="1.3"/><circle cx="385.7" cy="1471.4" r="1.3"/><circle cx="366.1" cy="1491.1" r="1.3"/><circle cx="371.2" cy="1476.4" r="1.3"/><circle cx="380.6" cy="1476.4" r="1.3"/><circle cx="371.2" cy="1486.1" r="1.3"/></g><path d="M377.1,1493.6 L379.3,1488 L381.1,1491Z" fill="#555"/><path d="M379.3,1488 L384.6,1484 L386.6,1487.5 L381.1,1491Z" fill="#f7c04a"/><circle cx="386.7" cy="1484.4" r="2.6" fill="#ef2a2a"/></g>
<path d="M401.8,1490.5 L415.0,1490.5 L419.8,1485 L419.8,1488 L415.2,1493.8 L401.8,1493.8Z" fill="#b0b0b0"/><rect x="401.8" y="1474.5" width="13.2" height="15.3" fill="#68aee4"/><path d="M401.8,1474.5 L406.1,1470.2 L419.8,1470.2 L415.0,1474.5Z" fill="#8fcbfa"/><path d="M415.0,1474.5 L419.8,1470.2 L419.8,1485.5 L415.0,1489.8Z" fill="#4a93cf"/><line x1="422.5" y1="1473.5" x2="422.5" y2="1489.6" stroke="#333" stroke-width="1.3"/><path d="M422.5,1471 L420.8,1474.5 L424.2,1474.5Z" fill="#333"/>
<path d="M437.8,1490.5 L451.0,1490.5 L455.8,1485 L455.8,1488 L451.2,1493.8 L437.8,1493.8Z" fill="#b0b0b0"/><rect x="437.8" y="1474.5" width="13.2" height="15.3" fill="#68aee4"/><path d="M437.8,1474.5 L442.1,1470.2 L455.8,1470.2 L451.0,1474.5Z" fill="#8fcbfa"/><path d="M451.0,1474.5 L455.8,1470.2 L455.8,1485.5 L451.0,1489.8Z" fill="#4a93cf"/><line x1="458.5" y1="1473.5" x2="458.5" y2="1489.6" stroke="#333" stroke-width="1.3"/><path d="M458.5,1471 L456.8,1474.5 L460.2,1474.5Z" fill="#333"/>
<g fill="#333"><rect x="483.6" y="1471.7" width="2" height="19"/><rect x="475.1" y="1480.2" width="19" height="2"/><path d="M484.6,1469.9 L480.8,1475.4 L488.4,1475.4Z"/><path d="M484.6,1492.5 L480.8,1487.0 L488.4,1487.0Z"/><path d="M473.3,1481.2 L478.8,1477.4 L478.8,1485.0Z"/><path d="M495.9,1481.2 L490.4,1477.4 L490.4,1485.0Z"/></g>
<g fill="#333"><rect x="519.6" y="1471.7" width="2" height="19"/><rect x="511.1" y="1480.2" width="19" height="2"/><path d="M520.6,1469.9 L516.8,1475.4 L524.4,1475.4Z"/><path d="M520.6,1492.5 L516.8,1487.0 L524.4,1487.0Z"/><path d="M509.3,1481.2 L514.8,1477.4 L514.8,1485.0Z"/><path d="M531.9,1481.2 L526.4,1477.4 L526.4,1485.0Z"/></g>
<g fill="#333"><rect x="555.6" y="1471.7" width="2" height="19"/><rect x="547.1" y="1480.2" width="19" height="2"/><path d="M556.6,1469.9 L552.8,1475.4 L560.4,1475.4Z"/><path d="M556.6,1492.5 L552.8,1487.0 L560.4,1487.0Z"/><path d="M545.3,1481.2 L550.8,1477.4 L550.8,1485.0Z"/><path d="M567.9,1481.2 L562.4,1477.4 L562.4,1485.0Z"/></g>
<path d="M581.8,1490.5 L595.0,1490.5 L599.8,1485 L599.8,1488 L595.2,1493.8 L581.8,1493.8Z" fill="#b0b0b0"/><rect x="581.8" y="1474.5" width="13.2" height="15.3" fill="#68aee4"/><path d="M581.8,1474.5 L586.1,1470.2 L599.8,1470.2 L595.0,1474.5Z" fill="#8fcbfa"/><path d="M595.0,1474.5 L599.8,1470.2 L599.8,1485.5 L595.0,1489.8Z" fill="#4a93cf"/><line x1="602.5" y1="1473.5" x2="602.5" y2="1489.6" stroke="#333" stroke-width="1.3"/><path d="M602.5,1471 L600.8,1474.5 L604.2,1474.5Z" fill="#333"/>
<g fill="#333"><rect x="627.6" y="1471.7" width="2" height="19"/><rect x="619.1" y="1480.2" width="19" height="2"/><path d="M628.6,1469.9 L624.8,1475.4 L632.4,1475.4Z"/><path d="M628.6,1492.5 L624.8,1487.0 L632.4,1487.0Z"/><path d="M617.3,1481.2 L622.8,1477.4 L622.8,1485.0Z"/><path d="M639.9,1481.2 L634.4,1477.4 L634.4,1485.0Z"/></g>
<g fill="#333"><rect x="663.6" y="1471.7" width="2" height="19"/><rect x="655.1" y="1480.2" width="19" height="2"/><path d="M664.6,1469.9 L660.8,1475.4 L668.4,1475.4Z"/><path d="M664.6,1492.5 L660.8,1487.0 L668.4,1487.0Z"/><path d="M653.3,1481.2 L658.8,1477.4 L658.8,1485.0Z"/><path d="M675.9,1481.2 L670.4,1477.4 L670.4,1485.0Z"/></g>
<g fill="#333"><rect x="699.6" y="1471.7" width="2" height="19"/><rect x="691.1" y="1480.2" width="19" height="2"/><path d="M700.6,1469.9 L696.8,1475.4 L704.4,1475.4Z"/><path d="M700.6,1492.5 L696.8,1487.0 L704.4,1487.0Z"/><path d="M689.3,1481.2 L694.8,1477.4 L694.8,1485.0Z"/><path d="M711.9,1481.2 L706.4,1477.4 L706.4,1485.0Z"/></g>
<g fill="#333"><rect x="735.6" y="1471.7" width="2" height="19"/><rect x="727.1" y="1480.2" width="19" height="2"/><path d="M736.6,1469.9 L732.8,1475.4 L740.4,1475.4Z"/><path d="M736.6,1492.5 L732.8,1487.0 L740.4,1487.0Z"/><path d="M725.3,1481.2 L730.8,1477.4 L730.8,1485.0Z"/><path d="M747.9,1481.2 L742.4,1477.4 L742.4,1485.0Z"/></g>
<g fill="#333"><rect x="771.6" y="1471.7" width="2" height="19"/><rect x="763.1" y="1480.2" width="19" height="2"/><path d="M772.6,1469.9 L768.8,1475.4 L776.4,1475.4Z"/><path d="M772.6,1492.5 L768.8,1487.0 L776.4,1487.0Z"/><path d="M761.3,1481.2 L766.8,1477.4 L766.8,1485.0Z"/><path d="M783.9,1481.2 L778.4,1477.4 L778.4,1485.0Z"/></g>
<g fill="#333"><rect x="807.6" y="1471.7" width="2" height="19"/><rect x="799.1" y="1480.2" width="19" height="2"/><path d="M808.6,1469.9 L804.8,1475.4 L812.4,1475.4Z"/><path d="M808.6,1492.5 L804.8,1487.0 L812.4,1487.0Z"/><path d="M797.3,1481.2 L802.8,1477.4 L802.8,1485.0Z"/><path d="M819.9,1481.2 L814.4,1477.4 L814.4,1485.0Z"/></g>
<g fill="#333"><rect x="843.6" y="1471.7" width="2" height="19"/><rect x="835.1" y="1480.2" width="19" height="2"/><path d="M844.6,1469.9 L840.8,1475.4 L848.4,1475.4Z"/><path d="M844.6,1492.5 L840.8,1487.0 L848.4,1487.0Z"/><path d="M833.3,1481.2 L838.8,1477.4 L838.8,1485.0Z"/><path d="M855.9,1481.2 L850.4,1477.4 L850.4,1485.0Z"/></g>
<g opacity="0.3"><g stroke="#a8a8a8" stroke-width="2" fill="none"><line x1="873.1" y1="1471.4" x2="891.1" y2="1471.4"/><line x1="872.1" y1="1473" x2="872.1" y2="1490"/><line x1="891.7" y1="1473" x2="891.7" y2="1481"/><line x1="873.1" y1="1491.1" x2="883.1" y2="1491.1"/></g><g stroke="#888" stroke-width="1.3" fill="none"><line x1="877.1" y1="1476.4" x2="886.1" y2="1476.4"/><line x1="877.2" y1="1477" x2="877.2" y2="1485"/><path d="M886.6,1477 Q885.1,1485 878.1,1486.1"/></g><g fill="#1a8ae6"><circle cx="872.1" cy="1471.4" r="1.3"/><circle cx="891.7" cy="1471.4" r="1.3"/><circle cx="872.1" cy="1491.1" r="1.3"/><circle cx="877.2" cy="1476.4" r="1.3"/><circle cx="886.6" cy="1476.4" r="1.3"/><circle cx="877.2" cy="1486.1" r="1.3"/></g><path d="M883.1,1493.6 L885.3,1488 L887.1,1491Z" fill="#555"/><path d="M885.3,1488 L890.6,1484 L892.6,1487.5 L887.1,1491Z" fill="#f7c04a"/><circle cx="892.7" cy="1484.4" r="2.6" fill="#ef2a2a"/></g>
<rect x="233" y="1506.2" width="651" height="2.6" fill="#cbcbcb"/>
<rect x="233.2" y="1499.2" width="2.6" height="8" fill="#cbcbcb"/>
<rect x="269.2" y="1499.2" width="2.6" height="8" fill="#cbcbcb"/>
<rect x="305.2" y="1499.2" width="2.6" height="8" fill="#cbcbcb"/>
<rect x="341.2" y="1499.2" width="2.6" height="8" fill="#cbcbcb"/>
<rect x="377.2" y="1499.2" width="2.6" height="8" fill="#cbcbcb"/>
<rect x="413.2" y="1499.2" width="2.6" height="8" fill="#cbcbcb"/>
<rect x="449.2" y="1499.2" width="2.6" height="8" fill="#cbcbcb"/>
<rect x="485.2" y="1499.2" width="2.6" height="8" fill="#cbcbcb"/>
<rect x="521.2" y="1499.2" width="2.6" height="8" fill="#cbcbcb"/>
<rect x="557.2" y="1499.2" width="2.6" height="8" fill="#cbcbcb"/>
<rect x="593.2" y="1499.2" width="2.6" height="8" fill="#cbcbcb"/>
<rect x="629.2" y="1499.2" width="2.6" height="8" fill="#cbcbcb"/>
<rect x="665.2" y="1499.2" width="2.6" height="8" fill="#cbcbcb"/>
<rect x="701.2" y="1499.2" width="2.6" height="8" fill="#cbcbcb"/>
<rect x="737.2" y="1499.2" width="2.6" height="8" fill="#cbcbcb"/>
<rect x="773.2" y="1499.2" width="2.6" height="8" fill="#cbcbcb"/>
<rect x="809.2" y="1499.2" width="2.6" height="8" fill="#cbcbcb"/>
<rect x="845.2" y="1499.2" width="2.6" height="8" fill="#cbcbcb"/>
<rect x="881.2" y="1499.2" width="2.6" height="8" fill="#cbcbcb"/>
<path d="M854.3,1461 L871.7,1461 L871.7,1466 L865,1472 L861,1472 L854.3,1466Z" fill="#5e5e5e"/><rect x="861.5" y="1470" width="3.2" height="39" fill="#555"/>
<path d="M2516.9,1480.6 L2516.9,1485.4 L2513.5,1485.8 L2513.3,1486.3 L2515.5,1489.0 L2512.0,1492.5 L2509.3,1490.3 L2508.8,1490.5 L2508.4,1493.9 L2503.6,1493.9 L2503.2,1490.5 L2502.7,1490.3 L2500.0,1492.5 L2496.5,1489.0 L2498.7,1486.3 L2498.5,1485.8 L2495.1,1485.4 L2495.1,1480.6 L2498.5,1480.2 L2498.7,1479.7 L2496.5,1477.0 L2500.0,1473.5 L2502.7,1475.7 L2503.2,1475.5 L2503.6,1472.1 L2508.4,1472.1 L2508.8,1475.5 L2509.3,1475.7 L2512.0,1473.5 L2515.5,1477.0 L2513.3,1479.7 L2513.5,1480.2Z" fill="#858585"/><circle cx="2506.0" cy="1483.0" r="4.0" fill="#f2f2f2"/>
<path d="M2507.5,1412 A10.5,10.5 0 1 0 2507.5,1433 L2518,1433 L2518,1422.5 A10.5,10.5 0 0 0 2507.5,1412Z" fill="#000"/><g stroke="#fff" stroke-width="1.1"><line x1="2500" y1="1426" x2="2514.5" y2="1417.5"/><line x1="2501" y1="1429" x2="2515" y2="1421"/><line x1="2508" y1="1428.5" x2="2515" y2="1424.5"/></g><!-- viewcube -->
<defs>
<radialGradient id="vcshadow" cx="0.5" cy="0.5" r="0.5"><stop offset="0" stop-color="#cfcfcf"/><stop offset="1" stop-color="#fefefe" stop-opacity="0"/></radialGradient>
<linearGradient id="vcf" x1="0" y1="0" x2="0" y2="1"><stop offset="0" stop-color="#f4f4f4"/><stop offset="1" stop-color="#dedede"/></linearGradient>
</defs>
<ellipse cx="2480" cy="311" rx="36" ry="14" fill="url(#vcshadow)"/>
<path d="M2442.6,261 L2469,270.5 L2510,263 L2482,254.5Z" fill="#f4f4f4"/>
<path d="M2442.6,261 L2469,270.5 L2470,320.5 L2444,305Z" fill="url(#vcf)"/>
<path d="M2469,270.5 L2510,263 L2508,307.5 L2470,320.5Z" fill="url(#vcf)"/>
<g fill="none" stroke="#8a8a8a" stroke-width="0.9" stroke-dasharray="3,2">
<path d="M2442.6,261 L2469,270.5 L2510,263 L2482,254.5Z"/><path d="M2469,270.5 L2470,320.5"/><path d="M2510,263 L2508,307.5 L2470,320.5"/><path d="M2442.6,261 L2444,305 L2470,320.5"/></g>
<text x="0" y="0" font-family="Liberation Sans" font-weight="bold" font-size="10" fill="#9a9a9e" transform="translate(2446.5,286) rotate(32) scale(0.62,1.15)">VORNE</text>
<text x="0" y="0" font-family="Liberation Sans" font-weight="bold" font-size="10" fill="#9a9a9e" transform="translate(2474.5,300.5) rotate(-25) scale(0.82,1.2)">RECHTS</text>
<line x1="2441.2" y1="253.5" x2="2443.8" y2="305" stroke="#5858ff" stroke-width="1.6"/>
<text x="2436.5" y="251" font-family="Liberation Sans" font-size="11" fill="#6a6aff">Z</text>
<line x1="2443.8" y1="304.5" x2="2474" y2="325.5" stroke="#ee8888" stroke-width="1.6"/>
<text x="2476" y="335" font-family="Liberation Sans" font-size="11" fill="#ff7a7a">X</text>

<!-- taskbar -->
<defs>
<linearGradient id="gcloud" x1="0" y1="0" x2="0" y2="1"><stop offset="0" stop-color="#c4dcf8"/><stop offset="1" stop-color="#8cb8ee"/></linearGradient>
<linearGradient id="gwin" x1="0" y1="0" x2="1" y2="1"><stop offset="0" stop-color="#5ed0fb"/><stop offset="1" stop-color="#0a6fd6"/></linearGradient>
<linearGradient id="gexp" x1="0" y1="0" x2="0" y2="1"><stop offset="0" stop-color="#ffd866"/><stop offset="1" stop-color="#f5b925"/></linearGradient>
<linearGradient id="gfus" x1="0" y1="0" x2="0" y2="1"><stop offset="0" stop-color="#ff7a1a"/><stop offset="1" stop-color="#ff5a00"/></linearGradient>
</defs>
<path d="M33,1574 Q29,1574 29,1568 Q29,1561 37,1561 Q39,1553 48,1553 Q57,1553 59,1561 Q65,1561 65,1567.5 Q65,1574 60,1574Z" fill="url(#gcloud)"/>
<circle cx="57.5" cy="1549.4" r="11.8" fill="#c8251e"/>
<text x="57.5" y="1555.5" font-family="Liberation Sans" font-size="15" fill="#fff" text-anchor="middle">2</text>
<g fill="url(#gwin)"><rect x="798" y="1547" width="17" height="17" rx="1.5"/><rect x="816.5" y="1547" width="17" height="17" rx="1.5"/><rect x="798" y="1565.5" width="17" height="17" rx="1.5"/><rect x="816.5" y="1565.5" width="17" height="17" rx="1.5"/></g>
<circle cx="879.5" cy="1562.5" r="7.8" fill="none" stroke="#1a1a1a" stroke-width="2.2"/><line x1="885" y1="1568" x2="891.5" y2="1574.5" stroke="#1a1a1a" stroke-width="2.6" stroke-linecap="round"/>
<!-- task view -->
<rect x="1209" y="1548" width="27" height="23" rx="1.5" fill="#ececec" stroke="#dadada" stroke-width="0.8"/>
<rect x="1200.5" y="1557" width="27" height="24.5" rx="2" fill="#2a2a2a"/>
<rect x="1209" y="1557" width="18.5" height="14" fill="#bcbcbc"/>
<!-- chrome -->
<circle cx="1284" cy="1563.6" r="18" fill="#2ea44f"/>
<path d="M1284,1563.6 L1268.4,1554.6 A18,18 0 0 1 1299.6,1554.6Z" fill="#e33b2e"/>
<path d="M1284,1563.6 L1299.6,1554.6 A18,18 0 0 1 1284,1581.6Z" fill="#fbc02d"/>
<circle cx="1284" cy="1563.6" r="8.2" fill="#fff"/><circle cx="1284" cy="1563.6" r="6.4" fill="#3b7ee8"/>
<!-- opera -->
<ellipse cx="1350" cy="1563.6" rx="16.5" ry="17" fill="none" stroke="#f0274a" stroke-width="2.4"/>
<ellipse cx="1350" cy="1563.6" rx="6.5" ry="13" fill="none" stroke="#f0274a" stroke-width="2.2"/>
<!-- explorer -->
<path d="M1398,1550 Q1398,1548 1400,1548 L1408,1548 L1411,1551 L1432,1551 Q1434,1551 1434,1553 L1434,1580 L1398,1580Z" fill="#e8a700"/>
<rect x="1398" y="1552" width="36" height="28" rx="1" fill="url(#gexp)"/>
<rect x="1404" y="1569.5" width="24" height="11" rx="3" fill="#1a7fd8"/><rect x="1408" y="1574" width="16" height="1.5" fill="#0c4e9a"/>
<!-- discord -->
<circle cx="1482" cy="1563.6" r="18" fill="#5865f2"/>
<path d="M1473,1556 Q1477.5,1553.5 1480,1554.5 L1484,1554.5 Q1486.5,1553.5 1491,1556 Q1494.5,1562 1493.5,1569 Q1490.5,1571.5 1487.5,1572 L1486,1569.8 Q1482,1571 1478,1569.8 L1476.5,1572 Q1473.5,1571.5 1470.5,1569 Q1469.5,1562 1473,1556Z" fill="#fff"/>
<ellipse cx="1478" cy="1564" rx="2" ry="2.3" fill="#5865f2"/><ellipse cx="1486" cy="1564" rx="2" ry="2.3" fill="#5865f2"/>
<!-- spotify -->
<circle cx="1548" cy="1563.6" r="17.6" fill="#1ed760"/>
<g fill="none" stroke="#111" stroke-linecap="round"><path d="M1538.5,1557.5 Q1549,1554 1559,1559" stroke-width="2.6"/><path d="M1539.5,1563 Q1548,1560.5 1557,1564.5" stroke-width="2.2"/><path d="M1540.5,1568.3 Q1548,1566.5 1555,1569.5" stroke-width="1.8"/></g>
<!-- minecraft -->
<rect x="1596" y="1546" width="36" height="36" fill="#4f9a34"/>
<g fill="#111"><rect x="1602.5" y="1553" width="7.5" height="7"/><rect x="1618" y="1553" width="7.5" height="7"/><rect x="1610" y="1560" width="8" height="5"/><rect x="1606" y="1565" width="16" height="7"/><rect x="1606" y="1572" width="4" height="4"/><rect x="1618" y="1572" width="4" height="4"/></g>
<!-- vscode -->
<path d="M1689.5,1546 L1698,1550 L1698,1577 L1689.5,1581 L1672,1566 L1664.5,1572 L1662,1570.5 L1662,1556.5 L1664.5,1555 L1672,1561Z" fill="#1f9cf0"/>
<path d="M1689.5,1546 L1689.5,1581 L1668,1563.5Z" fill="#0065a9" opacity="0.55"/>
<path d="M1689.5,1554 L1677,1563.5 L1689.5,1573Z" fill="#fff"/>
<!-- fusion -->
<path d="M1732,1549 Q1732,1546 1735,1546 L1755,1546 L1755,1570 L1729,1570 L1729,1552Z" fill="#ff9a4a"/>
<rect x="1733" y="1546" width="26" height="26" rx="1.5" fill="url(#gfus)"/>
<rect x="1732" y="1571" width="31" height="10" rx="1" fill="#8e3b0e"/>
<path d="M1759,1550 L1763,1552 L1763,1571 L1759,1571Z" fill="#a8440f"/>
<text x="1746" y="1566" font-family="Liberation Sans" font-weight="bold" font-size="17" fill="#fff" text-anchor="middle">F</text>
<text x="1747.5" y="1579.5" font-family="Liberation Sans" font-weight="bold" font-size="7" fill="#f4c9a9" text-anchor="middle">FUS</text>
<!-- dots -->
<g fill="#8a8a8a"><rect x="1280" y="1588.5" width="8" height="3.5" rx="1.75"/><rect x="1346" y="1588.5" width="8" height="3.5" rx="1.75"/><rect x="1412" y="1588.5" width="8" height="3.5" rx="1.75"/><rect x="1544" y="1588.5" width="8" height="3.5" rx="1.75"/><rect x="1676" y="1588.5" width="8" height="3.5" rx="1.75"/></g>
<rect x="1734" y="1587.8" width="24" height="4.2" rx="2.1" fill="#0a72d6"/>
<!-- tray -->
<path d="M2280.5,1567.8 L2288.3,1560 L2296,1567.8" fill="none" stroke="#1a1a1a" stroke-width="1.6"/>
<g fill="none" stroke="#1a1a1a" stroke-width="1.6"><path d="M2324.5,1562 Q2336,1550 2347.5,1562"/><path d="M2328.5,1566 Q2336,1558 2343.5,1566"/></g><circle cx="2336" cy="1570.5" r="1.8" fill="#1a1a1a"/>
<path d="M2360.5,1559 L2364,1559 L2369.5,1555 L2369.5,1572 L2364,1568 L2360.5,1568Z" fill="none" stroke="#1a1a1a" stroke-width="1.4" stroke-linejoin="round"/>
<path d="M2374,1560 L2381.5,1567.5 M2381.5,1560 L2374,1567.5" stroke="#1a1a1a" stroke-width="1.3"/>
<rect x="2396.5" y="1557.5" width="19" height="12.5" rx="2.5" fill="none" stroke="#1a1a1a" stroke-width="1.4"/>
<rect x="2399" y="1560" width="11.5" height="7.5" fill="#1a1a1a"/><rect x="2416" y="1561" width="2.2" height="5.5" rx="1" fill="#1a1a1a"/>
<path d="M2400,1552.5 L2397.5,1559 L2400.5,1559 L2398.5,1565" fill="none" stroke="#1a1a1a" stroke-width="1.3"/>
</svg>
</body></html>
